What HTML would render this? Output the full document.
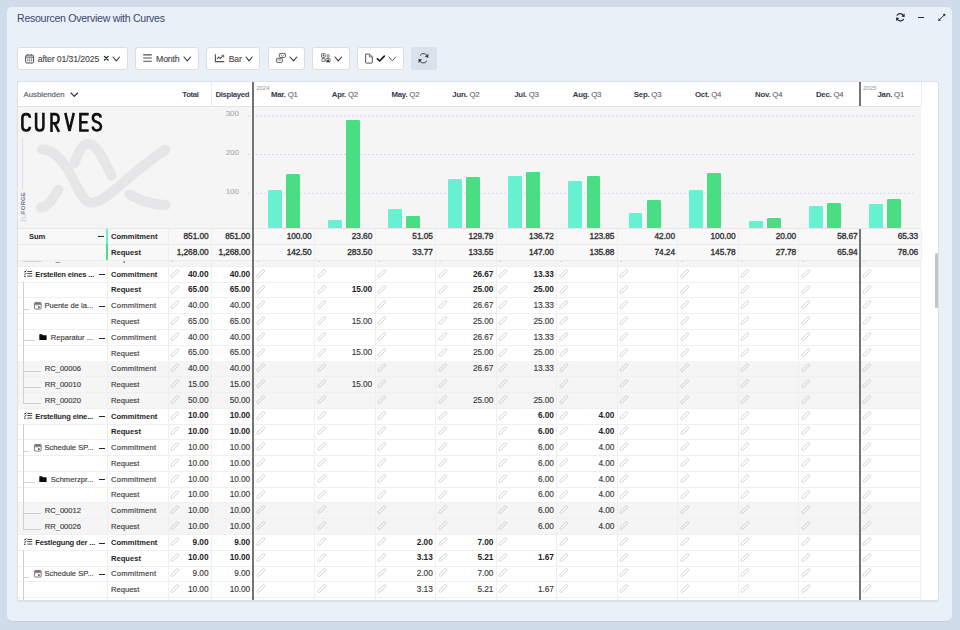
<!DOCTYPE html><html><head><meta charset="utf-8"><title>Resourcen Overview with Curves</title><style>
html,body{margin:0;padding:0;}
body{width:960px;height:630px;position:relative;overflow:hidden;background:#d0dcea;font-family:"Liberation Sans", sans-serif;}
body div, body svg{position:absolute;box-sizing:border-box;}
svg{overflow:visible;}
</style></head><body>
<div style="left:7px;top:7.3px;width:945px;height:613.7px;background:#e9f0f8;border-radius:5px;box-shadow:0 0.8px 0.6px rgba(0,0,0,0.08);"></div>
<div style="left:17.1px;top:10.61px;font-size:10.6px;line-height:14.84px;color:#3b4870;font-weight:normal;white-space:nowrap;letter-spacing:-0.3px;">Resourcen Overview with Curves</div>
<svg style="left:894px;top:12px;" width="12" height="11" viewBox="894 12 12 11"><g fill="none" stroke="#1d2846" stroke-width="1.25" stroke-linecap="round"><path d="M903.6,16.2 A3.6,3.6 0 0 0 897.2,15.2"/><path d="M897.0,18.4 A3.6,3.6 0 0 0 903.4,19.4"/></g><path d="M904.6,13.6 L904.6,17.0 L901.4,16.6 Z" fill="#1d2846"/><path d="M896.1,21.0 L896.1,17.6 L899.3,18.0 Z" fill="#1d2846"/></svg>
<div style="left:918.3px;top:16.9px;width:5.8px;height:1.2px;background:#1d2846;"></div>
<svg style="left:937px;top:13px;" width="10" height="9" viewBox="937 13 10 9"><path d="M939.4,19.8 L944.4,14.9" stroke="#1d2846" stroke-width="1.0"/><path d="M938.3,20.9 L938.6,18.3 L941,20.6 Z M945.4,13.8 L945.1,16.4 L942.7,14.1 Z" fill="#1d2846"/></svg>
<div style="left:16.75px;top:47px;width:111.25px;height:22.6px;background:#fff;border-radius:3px;border:1px solid #dadde2;"></div>
<svg style="left:24px;top:52.5px;" width="12" height="12" viewBox="24 52.5 12 12"><rect x="25.6" y="54.6" width="8" height="7.9" rx="1.2" fill="none" stroke="#4f4f55" stroke-width="1"/><path d="M25.6,56.6 H33.6" stroke="#4f4f55" stroke-width="1"/><path d="M27.7,53.7 V55 M31.5,53.7 V55" stroke="#4f4f55" stroke-width="0.9"/><g fill="#4f4f55"><rect x="27.2" y="58" width="1.2" height="1"/><rect x="29.1" y="58" width="1.2" height="1"/><rect x="31" y="58" width="1.2" height="1"/><rect x="27.2" y="59.8" width="1.2" height="1"/><rect x="29.1" y="59.8" width="1.2" height="1"/><rect x="31" y="59.8" width="1.2" height="1"/></g></svg>
<div style="left:37.75px;top:52.59px;font-size:8.8px;line-height:12.32px;color:#47474c;font-weight:normal;white-space:nowrap;letter-spacing:-0.17px;-webkit-text-stroke:0.12px #47474c;">after 01/31/2025</div>
<svg style="left:102.5px;top:55px;" width="7" height="6" viewBox="102.5 55 7 6"><path d="M103.9,56.3 L107.6,60.0 M107.6,56.3 L103.9,60.0" stroke="#1e1e1e" stroke-width="1.2" stroke-linecap="round"/></svg>
<svg style="left:111.9px;top:56.1px;" width="8.6" height="5.9" viewBox="111.9 56.1 8.6 5.9"><path d="M112.9,57.1 L116.2,61 L119.5,57.1" fill="none" stroke="#383838" stroke-width="1.1" stroke-linecap="round" stroke-linejoin="round"/></svg>
<div style="left:134.7px;top:47px;width:64.7px;height:22.6px;background:#fff;border-radius:3px;border:1px solid #dadde2;"></div>
<svg style="left:142px;top:53px;" width="11" height="10" viewBox="142 53 11 10"><path d="M143.2,54.8 H151.8 M143.2,58 H151.8 M143.2,61.2 H151.8" stroke="#4f4f55" stroke-width="1.15"/></svg>
<div style="left:156px;top:52.59px;font-size:8.8px;line-height:12.32px;color:#47474c;font-weight:normal;white-space:nowrap;letter-spacing:-0.2px;-webkit-text-stroke:0.12px #47474c;">Month</div>
<svg style="left:183.4px;top:56.1px;" width="8.6" height="5.9" viewBox="183.4 56.1 8.6 5.9"><path d="M184.4,57.1 L187.7,61 L191,57.1" fill="none" stroke="#383838" stroke-width="1.1" stroke-linecap="round" stroke-linejoin="round"/></svg>
<div style="left:206.3px;top:47px;width:54.2px;height:22.6px;background:#fff;border-radius:3px;border:1px solid #dadde2;"></div>
<svg style="left:214px;top:53px;" width="12" height="11" viewBox="214 53 12 11"><path d="M215.4,54.3 V61.6 H224.3" fill="none" stroke="#4f4f55" stroke-width="1.1"/><path d="M216.9,59.2 L218.7,57 L220.3,58.7 L222.6,56" fill="none" stroke="#4f4f55" stroke-width="1.05"/><path d="M221.6,55.2 H223.7 V57.3" fill="none" stroke="#4f4f55" stroke-width="1"/></svg>
<div style="left:228.7px;top:52.8px;font-size:8.6px;line-height:12.04px;color:#47474c;font-weight:normal;white-space:nowrap;letter-spacing:-0.1px;-webkit-text-stroke:0.12px #47474c;">Bar</div>
<svg style="left:245.1px;top:56.1px;" width="8.1" height="5.9" viewBox="245.1 56.1 8.1 5.9"><path d="M246.1,57.1 L249.15,61 L252.2,57.1" fill="none" stroke="#383838" stroke-width="1.1" stroke-linecap="round" stroke-linejoin="round"/></svg>
<div style="left:267.6px;top:47px;width:37.5px;height:22.6px;background:#fff;border-radius:3px;border:1px solid #dadde2;"></div>
<svg style="left:275px;top:52px;" width="12" height="12" viewBox="275 52 12 12"><rect x="279.4" y="53.4" width="6.1" height="4.0" rx="0.9" fill="none" stroke="#4f4f55" stroke-width="0.9"/><rect x="276.4" y="58.3" width="6.0" height="4.1" rx="0.9" fill="none" stroke="#4f4f55" stroke-width="0.9"/><path d="M280.4,54.4 L282.4,56.2 L284.6,54.5 M279.8,58 L281.2,57" fill="none" stroke="#4f4f55" stroke-width="0.65"/><path d="M277.4,60 H281.4" stroke="#4f4f55" stroke-width="0.6"/></svg>
<svg style="left:288.8px;top:56.1px;" width="8.9" height="5.9" viewBox="288.8 56.1 8.9 5.9"><path d="M289.8,57.1 L293.25,61 L296.7,57.1" fill="none" stroke="#383838" stroke-width="1.1" stroke-linecap="round" stroke-linejoin="round"/></svg>
<div style="left:311.7px;top:47px;width:38.05px;height:22.6px;background:#fff;border-radius:3px;border:1px solid #dadde2;"></div>
<svg style="left:320px;top:52px;" width="12" height="12" viewBox="320 52 12 12"><rect x="321.5" y="53.6" width="3.7" height="3.8" rx="0.6" fill="none" stroke="#4f4f55" stroke-width="0.8"/><ellipse cx="323.35" cy="55.5" rx="0.6" ry="1.0" fill="#333"/><rect x="327.1" y="54.7" width="2.0" height="2.5" rx="0.5" fill="none" stroke="#4f4f55" stroke-width="0.8"/><rect x="321.9" y="58.6" width="3.2" height="2.8" rx="0.5" fill="none" stroke="#4f4f55" stroke-width="0.8"/><rect x="326.1" y="58.4" width="4.0" height="3.6" rx="0.5" fill="none" stroke="#4f4f55" stroke-width="0.8"/><path d="M326.6,61.8 L328.1,58.9 L329.6,61.8 Z" fill="#111"/></svg>
<svg style="left:334.1px;top:56.1px;" width="8.6" height="5.9" viewBox="334.1 56.1 8.6 5.9"><path d="M335.1,57.1 L338.4,61 L341.7,57.1" fill="none" stroke="#383838" stroke-width="1.1" stroke-linecap="round" stroke-linejoin="round"/></svg>
<div style="left:356.7px;top:47px;width:47.3px;height:22.6px;background:#fff;border-radius:3px;border:1px solid #dadde2;"></div>
<svg style="left:364px;top:52.5px;" width="22" height="11" viewBox="364 52.5 22 11"><path d="M365.6,53.6 H369.6 L372.3,56.3 V62.1 Q372.3,62.6 371.8,62.6 H366.1 Q365.6,62.6 365.6,62.1 Z" fill="none" stroke="#4f4f55" stroke-width="0.95" stroke-linejoin="round"/><path d="M369.4,53.8 V56.5 H372.1" fill="none" stroke="#4f4f55" stroke-width="0.8"/><path d="M377.3,58.2 L379.6,60.5 L384.3,55.6" fill="none" stroke="#151515" stroke-width="1.6" stroke-linecap="round" stroke-linejoin="round"/></svg>
<svg style="left:387.8px;top:56.1px;" width="8.6" height="5.9" viewBox="387.8 56.1 8.6 5.9"><path d="M388.8,57.1 L392.1,61 L395.4,57.1" fill="none" stroke="#5a5a5a" stroke-width="1.0" stroke-linecap="round" stroke-linejoin="round"/></svg>
<div style="left:410.5px;top:47px;width:26.5px;height:22.6px;background:#d9e1ea;border-radius:3px;"></div>
<svg style="left:417px;top:51.5px;" width="13" height="13" viewBox="417 51.5 13 13"><g fill="none" stroke="#3c3c44" stroke-width="0.95" stroke-linecap="round"><path d="M427.5,56.6 A4.0,4.0 0 0 0 420.1,54.9"/><path d="M419.4,58.8 A4.0,4.0 0 0 0 426.8,60.6"/></g><path d="M428.4,53.2 L428.4,57.1 L424.8,56.5 Z" fill="#3c3c44"/><path d="M418.5,62.4 L418.5,58.4 L422.1,59.0 Z" fill="#3c3c44"/></svg>
<div style="left:16.7px;top:81px;width:922.3px;height:520.2px;background:#fff;border:1px solid #dde1e6;border-radius:3px;box-shadow:0 0.8px 0.8px rgba(0,0,0,0.07);"></div>
<div style="left:17.7px;top:105.5px;width:903.5px;height:1px;background:#e3e3e3;"></div>
<div style="left:23.6px;top:89.69px;font-size:7.75px;line-height:10.85px;color:#555c6c;font-weight:normal;white-space:nowrap;-webkit-text-stroke:0.15px #555c6c;">Ausblenden</div>
<svg style="left:70.2px;top:91.8px;" width="8.6" height="5.4" viewBox="70.2 91.8 8.6 5.4"><path d="M71.2,92.8 L74.5,96.2 L77.8,92.8" fill="none" stroke="#2e2e2e" stroke-width="1.1" stroke-linecap="round" stroke-linejoin="round"/></svg>
<div style="right:761.4px;top:89.54px;font-size:7.8px;line-height:10.92px;color:#384052;font-weight:bold;white-space:nowrap;text-align:right;letter-spacing:-0.35px;">Total</div>
<div style="right:710.8px;top:89.54px;font-size:7.8px;line-height:10.92px;color:#384052;font-weight:bold;white-space:nowrap;text-align:right;letter-spacing:-0.35px;">Displayed</div>
<div style="left:210.8px;top:82px;width:1px;height:23.5px;background:#ececec;"></div>
<div style="left:920.7px;top:82px;width:1px;height:23.5px;background:#ececec;"></div>
<div style="left:184.27px;top:89.54px;width:200px;font-size:7.8px;line-height:10.92px;color:#333;font-weight:normal;white-space:nowrap;text-align:center;letter-spacing:-0.22px;"><b style="color:#333a4a">Mar.</b> <span style="color:#5f6570;-webkit-text-stroke:0.12px #5f6570">Q1</span></div>
<div style="left:244.83px;top:89.54px;width:200px;font-size:7.8px;line-height:10.92px;color:#333;font-weight:normal;white-space:nowrap;text-align:center;letter-spacing:-0.22px;"><b style="color:#333a4a">Apr.</b> <span style="color:#5f6570;-webkit-text-stroke:0.12px #5f6570">Q2</span></div>
<div style="left:305.38px;top:89.54px;width:200px;font-size:7.8px;line-height:10.92px;color:#333;font-weight:normal;white-space:nowrap;text-align:center;letter-spacing:-0.22px;"><b style="color:#333a4a">May.</b> <span style="color:#5f6570;-webkit-text-stroke:0.12px #5f6570">Q2</span></div>
<div style="left:365.92px;top:89.54px;width:200px;font-size:7.8px;line-height:10.92px;color:#333;font-weight:normal;white-space:nowrap;text-align:center;letter-spacing:-0.22px;"><b style="color:#333a4a">Jun.</b> <span style="color:#5f6570;-webkit-text-stroke:0.12px #5f6570">Q2</span></div>
<div style="left:426.48px;top:89.54px;width:200px;font-size:7.8px;line-height:10.92px;color:#333;font-weight:normal;white-space:nowrap;text-align:center;letter-spacing:-0.22px;"><b style="color:#333a4a">Jul.</b> <span style="color:#5f6570;-webkit-text-stroke:0.12px #5f6570">Q3</span></div>
<div style="left:487.02px;top:89.54px;width:200px;font-size:7.8px;line-height:10.92px;color:#333;font-weight:normal;white-space:nowrap;text-align:center;letter-spacing:-0.22px;"><b style="color:#333a4a">Aug.</b> <span style="color:#5f6570;-webkit-text-stroke:0.12px #5f6570">Q3</span></div>
<div style="left:547.57px;top:89.54px;width:200px;font-size:7.8px;line-height:10.92px;color:#333;font-weight:normal;white-space:nowrap;text-align:center;letter-spacing:-0.22px;"><b style="color:#333a4a">Sep.</b> <span style="color:#5f6570;-webkit-text-stroke:0.12px #5f6570">Q3</span></div>
<div style="left:608.12px;top:89.54px;width:200px;font-size:7.8px;line-height:10.92px;color:#333;font-weight:normal;white-space:nowrap;text-align:center;letter-spacing:-0.22px;"><b style="color:#333a4a">Oct.</b> <span style="color:#5f6570;-webkit-text-stroke:0.12px #5f6570">Q4</span></div>
<div style="left:668.67px;top:89.54px;width:200px;font-size:7.8px;line-height:10.92px;color:#333;font-weight:normal;white-space:nowrap;text-align:center;letter-spacing:-0.22px;"><b style="color:#333a4a">Nov.</b> <span style="color:#5f6570;-webkit-text-stroke:0.12px #5f6570">Q4</span></div>
<div style="left:729.72px;top:89.54px;width:200px;font-size:7.8px;line-height:10.92px;color:#333;font-weight:normal;white-space:nowrap;text-align:center;letter-spacing:-0.22px;"><b style="color:#333a4a">Dec.</b> <span style="color:#5f6570;-webkit-text-stroke:0.12px #5f6570">Q4</span></div>
<div style="left:790.75px;top:89.54px;width:200px;font-size:7.8px;line-height:10.92px;color:#333;font-weight:normal;white-space:nowrap;text-align:center;letter-spacing:-0.22px;"><b style="color:#333a4a">Jan.</b> <span style="color:#5f6570;-webkit-text-stroke:0.12px #5f6570">Q1</span></div>
<div style="left:256.2px;top:83.91px;font-size:6.2px;line-height:8.68px;color:#999;font-weight:normal;white-space:nowrap;letter-spacing:-0.1px;">2024</div>
<div style="left:862.9px;top:83.91px;font-size:6.2px;line-height:8.68px;color:#999;font-weight:normal;white-space:nowrap;letter-spacing:-0.1px;">2025</div>
<div style="left:17.7px;top:106.5px;width:903.5px;height:122px;background:#f5f5f5;"></div>
<svg style="left:248px;top:110px;" width="673" height="90" viewBox="248 110 673 90"><path d="M248,115.8 H914.5" stroke="#c6cff0" stroke-width="0.9" stroke-dasharray="1.6,2.4"/><path d="M248,154.5 H914.5" stroke="#c6cff0" stroke-width="0.9" stroke-dasharray="1.6,2.4"/><path d="M248,193.3 H914.5" stroke="#c6cff0" stroke-width="0.9" stroke-dasharray="1.6,2.4"/></svg>
<div style="right:721px;top:108.13px;font-size:8px;line-height:11.2px;color:#ababab;font-weight:normal;white-space:nowrap;text-align:right;-webkit-text-stroke:0.1px #ababab;">300</div>
<div style="right:721px;top:146.83px;font-size:8px;line-height:11.2px;color:#ababab;font-weight:normal;white-space:nowrap;text-align:right;-webkit-text-stroke:0.1px #ababab;">200</div>
<div style="right:721px;top:185.63px;font-size:8px;line-height:11.2px;color:#ababab;font-weight:normal;white-space:nowrap;text-align:right;-webkit-text-stroke:0.1px #ababab;">100</div>
<div style="left:17.7px;top:228px;width:903.5px;height:1px;background:#e6e6e6;"></div>
<div style="left:267.9px;top:190.25px;width:13.9px;height:37.75px;background:#66f2d1;border-radius:1.3px 1.3px 0 0;"></div>
<div style="left:286px;top:173.87px;width:13.9px;height:54.13px;background:#4ade84;border-radius:1.3px 1.3px 0 0;"></div>
<div style="left:328.01px;top:219.7px;width:13.9px;height:8.3px;background:#66f2d1;border-radius:1.3px 1.3px 0 0;"></div>
<div style="left:346.11px;top:119.51px;width:13.9px;height:108.49px;background:#4ade84;border-radius:1.3px 1.3px 0 0;"></div>
<div style="left:388.12px;top:209.12px;width:13.9px;height:18.88px;background:#66f2d1;border-radius:1.3px 1.3px 0 0;"></div>
<div style="left:406.22px;top:215.78px;width:13.9px;height:12.22px;background:#4ade84;border-radius:1.3px 1.3px 0 0;"></div>
<div style="left:448.23px;top:178.77px;width:13.9px;height:49.23px;background:#66f2d1;border-radius:1.3px 1.3px 0 0;"></div>
<div style="left:466.33px;top:177.32px;width:13.9px;height:50.68px;background:#4ade84;border-radius:1.3px 1.3px 0 0;"></div>
<div style="left:508.34px;top:176.09px;width:13.9px;height:51.91px;background:#66f2d1;border-radius:1.3px 1.3px 0 0;"></div>
<div style="left:526.44px;top:172.13px;width:13.9px;height:55.87px;background:#4ade84;border-radius:1.3px 1.3px 0 0;"></div>
<div style="left:568.45px;top:181.06px;width:13.9px;height:46.94px;background:#66f2d1;border-radius:1.3px 1.3px 0 0;"></div>
<div style="left:586.55px;top:176.42px;width:13.9px;height:51.58px;background:#4ade84;border-radius:1.3px 1.3px 0 0;"></div>
<div style="left:628.56px;top:212.61px;width:13.9px;height:15.39px;background:#66f2d1;border-radius:1.3px 1.3px 0 0;"></div>
<div style="left:646.66px;top:200.18px;width:13.9px;height:27.82px;background:#4ade84;border-radius:1.3px 1.3px 0 0;"></div>
<div style="left:688.67px;top:190.25px;width:13.9px;height:37.75px;background:#66f2d1;border-radius:1.3px 1.3px 0 0;"></div>
<div style="left:706.77px;top:172.6px;width:13.9px;height:55.4px;background:#4ade84;border-radius:1.3px 1.3px 0 0;"></div>
<div style="left:748.78px;top:221.09px;width:13.9px;height:6.91px;background:#66f2d1;border-radius:1.3px 1.3px 0 0;"></div>
<div style="left:766.88px;top:218.09px;width:13.9px;height:9.91px;background:#4ade84;border-radius:1.3px 1.3px 0 0;"></div>
<div style="left:808.89px;top:206.18px;width:13.9px;height:21.82px;background:#66f2d1;border-radius:1.3px 1.3px 0 0;"></div>
<div style="left:826.99px;top:203.38px;width:13.9px;height:24.62px;background:#4ade84;border-radius:1.3px 1.3px 0 0;"></div>
<div style="left:869px;top:203.62px;width:13.9px;height:24.38px;background:#66f2d1;border-radius:1.3px 1.3px 0 0;"></div>
<div style="left:887.1px;top:198.71px;width:13.9px;height:29.29px;background:#4ade84;border-radius:1.3px 1.3px 0 0;"></div>
<svg style="left:18px;top:110px;" width="88" height="25" viewBox="18 110 88 25"><g fill="none" stroke="#111" stroke-width="2.55" stroke-linecap="butt" stroke-linejoin="miter"><path d="M29.9,117.6 V117.8 C29.9,115.6 28.5,114.1 26.15,114.1 C23.8,114.1 22.4,115.6 22.4,117.8 V126.7 C22.4,128.9 23.8,130.4 26.15,130.4 C28.5,130.4 29.9,128.9 29.9,126.7 V127.2"/><path d="M36.1,112.8 V126.7 C36.1,128.9 37.5,130.4 39.75,130.4 C42,130.4 43.4,128.9 43.4,126.7 V112.8"/><path d="M51.5,132 V114.1 H54.7 C57.2,114.1 58.6,115.6 58.6,118.7 C58.6,121.8 57.2,123.3 54.7,123.3 H51.5"/><path d="M54.6,123.4 L59,131.8"/><path d="M65.3,112.9 L69.5,131 L73.8,112.9"/><path d="M88.7,114.1 H80.4 V130.4 H88.7 M80.4,122.3 H87.6"/><path d="M100.7,117.6 C100.6,115.3 99.2,114.1 96.8,114.1 C94.3,114.1 92.9,115.6 92.9,117.9 C92.9,120.2 94.3,121.2 96.8,122 C99.5,122.9 100.9,124 100.9,126.6 C100.9,129 99.3,130.4 96.8,130.4 C94.2,130.4 92.8,129 92.8,126.6"/></g></svg>
<svg style="left:30px;top:135px;" width="145" height="80" viewBox="30 135 145 80"><g fill="none" stroke="#e5e6e8" stroke-width="10" stroke-linecap="round" stroke-linejoin="round"><path d="M42,149.5 C52,149.5 60,157 68,170 C77,185 82,201 90,202.5 C100,204 112,192 125,181 C140,168 153,158 165.5,149.5"/><path d="M74.5,163.5 C78,153 82,144 88.5,143.5 C96,143 104,160 111.5,175.5"/><path d="M58.5,189.5 C53,199 48,207 41,207.5"/><path d="M129.5,194.5 C140,200 150,204.5 165.5,205"/></g></svg>
<div style="left:22.3px;top:138px;width:0.9px;height:50.5px;background:#dadde3;"></div>
<div style="left:23.4px;top:203px;width:40px;height:10px;transform:translate(-50%,-50%) rotate(-90deg);font-size:5.9px;line-height:10px;font-weight:bold;color:#6a7694;text-align:center;letter-spacing:0.2px;white-space:nowrap">FORGE</div>
<div style="left:23.5px;top:218.3px;width:20px;height:10px;transform:translate(-50%,-50%) rotate(-90deg);font-size:6.8px;line-height:10px;font-weight:bold;color:#d6d8dd;text-align:center;white-space:nowrap">2U</div>
<div style="left:17.7px;top:260.3px;width:903.5px;height:339.9px;overflow:hidden;">
<div style="left:0px;top:-9.67px;width:903.5px;height:15.77px;background:#f5f5f5;"></div>
<div style="left:0px;top:5.6px;width:903.5px;height:1px;background:#f0f0f0;"></div>
<div style="left:27px;top:-6.41px;font-size:7.6px;line-height:10.64px;color:#383838;font-weight:normal;white-space:nowrap;-webkit-text-stroke:0.15px #444;">RR_00021</div>
<div style="left:5.7px;top:0.63px;width:18px;height:0.8px;background:#d0d0d0;"></div>
<div style="left:93.3px;top:-6.41px;font-size:7.6px;line-height:10.64px;color:#383838;font-weight:normal;white-space:nowrap;-webkit-text-stroke:0.15px #444;">Request</div>
<svg style="left:152.7px;top:-7.27px" width="10" height="10" viewBox="0 0 10 10"><path d="M1.0,6.5 L6.9,0.9 Q7.5,0.4 8.1,0.9 L8.6,1.4 Q9.1,2.0 8.6,2.6 L2.7,8.3 Q2.1,8.8 1.5,8.3 L1.0,7.8 Q0.5,7.1 1.0,6.5 Z" fill="none" stroke="#c6c6c6" stroke-width="0.8"/></svg>
<div style="left:70.78px;width:120px;top:-7.55px;font-size:8.3px;line-height:11.62px;color:#383838;font-weight:normal;white-space:nowrap;text-align:right;letter-spacing:-0.08px;-webkit-text-stroke:0.15px #444;">20.00</div>
<div style="left:112.38px;width:120px;top:-7.55px;font-size:8.3px;line-height:11.62px;color:#383838;font-weight:normal;white-space:nowrap;text-align:right;letter-spacing:-0.08px;-webkit-text-stroke:0.15px #444;">20.00</div>
<svg style="left:238.3px;top:-7.27px" width="10" height="10" viewBox="0 0 10 10"><path d="M1.0,6.5 L6.9,0.9 Q7.5,0.4 8.1,0.9 L8.6,1.4 Q9.1,2.0 8.6,2.6 L2.7,8.3 Q2.1,8.8 1.5,8.3 L1.0,7.8 Q0.5,7.1 1.0,6.5 Z" fill="none" stroke="#c6c6c6" stroke-width="0.8"/></svg>
<svg style="left:298.85px;top:-7.27px" width="10" height="10" viewBox="0 0 10 10"><path d="M1.0,6.5 L6.9,0.9 Q7.5,0.4 8.1,0.9 L8.6,1.4 Q9.1,2.0 8.6,2.6 L2.7,8.3 Q2.1,8.8 1.5,8.3 L1.0,7.8 Q0.5,7.1 1.0,6.5 Z" fill="none" stroke="#c6c6c6" stroke-width="0.8"/></svg>
<svg style="left:359.4px;top:-7.27px" width="10" height="10" viewBox="0 0 10 10"><path d="M1.0,6.5 L6.9,0.9 Q7.5,0.4 8.1,0.9 L8.6,1.4 Q9.1,2.0 8.6,2.6 L2.7,8.3 Q2.1,8.8 1.5,8.3 L1.0,7.8 Q0.5,7.1 1.0,6.5 Z" fill="none" stroke="#c6c6c6" stroke-width="0.8"/></svg>
<svg style="left:419.95px;top:-7.27px" width="10" height="10" viewBox="0 0 10 10"><path d="M1.0,6.5 L6.9,0.9 Q7.5,0.4 8.1,0.9 L8.6,1.4 Q9.1,2.0 8.6,2.6 L2.7,8.3 Q2.1,8.8 1.5,8.3 L1.0,7.8 Q0.5,7.1 1.0,6.5 Z" fill="none" stroke="#c6c6c6" stroke-width="0.8"/></svg>
<svg style="left:480.5px;top:-7.27px" width="10" height="10" viewBox="0 0 10 10"><path d="M1.0,6.5 L6.9,0.9 Q7.5,0.4 8.1,0.9 L8.6,1.4 Q9.1,2.0 8.6,2.6 L2.7,8.3 Q2.1,8.8 1.5,8.3 L1.0,7.8 Q0.5,7.1 1.0,6.5 Z" fill="none" stroke="#c6c6c6" stroke-width="0.8"/></svg>
<svg style="left:541.05px;top:-7.27px" width="10" height="10" viewBox="0 0 10 10"><path d="M1.0,6.5 L6.9,0.9 Q7.5,0.4 8.1,0.9 L8.6,1.4 Q9.1,2.0 8.6,2.6 L2.7,8.3 Q2.1,8.8 1.5,8.3 L1.0,7.8 Q0.5,7.1 1.0,6.5 Z" fill="none" stroke="#c6c6c6" stroke-width="0.8"/></svg>
<svg style="left:601.6px;top:-7.27px" width="10" height="10" viewBox="0 0 10 10"><path d="M1.0,6.5 L6.9,0.9 Q7.5,0.4 8.1,0.9 L8.6,1.4 Q9.1,2.0 8.6,2.6 L2.7,8.3 Q2.1,8.8 1.5,8.3 L1.0,7.8 Q0.5,7.1 1.0,6.5 Z" fill="none" stroke="#c6c6c6" stroke-width="0.8"/></svg>
<svg style="left:662.15px;top:-7.27px" width="10" height="10" viewBox="0 0 10 10"><path d="M1.0,6.5 L6.9,0.9 Q7.5,0.4 8.1,0.9 L8.6,1.4 Q9.1,2.0 8.6,2.6 L2.7,8.3 Q2.1,8.8 1.5,8.3 L1.0,7.8 Q0.5,7.1 1.0,6.5 Z" fill="none" stroke="#c6c6c6" stroke-width="0.8"/></svg>
<svg style="left:722.7px;top:-7.27px" width="10" height="10" viewBox="0 0 10 10"><path d="M1.0,6.5 L6.9,0.9 Q7.5,0.4 8.1,0.9 L8.6,1.4 Q9.1,2.0 8.6,2.6 L2.7,8.3 Q2.1,8.8 1.5,8.3 L1.0,7.8 Q0.5,7.1 1.0,6.5 Z" fill="none" stroke="#c6c6c6" stroke-width="0.8"/></svg>
<svg style="left:783.25px;top:-7.27px" width="10" height="10" viewBox="0 0 10 10"><path d="M1.0,6.5 L6.9,0.9 Q7.5,0.4 8.1,0.9 L8.6,1.4 Q9.1,2.0 8.6,2.6 L2.7,8.3 Q2.1,8.8 1.5,8.3 L1.0,7.8 Q0.5,7.1 1.0,6.5 Z" fill="none" stroke="#c6c6c6" stroke-width="0.8"/></svg>
<svg style="left:844.8px;top:-7.27px" width="10" height="10" viewBox="0 0 10 10"><path d="M1.0,6.5 L6.9,0.9 Q7.5,0.4 8.1,0.9 L8.6,1.4 Q9.1,2.0 8.6,2.6 L2.7,8.3 Q2.1,8.8 1.5,8.3 L1.0,7.8 Q0.5,7.1 1.0,6.5 Z" fill="none" stroke="#c6c6c6" stroke-width="0.8"/></svg>
<div style="left:0px;top:21.37px;width:903.5px;height:1px;background:#f0f0f0;"></div>
<svg style="left:6.3px;top:9.9px" width="10" height="9" viewBox="0 0 10 9"><g stroke="#222" fill="none"><path d="M3.3,1.4 H8.2 M3.3,3.6 H8.2 M3.3,6.1 H8.2" stroke-width="0.85"/><path d="M0.2,1.5 L0.9,2.2 L2.4,0.5 M0.2,3.8 L0.9,4.5 L2.4,2.8" stroke-width="0.95"/></g><circle cx="0.9" cy="6.2" r="0.75" fill="#222"/></svg>
<div style="left:17.6px;top:9.36px;font-size:7.6px;line-height:10.64px;color:#1f1f1f;font-weight:bold;white-space:nowrap;letter-spacing:-0.17px;">Erstellen eines ...</div>
<div style="left:81.3px;top:13.7px;width:6.3px;height:1.1px;background:#262626;"></div>
<div style="left:93.3px;top:9.36px;font-size:7.6px;line-height:10.64px;color:#1f1f1f;font-weight:bold;white-space:nowrap;">Commitment</div>
<svg style="left:152.7px;top:8.5px" width="10" height="10" viewBox="0 0 10 10"><path d="M1.0,6.5 L6.9,0.9 Q7.5,0.4 8.1,0.9 L8.6,1.4 Q9.1,2.0 8.6,2.6 L2.7,8.3 Q2.1,8.8 1.5,8.3 L1.0,7.8 Q0.5,7.1 1.0,6.5 Z" fill="none" stroke="#c6c6c6" stroke-width="0.8"/></svg>
<div style="left:70.78px;width:120px;top:8.22px;font-size:8.3px;line-height:11.62px;color:#1f1f1f;font-weight:bold;white-space:nowrap;text-align:right;letter-spacing:-0.08px;">40.00</div>
<div style="left:112.38px;width:120px;top:8.22px;font-size:8.3px;line-height:11.62px;color:#1f1f1f;font-weight:bold;white-space:nowrap;text-align:right;letter-spacing:-0.08px;">40.00</div>
<svg style="left:238.3px;top:8.5px" width="10" height="10" viewBox="0 0 10 10"><path d="M1.0,6.5 L6.9,0.9 Q7.5,0.4 8.1,0.9 L8.6,1.4 Q9.1,2.0 8.6,2.6 L2.7,8.3 Q2.1,8.8 1.5,8.3 L1.0,7.8 Q0.5,7.1 1.0,6.5 Z" fill="none" stroke="#c6c6c6" stroke-width="0.8"/></svg>
<svg style="left:298.85px;top:8.5px" width="10" height="10" viewBox="0 0 10 10"><path d="M1.0,6.5 L6.9,0.9 Q7.5,0.4 8.1,0.9 L8.6,1.4 Q9.1,2.0 8.6,2.6 L2.7,8.3 Q2.1,8.8 1.5,8.3 L1.0,7.8 Q0.5,7.1 1.0,6.5 Z" fill="none" stroke="#c6c6c6" stroke-width="0.8"/></svg>
<svg style="left:359.4px;top:8.5px" width="10" height="10" viewBox="0 0 10 10"><path d="M1.0,6.5 L6.9,0.9 Q7.5,0.4 8.1,0.9 L8.6,1.4 Q9.1,2.0 8.6,2.6 L2.7,8.3 Q2.1,8.8 1.5,8.3 L1.0,7.8 Q0.5,7.1 1.0,6.5 Z" fill="none" stroke="#c6c6c6" stroke-width="0.8"/></svg>
<svg style="left:419.95px;top:8.5px" width="10" height="10" viewBox="0 0 10 10"><path d="M1.0,6.5 L6.9,0.9 Q7.5,0.4 8.1,0.9 L8.6,1.4 Q9.1,2.0 8.6,2.6 L2.7,8.3 Q2.1,8.8 1.5,8.3 L1.0,7.8 Q0.5,7.1 1.0,6.5 Z" fill="none" stroke="#c6c6c6" stroke-width="0.8"/></svg>
<div style="left:355.58px;width:120px;top:8.22px;font-size:8.3px;line-height:11.62px;color:#1f1f1f;font-weight:bold;white-space:nowrap;text-align:right;letter-spacing:-0.08px;">26.67</div>
<svg style="left:480.5px;top:8.5px" width="10" height="10" viewBox="0 0 10 10"><path d="M1.0,6.5 L6.9,0.9 Q7.5,0.4 8.1,0.9 L8.6,1.4 Q9.1,2.0 8.6,2.6 L2.7,8.3 Q2.1,8.8 1.5,8.3 L1.0,7.8 Q0.5,7.1 1.0,6.5 Z" fill="none" stroke="#c6c6c6" stroke-width="0.8"/></svg>
<div style="left:416.13px;width:120px;top:8.22px;font-size:8.3px;line-height:11.62px;color:#1f1f1f;font-weight:bold;white-space:nowrap;text-align:right;letter-spacing:-0.08px;">13.33</div>
<svg style="left:541.05px;top:8.5px" width="10" height="10" viewBox="0 0 10 10"><path d="M1.0,6.5 L6.9,0.9 Q7.5,0.4 8.1,0.9 L8.6,1.4 Q9.1,2.0 8.6,2.6 L2.7,8.3 Q2.1,8.8 1.5,8.3 L1.0,7.8 Q0.5,7.1 1.0,6.5 Z" fill="none" stroke="#c6c6c6" stroke-width="0.8"/></svg>
<svg style="left:601.6px;top:8.5px" width="10" height="10" viewBox="0 0 10 10"><path d="M1.0,6.5 L6.9,0.9 Q7.5,0.4 8.1,0.9 L8.6,1.4 Q9.1,2.0 8.6,2.6 L2.7,8.3 Q2.1,8.8 1.5,8.3 L1.0,7.8 Q0.5,7.1 1.0,6.5 Z" fill="none" stroke="#c6c6c6" stroke-width="0.8"/></svg>
<svg style="left:662.15px;top:8.5px" width="10" height="10" viewBox="0 0 10 10"><path d="M1.0,6.5 L6.9,0.9 Q7.5,0.4 8.1,0.9 L8.6,1.4 Q9.1,2.0 8.6,2.6 L2.7,8.3 Q2.1,8.8 1.5,8.3 L1.0,7.8 Q0.5,7.1 1.0,6.5 Z" fill="none" stroke="#c6c6c6" stroke-width="0.8"/></svg>
<svg style="left:722.7px;top:8.5px" width="10" height="10" viewBox="0 0 10 10"><path d="M1.0,6.5 L6.9,0.9 Q7.5,0.4 8.1,0.9 L8.6,1.4 Q9.1,2.0 8.6,2.6 L2.7,8.3 Q2.1,8.8 1.5,8.3 L1.0,7.8 Q0.5,7.1 1.0,6.5 Z" fill="none" stroke="#c6c6c6" stroke-width="0.8"/></svg>
<svg style="left:783.25px;top:8.5px" width="10" height="10" viewBox="0 0 10 10"><path d="M1.0,6.5 L6.9,0.9 Q7.5,0.4 8.1,0.9 L8.6,1.4 Q9.1,2.0 8.6,2.6 L2.7,8.3 Q2.1,8.8 1.5,8.3 L1.0,7.8 Q0.5,7.1 1.0,6.5 Z" fill="none" stroke="#c6c6c6" stroke-width="0.8"/></svg>
<svg style="left:844.8px;top:8.5px" width="10" height="10" viewBox="0 0 10 10"><path d="M1.0,6.5 L6.9,0.9 Q7.5,0.4 8.1,0.9 L8.6,1.4 Q9.1,2.0 8.6,2.6 L2.7,8.3 Q2.1,8.8 1.5,8.3 L1.0,7.8 Q0.5,7.1 1.0,6.5 Z" fill="none" stroke="#c6c6c6" stroke-width="0.8"/></svg>
<div style="left:0px;top:37.14px;width:903.5px;height:1px;background:#f0f0f0;"></div>
<div style="left:93.3px;top:25.13px;font-size:7.6px;line-height:10.64px;color:#1f1f1f;font-weight:bold;white-space:nowrap;">Request</div>
<svg style="left:152.7px;top:24.27px" width="10" height="10" viewBox="0 0 10 10"><path d="M1.0,6.5 L6.9,0.9 Q7.5,0.4 8.1,0.9 L8.6,1.4 Q9.1,2.0 8.6,2.6 L2.7,8.3 Q2.1,8.8 1.5,8.3 L1.0,7.8 Q0.5,7.1 1.0,6.5 Z" fill="none" stroke="#c6c6c6" stroke-width="0.8"/></svg>
<div style="left:70.78px;width:120px;top:23.99px;font-size:8.3px;line-height:11.62px;color:#1f1f1f;font-weight:bold;white-space:nowrap;text-align:right;letter-spacing:-0.08px;">65.00</div>
<div style="left:112.38px;width:120px;top:23.99px;font-size:8.3px;line-height:11.62px;color:#1f1f1f;font-weight:bold;white-space:nowrap;text-align:right;letter-spacing:-0.08px;">65.00</div>
<svg style="left:238.3px;top:24.27px" width="10" height="10" viewBox="0 0 10 10"><path d="M1.0,6.5 L6.9,0.9 Q7.5,0.4 8.1,0.9 L8.6,1.4 Q9.1,2.0 8.6,2.6 L2.7,8.3 Q2.1,8.8 1.5,8.3 L1.0,7.8 Q0.5,7.1 1.0,6.5 Z" fill="none" stroke="#c6c6c6" stroke-width="0.8"/></svg>
<svg style="left:298.85px;top:24.27px" width="10" height="10" viewBox="0 0 10 10"><path d="M1.0,6.5 L6.9,0.9 Q7.5,0.4 8.1,0.9 L8.6,1.4 Q9.1,2.0 8.6,2.6 L2.7,8.3 Q2.1,8.8 1.5,8.3 L1.0,7.8 Q0.5,7.1 1.0,6.5 Z" fill="none" stroke="#c6c6c6" stroke-width="0.8"/></svg>
<div style="left:234.48px;width:120px;top:23.99px;font-size:8.3px;line-height:11.62px;color:#1f1f1f;font-weight:bold;white-space:nowrap;text-align:right;letter-spacing:-0.08px;">15.00</div>
<svg style="left:359.4px;top:24.27px" width="10" height="10" viewBox="0 0 10 10"><path d="M1.0,6.5 L6.9,0.9 Q7.5,0.4 8.1,0.9 L8.6,1.4 Q9.1,2.0 8.6,2.6 L2.7,8.3 Q2.1,8.8 1.5,8.3 L1.0,7.8 Q0.5,7.1 1.0,6.5 Z" fill="none" stroke="#c6c6c6" stroke-width="0.8"/></svg>
<svg style="left:419.95px;top:24.27px" width="10" height="10" viewBox="0 0 10 10"><path d="M1.0,6.5 L6.9,0.9 Q7.5,0.4 8.1,0.9 L8.6,1.4 Q9.1,2.0 8.6,2.6 L2.7,8.3 Q2.1,8.8 1.5,8.3 L1.0,7.8 Q0.5,7.1 1.0,6.5 Z" fill="none" stroke="#c6c6c6" stroke-width="0.8"/></svg>
<div style="left:355.58px;width:120px;top:23.99px;font-size:8.3px;line-height:11.62px;color:#1f1f1f;font-weight:bold;white-space:nowrap;text-align:right;letter-spacing:-0.08px;">25.00</div>
<svg style="left:480.5px;top:24.27px" width="10" height="10" viewBox="0 0 10 10"><path d="M1.0,6.5 L6.9,0.9 Q7.5,0.4 8.1,0.9 L8.6,1.4 Q9.1,2.0 8.6,2.6 L2.7,8.3 Q2.1,8.8 1.5,8.3 L1.0,7.8 Q0.5,7.1 1.0,6.5 Z" fill="none" stroke="#c6c6c6" stroke-width="0.8"/></svg>
<div style="left:416.13px;width:120px;top:23.99px;font-size:8.3px;line-height:11.62px;color:#1f1f1f;font-weight:bold;white-space:nowrap;text-align:right;letter-spacing:-0.08px;">25.00</div>
<svg style="left:541.05px;top:24.27px" width="10" height="10" viewBox="0 0 10 10"><path d="M1.0,6.5 L6.9,0.9 Q7.5,0.4 8.1,0.9 L8.6,1.4 Q9.1,2.0 8.6,2.6 L2.7,8.3 Q2.1,8.8 1.5,8.3 L1.0,7.8 Q0.5,7.1 1.0,6.5 Z" fill="none" stroke="#c6c6c6" stroke-width="0.8"/></svg>
<svg style="left:601.6px;top:24.27px" width="10" height="10" viewBox="0 0 10 10"><path d="M1.0,6.5 L6.9,0.9 Q7.5,0.4 8.1,0.9 L8.6,1.4 Q9.1,2.0 8.6,2.6 L2.7,8.3 Q2.1,8.8 1.5,8.3 L1.0,7.8 Q0.5,7.1 1.0,6.5 Z" fill="none" stroke="#c6c6c6" stroke-width="0.8"/></svg>
<svg style="left:662.15px;top:24.27px" width="10" height="10" viewBox="0 0 10 10"><path d="M1.0,6.5 L6.9,0.9 Q7.5,0.4 8.1,0.9 L8.6,1.4 Q9.1,2.0 8.6,2.6 L2.7,8.3 Q2.1,8.8 1.5,8.3 L1.0,7.8 Q0.5,7.1 1.0,6.5 Z" fill="none" stroke="#c6c6c6" stroke-width="0.8"/></svg>
<svg style="left:722.7px;top:24.27px" width="10" height="10" viewBox="0 0 10 10"><path d="M1.0,6.5 L6.9,0.9 Q7.5,0.4 8.1,0.9 L8.6,1.4 Q9.1,2.0 8.6,2.6 L2.7,8.3 Q2.1,8.8 1.5,8.3 L1.0,7.8 Q0.5,7.1 1.0,6.5 Z" fill="none" stroke="#c6c6c6" stroke-width="0.8"/></svg>
<svg style="left:783.25px;top:24.27px" width="10" height="10" viewBox="0 0 10 10"><path d="M1.0,6.5 L6.9,0.9 Q7.5,0.4 8.1,0.9 L8.6,1.4 Q9.1,2.0 8.6,2.6 L2.7,8.3 Q2.1,8.8 1.5,8.3 L1.0,7.8 Q0.5,7.1 1.0,6.5 Z" fill="none" stroke="#c6c6c6" stroke-width="0.8"/></svg>
<svg style="left:844.8px;top:24.27px" width="10" height="10" viewBox="0 0 10 10"><path d="M1.0,6.5 L6.9,0.9 Q7.5,0.4 8.1,0.9 L8.6,1.4 Q9.1,2.0 8.6,2.6 L2.7,8.3 Q2.1,8.8 1.5,8.3 L1.0,7.8 Q0.5,7.1 1.0,6.5 Z" fill="none" stroke="#c6c6c6" stroke-width="0.8"/></svg>
<div style="left:0px;top:52.91px;width:903.5px;height:1px;background:#f0f0f0;"></div>
<svg style="left:15.9px;top:41.34px" width="9" height="9" viewBox="0 0 9 9"><rect x="0.45" y="0.45" width="6.7" height="6.6" rx="1" fill="none" stroke="#5a5560" stroke-width="0.8"/><rect x="0.8" y="0.8" width="6.0" height="2.0" fill="#77737c"/><path d="M1.5,3.2 L4.2,3.2" stroke="#999" stroke-width="0.6"/><circle cx="4.9" cy="5.0" r="0.85" fill="#111"/></svg>
<div style="left:26.7px;top:40.9px;font-size:7.6px;line-height:10.64px;color:#383838;font-weight:normal;white-space:nowrap;-webkit-text-stroke:0.15px #444;">Puente de la...</div>
<div style="left:5.7px;top:48.54px;width:6.1px;height:0.8px;background:#d4d4d4;"></div>
<div style="left:81.3px;top:45.7px;width:6.3px;height:1.1px;background:#262626;"></div>
<div style="left:93.3px;top:40.9px;font-size:7.6px;line-height:10.64px;color:#383838;font-weight:normal;white-space:nowrap;-webkit-text-stroke:0.15px #444;letter-spacing:0.22px;">Commitment</div>
<svg style="left:152.7px;top:40.04px" width="10" height="10" viewBox="0 0 10 10"><path d="M1.0,6.5 L6.9,0.9 Q7.5,0.4 8.1,0.9 L8.6,1.4 Q9.1,2.0 8.6,2.6 L2.7,8.3 Q2.1,8.8 1.5,8.3 L1.0,7.8 Q0.5,7.1 1.0,6.5 Z" fill="none" stroke="#c6c6c6" stroke-width="0.8"/></svg>
<div style="left:70.78px;width:120px;top:39.76px;font-size:8.3px;line-height:11.62px;color:#383838;font-weight:normal;white-space:nowrap;text-align:right;letter-spacing:-0.08px;-webkit-text-stroke:0.15px #444;">40.00</div>
<div style="left:112.38px;width:120px;top:39.76px;font-size:8.3px;line-height:11.62px;color:#383838;font-weight:normal;white-space:nowrap;text-align:right;letter-spacing:-0.08px;-webkit-text-stroke:0.15px #444;">40.00</div>
<svg style="left:238.3px;top:40.04px" width="10" height="10" viewBox="0 0 10 10"><path d="M1.0,6.5 L6.9,0.9 Q7.5,0.4 8.1,0.9 L8.6,1.4 Q9.1,2.0 8.6,2.6 L2.7,8.3 Q2.1,8.8 1.5,8.3 L1.0,7.8 Q0.5,7.1 1.0,6.5 Z" fill="none" stroke="#c6c6c6" stroke-width="0.8"/></svg>
<svg style="left:298.85px;top:40.04px" width="10" height="10" viewBox="0 0 10 10"><path d="M1.0,6.5 L6.9,0.9 Q7.5,0.4 8.1,0.9 L8.6,1.4 Q9.1,2.0 8.6,2.6 L2.7,8.3 Q2.1,8.8 1.5,8.3 L1.0,7.8 Q0.5,7.1 1.0,6.5 Z" fill="none" stroke="#c6c6c6" stroke-width="0.8"/></svg>
<svg style="left:359.4px;top:40.04px" width="10" height="10" viewBox="0 0 10 10"><path d="M1.0,6.5 L6.9,0.9 Q7.5,0.4 8.1,0.9 L8.6,1.4 Q9.1,2.0 8.6,2.6 L2.7,8.3 Q2.1,8.8 1.5,8.3 L1.0,7.8 Q0.5,7.1 1.0,6.5 Z" fill="none" stroke="#c6c6c6" stroke-width="0.8"/></svg>
<svg style="left:419.95px;top:40.04px" width="10" height="10" viewBox="0 0 10 10"><path d="M1.0,6.5 L6.9,0.9 Q7.5,0.4 8.1,0.9 L8.6,1.4 Q9.1,2.0 8.6,2.6 L2.7,8.3 Q2.1,8.8 1.5,8.3 L1.0,7.8 Q0.5,7.1 1.0,6.5 Z" fill="none" stroke="#c6c6c6" stroke-width="0.8"/></svg>
<div style="left:355.58px;width:120px;top:39.76px;font-size:8.3px;line-height:11.62px;color:#383838;font-weight:normal;white-space:nowrap;text-align:right;letter-spacing:-0.08px;-webkit-text-stroke:0.15px #444;">26.67</div>
<svg style="left:480.5px;top:40.04px" width="10" height="10" viewBox="0 0 10 10"><path d="M1.0,6.5 L6.9,0.9 Q7.5,0.4 8.1,0.9 L8.6,1.4 Q9.1,2.0 8.6,2.6 L2.7,8.3 Q2.1,8.8 1.5,8.3 L1.0,7.8 Q0.5,7.1 1.0,6.5 Z" fill="none" stroke="#c6c6c6" stroke-width="0.8"/></svg>
<div style="left:416.13px;width:120px;top:39.76px;font-size:8.3px;line-height:11.62px;color:#383838;font-weight:normal;white-space:nowrap;text-align:right;letter-spacing:-0.08px;-webkit-text-stroke:0.15px #444;">13.33</div>
<svg style="left:541.05px;top:40.04px" width="10" height="10" viewBox="0 0 10 10"><path d="M1.0,6.5 L6.9,0.9 Q7.5,0.4 8.1,0.9 L8.6,1.4 Q9.1,2.0 8.6,2.6 L2.7,8.3 Q2.1,8.8 1.5,8.3 L1.0,7.8 Q0.5,7.1 1.0,6.5 Z" fill="none" stroke="#c6c6c6" stroke-width="0.8"/></svg>
<svg style="left:601.6px;top:40.04px" width="10" height="10" viewBox="0 0 10 10"><path d="M1.0,6.5 L6.9,0.9 Q7.5,0.4 8.1,0.9 L8.6,1.4 Q9.1,2.0 8.6,2.6 L2.7,8.3 Q2.1,8.8 1.5,8.3 L1.0,7.8 Q0.5,7.1 1.0,6.5 Z" fill="none" stroke="#c6c6c6" stroke-width="0.8"/></svg>
<svg style="left:662.15px;top:40.04px" width="10" height="10" viewBox="0 0 10 10"><path d="M1.0,6.5 L6.9,0.9 Q7.5,0.4 8.1,0.9 L8.6,1.4 Q9.1,2.0 8.6,2.6 L2.7,8.3 Q2.1,8.8 1.5,8.3 L1.0,7.8 Q0.5,7.1 1.0,6.5 Z" fill="none" stroke="#c6c6c6" stroke-width="0.8"/></svg>
<svg style="left:722.7px;top:40.04px" width="10" height="10" viewBox="0 0 10 10"><path d="M1.0,6.5 L6.9,0.9 Q7.5,0.4 8.1,0.9 L8.6,1.4 Q9.1,2.0 8.6,2.6 L2.7,8.3 Q2.1,8.8 1.5,8.3 L1.0,7.8 Q0.5,7.1 1.0,6.5 Z" fill="none" stroke="#c6c6c6" stroke-width="0.8"/></svg>
<svg style="left:783.25px;top:40.04px" width="10" height="10" viewBox="0 0 10 10"><path d="M1.0,6.5 L6.9,0.9 Q7.5,0.4 8.1,0.9 L8.6,1.4 Q9.1,2.0 8.6,2.6 L2.7,8.3 Q2.1,8.8 1.5,8.3 L1.0,7.8 Q0.5,7.1 1.0,6.5 Z" fill="none" stroke="#c6c6c6" stroke-width="0.8"/></svg>
<svg style="left:844.8px;top:40.04px" width="10" height="10" viewBox="0 0 10 10"><path d="M1.0,6.5 L6.9,0.9 Q7.5,0.4 8.1,0.9 L8.6,1.4 Q9.1,2.0 8.6,2.6 L2.7,8.3 Q2.1,8.8 1.5,8.3 L1.0,7.8 Q0.5,7.1 1.0,6.5 Z" fill="none" stroke="#c6c6c6" stroke-width="0.8"/></svg>
<div style="left:0px;top:68.68px;width:903.5px;height:1px;background:#f0f0f0;"></div>
<div style="left:93.3px;top:56.67px;font-size:7.6px;line-height:10.64px;color:#383838;font-weight:normal;white-space:nowrap;-webkit-text-stroke:0.15px #444;">Request</div>
<svg style="left:152.7px;top:55.81px" width="10" height="10" viewBox="0 0 10 10"><path d="M1.0,6.5 L6.9,0.9 Q7.5,0.4 8.1,0.9 L8.6,1.4 Q9.1,2.0 8.6,2.6 L2.7,8.3 Q2.1,8.8 1.5,8.3 L1.0,7.8 Q0.5,7.1 1.0,6.5 Z" fill="none" stroke="#c6c6c6" stroke-width="0.8"/></svg>
<div style="left:70.78px;width:120px;top:55.53px;font-size:8.3px;line-height:11.62px;color:#383838;font-weight:normal;white-space:nowrap;text-align:right;letter-spacing:-0.08px;-webkit-text-stroke:0.15px #444;">65.00</div>
<div style="left:112.38px;width:120px;top:55.53px;font-size:8.3px;line-height:11.62px;color:#383838;font-weight:normal;white-space:nowrap;text-align:right;letter-spacing:-0.08px;-webkit-text-stroke:0.15px #444;">65.00</div>
<svg style="left:238.3px;top:55.81px" width="10" height="10" viewBox="0 0 10 10"><path d="M1.0,6.5 L6.9,0.9 Q7.5,0.4 8.1,0.9 L8.6,1.4 Q9.1,2.0 8.6,2.6 L2.7,8.3 Q2.1,8.8 1.5,8.3 L1.0,7.8 Q0.5,7.1 1.0,6.5 Z" fill="none" stroke="#c6c6c6" stroke-width="0.8"/></svg>
<svg style="left:298.85px;top:55.81px" width="10" height="10" viewBox="0 0 10 10"><path d="M1.0,6.5 L6.9,0.9 Q7.5,0.4 8.1,0.9 L8.6,1.4 Q9.1,2.0 8.6,2.6 L2.7,8.3 Q2.1,8.8 1.5,8.3 L1.0,7.8 Q0.5,7.1 1.0,6.5 Z" fill="none" stroke="#c6c6c6" stroke-width="0.8"/></svg>
<div style="left:234.48px;width:120px;top:55.53px;font-size:8.3px;line-height:11.62px;color:#383838;font-weight:normal;white-space:nowrap;text-align:right;letter-spacing:-0.08px;-webkit-text-stroke:0.15px #444;">15.00</div>
<svg style="left:359.4px;top:55.81px" width="10" height="10" viewBox="0 0 10 10"><path d="M1.0,6.5 L6.9,0.9 Q7.5,0.4 8.1,0.9 L8.6,1.4 Q9.1,2.0 8.6,2.6 L2.7,8.3 Q2.1,8.8 1.5,8.3 L1.0,7.8 Q0.5,7.1 1.0,6.5 Z" fill="none" stroke="#c6c6c6" stroke-width="0.8"/></svg>
<svg style="left:419.95px;top:55.81px" width="10" height="10" viewBox="0 0 10 10"><path d="M1.0,6.5 L6.9,0.9 Q7.5,0.4 8.1,0.9 L8.6,1.4 Q9.1,2.0 8.6,2.6 L2.7,8.3 Q2.1,8.8 1.5,8.3 L1.0,7.8 Q0.5,7.1 1.0,6.5 Z" fill="none" stroke="#c6c6c6" stroke-width="0.8"/></svg>
<div style="left:355.58px;width:120px;top:55.53px;font-size:8.3px;line-height:11.62px;color:#383838;font-weight:normal;white-space:nowrap;text-align:right;letter-spacing:-0.08px;-webkit-text-stroke:0.15px #444;">25.00</div>
<svg style="left:480.5px;top:55.81px" width="10" height="10" viewBox="0 0 10 10"><path d="M1.0,6.5 L6.9,0.9 Q7.5,0.4 8.1,0.9 L8.6,1.4 Q9.1,2.0 8.6,2.6 L2.7,8.3 Q2.1,8.8 1.5,8.3 L1.0,7.8 Q0.5,7.1 1.0,6.5 Z" fill="none" stroke="#c6c6c6" stroke-width="0.8"/></svg>
<div style="left:416.13px;width:120px;top:55.53px;font-size:8.3px;line-height:11.62px;color:#383838;font-weight:normal;white-space:nowrap;text-align:right;letter-spacing:-0.08px;-webkit-text-stroke:0.15px #444;">25.00</div>
<svg style="left:541.05px;top:55.81px" width="10" height="10" viewBox="0 0 10 10"><path d="M1.0,6.5 L6.9,0.9 Q7.5,0.4 8.1,0.9 L8.6,1.4 Q9.1,2.0 8.6,2.6 L2.7,8.3 Q2.1,8.8 1.5,8.3 L1.0,7.8 Q0.5,7.1 1.0,6.5 Z" fill="none" stroke="#c6c6c6" stroke-width="0.8"/></svg>
<svg style="left:601.6px;top:55.81px" width="10" height="10" viewBox="0 0 10 10"><path d="M1.0,6.5 L6.9,0.9 Q7.5,0.4 8.1,0.9 L8.6,1.4 Q9.1,2.0 8.6,2.6 L2.7,8.3 Q2.1,8.8 1.5,8.3 L1.0,7.8 Q0.5,7.1 1.0,6.5 Z" fill="none" stroke="#c6c6c6" stroke-width="0.8"/></svg>
<svg style="left:662.15px;top:55.81px" width="10" height="10" viewBox="0 0 10 10"><path d="M1.0,6.5 L6.9,0.9 Q7.5,0.4 8.1,0.9 L8.6,1.4 Q9.1,2.0 8.6,2.6 L2.7,8.3 Q2.1,8.8 1.5,8.3 L1.0,7.8 Q0.5,7.1 1.0,6.5 Z" fill="none" stroke="#c6c6c6" stroke-width="0.8"/></svg>
<svg style="left:722.7px;top:55.81px" width="10" height="10" viewBox="0 0 10 10"><path d="M1.0,6.5 L6.9,0.9 Q7.5,0.4 8.1,0.9 L8.6,1.4 Q9.1,2.0 8.6,2.6 L2.7,8.3 Q2.1,8.8 1.5,8.3 L1.0,7.8 Q0.5,7.1 1.0,6.5 Z" fill="none" stroke="#c6c6c6" stroke-width="0.8"/></svg>
<svg style="left:783.25px;top:55.81px" width="10" height="10" viewBox="0 0 10 10"><path d="M1.0,6.5 L6.9,0.9 Q7.5,0.4 8.1,0.9 L8.6,1.4 Q9.1,2.0 8.6,2.6 L2.7,8.3 Q2.1,8.8 1.5,8.3 L1.0,7.8 Q0.5,7.1 1.0,6.5 Z" fill="none" stroke="#c6c6c6" stroke-width="0.8"/></svg>
<svg style="left:844.8px;top:55.81px" width="10" height="10" viewBox="0 0 10 10"><path d="M1.0,6.5 L6.9,0.9 Q7.5,0.4 8.1,0.9 L8.6,1.4 Q9.1,2.0 8.6,2.6 L2.7,8.3 Q2.1,8.8 1.5,8.3 L1.0,7.8 Q0.5,7.1 1.0,6.5 Z" fill="none" stroke="#c6c6c6" stroke-width="0.8"/></svg>
<div style="left:0px;top:84.45px;width:903.5px;height:1px;background:#f0f0f0;"></div>
<svg style="left:21.7px;top:74.18px" width="9" height="8" viewBox="0 0 9 8"><path d="M0.3,0.8 Q0.3,0.3 0.8,0.3 H3.1 L4,1.3 H7.1 Q7.6,1.3 7.6,1.8 V5.6 Q7.6,6.1 7.1,6.1 H0.8 Q0.3,6.1 0.3,5.6 Z" fill="#0a0a0a"/></svg>
<div style="left:33.1px;top:72.44px;font-size:7.6px;line-height:10.64px;color:#383838;font-weight:normal;white-space:nowrap;-webkit-text-stroke:0.15px #444;">Reparatur ...</div>
<div style="left:5.7px;top:80.08px;width:11.9px;height:0.8px;background:#d4d4d4;"></div>
<div style="left:81.3px;top:77.7px;width:6.3px;height:1.1px;background:#262626;"></div>
<div style="left:93.3px;top:72.44px;font-size:7.6px;line-height:10.64px;color:#383838;font-weight:normal;white-space:nowrap;-webkit-text-stroke:0.15px #444;letter-spacing:0.22px;">Commitment</div>
<svg style="left:152.7px;top:71.58px" width="10" height="10" viewBox="0 0 10 10"><path d="M1.0,6.5 L6.9,0.9 Q7.5,0.4 8.1,0.9 L8.6,1.4 Q9.1,2.0 8.6,2.6 L2.7,8.3 Q2.1,8.8 1.5,8.3 L1.0,7.8 Q0.5,7.1 1.0,6.5 Z" fill="none" stroke="#c6c6c6" stroke-width="0.8"/></svg>
<div style="left:70.78px;width:120px;top:71.3px;font-size:8.3px;line-height:11.62px;color:#383838;font-weight:normal;white-space:nowrap;text-align:right;letter-spacing:-0.08px;-webkit-text-stroke:0.15px #444;">40.00</div>
<div style="left:112.38px;width:120px;top:71.3px;font-size:8.3px;line-height:11.62px;color:#383838;font-weight:normal;white-space:nowrap;text-align:right;letter-spacing:-0.08px;-webkit-text-stroke:0.15px #444;">40.00</div>
<svg style="left:238.3px;top:71.58px" width="10" height="10" viewBox="0 0 10 10"><path d="M1.0,6.5 L6.9,0.9 Q7.5,0.4 8.1,0.9 L8.6,1.4 Q9.1,2.0 8.6,2.6 L2.7,8.3 Q2.1,8.8 1.5,8.3 L1.0,7.8 Q0.5,7.1 1.0,6.5 Z" fill="none" stroke="#c6c6c6" stroke-width="0.8"/></svg>
<svg style="left:298.85px;top:71.58px" width="10" height="10" viewBox="0 0 10 10"><path d="M1.0,6.5 L6.9,0.9 Q7.5,0.4 8.1,0.9 L8.6,1.4 Q9.1,2.0 8.6,2.6 L2.7,8.3 Q2.1,8.8 1.5,8.3 L1.0,7.8 Q0.5,7.1 1.0,6.5 Z" fill="none" stroke="#c6c6c6" stroke-width="0.8"/></svg>
<svg style="left:359.4px;top:71.58px" width="10" height="10" viewBox="0 0 10 10"><path d="M1.0,6.5 L6.9,0.9 Q7.5,0.4 8.1,0.9 L8.6,1.4 Q9.1,2.0 8.6,2.6 L2.7,8.3 Q2.1,8.8 1.5,8.3 L1.0,7.8 Q0.5,7.1 1.0,6.5 Z" fill="none" stroke="#c6c6c6" stroke-width="0.8"/></svg>
<svg style="left:419.95px;top:71.58px" width="10" height="10" viewBox="0 0 10 10"><path d="M1.0,6.5 L6.9,0.9 Q7.5,0.4 8.1,0.9 L8.6,1.4 Q9.1,2.0 8.6,2.6 L2.7,8.3 Q2.1,8.8 1.5,8.3 L1.0,7.8 Q0.5,7.1 1.0,6.5 Z" fill="none" stroke="#c6c6c6" stroke-width="0.8"/></svg>
<div style="left:355.58px;width:120px;top:71.3px;font-size:8.3px;line-height:11.62px;color:#383838;font-weight:normal;white-space:nowrap;text-align:right;letter-spacing:-0.08px;-webkit-text-stroke:0.15px #444;">26.67</div>
<svg style="left:480.5px;top:71.58px" width="10" height="10" viewBox="0 0 10 10"><path d="M1.0,6.5 L6.9,0.9 Q7.5,0.4 8.1,0.9 L8.6,1.4 Q9.1,2.0 8.6,2.6 L2.7,8.3 Q2.1,8.8 1.5,8.3 L1.0,7.8 Q0.5,7.1 1.0,6.5 Z" fill="none" stroke="#c6c6c6" stroke-width="0.8"/></svg>
<div style="left:416.13px;width:120px;top:71.3px;font-size:8.3px;line-height:11.62px;color:#383838;font-weight:normal;white-space:nowrap;text-align:right;letter-spacing:-0.08px;-webkit-text-stroke:0.15px #444;">13.33</div>
<svg style="left:541.05px;top:71.58px" width="10" height="10" viewBox="0 0 10 10"><path d="M1.0,6.5 L6.9,0.9 Q7.5,0.4 8.1,0.9 L8.6,1.4 Q9.1,2.0 8.6,2.6 L2.7,8.3 Q2.1,8.8 1.5,8.3 L1.0,7.8 Q0.5,7.1 1.0,6.5 Z" fill="none" stroke="#c6c6c6" stroke-width="0.8"/></svg>
<svg style="left:601.6px;top:71.58px" width="10" height="10" viewBox="0 0 10 10"><path d="M1.0,6.5 L6.9,0.9 Q7.5,0.4 8.1,0.9 L8.6,1.4 Q9.1,2.0 8.6,2.6 L2.7,8.3 Q2.1,8.8 1.5,8.3 L1.0,7.8 Q0.5,7.1 1.0,6.5 Z" fill="none" stroke="#c6c6c6" stroke-width="0.8"/></svg>
<svg style="left:662.15px;top:71.58px" width="10" height="10" viewBox="0 0 10 10"><path d="M1.0,6.5 L6.9,0.9 Q7.5,0.4 8.1,0.9 L8.6,1.4 Q9.1,2.0 8.6,2.6 L2.7,8.3 Q2.1,8.8 1.5,8.3 L1.0,7.8 Q0.5,7.1 1.0,6.5 Z" fill="none" stroke="#c6c6c6" stroke-width="0.8"/></svg>
<svg style="left:722.7px;top:71.58px" width="10" height="10" viewBox="0 0 10 10"><path d="M1.0,6.5 L6.9,0.9 Q7.5,0.4 8.1,0.9 L8.6,1.4 Q9.1,2.0 8.6,2.6 L2.7,8.3 Q2.1,8.8 1.5,8.3 L1.0,7.8 Q0.5,7.1 1.0,6.5 Z" fill="none" stroke="#c6c6c6" stroke-width="0.8"/></svg>
<svg style="left:783.25px;top:71.58px" width="10" height="10" viewBox="0 0 10 10"><path d="M1.0,6.5 L6.9,0.9 Q7.5,0.4 8.1,0.9 L8.6,1.4 Q9.1,2.0 8.6,2.6 L2.7,8.3 Q2.1,8.8 1.5,8.3 L1.0,7.8 Q0.5,7.1 1.0,6.5 Z" fill="none" stroke="#c6c6c6" stroke-width="0.8"/></svg>
<svg style="left:844.8px;top:71.58px" width="10" height="10" viewBox="0 0 10 10"><path d="M1.0,6.5 L6.9,0.9 Q7.5,0.4 8.1,0.9 L8.6,1.4 Q9.1,2.0 8.6,2.6 L2.7,8.3 Q2.1,8.8 1.5,8.3 L1.0,7.8 Q0.5,7.1 1.0,6.5 Z" fill="none" stroke="#c6c6c6" stroke-width="0.8"/></svg>
<div style="left:0px;top:100.22px;width:903.5px;height:1px;background:#f0f0f0;"></div>
<div style="left:93.3px;top:88.21px;font-size:7.6px;line-height:10.64px;color:#383838;font-weight:normal;white-space:nowrap;-webkit-text-stroke:0.15px #444;">Request</div>
<svg style="left:152.7px;top:87.35px" width="10" height="10" viewBox="0 0 10 10"><path d="M1.0,6.5 L6.9,0.9 Q7.5,0.4 8.1,0.9 L8.6,1.4 Q9.1,2.0 8.6,2.6 L2.7,8.3 Q2.1,8.8 1.5,8.3 L1.0,7.8 Q0.5,7.1 1.0,6.5 Z" fill="none" stroke="#c6c6c6" stroke-width="0.8"/></svg>
<div style="left:70.78px;width:120px;top:87.07px;font-size:8.3px;line-height:11.62px;color:#383838;font-weight:normal;white-space:nowrap;text-align:right;letter-spacing:-0.08px;-webkit-text-stroke:0.15px #444;">65.00</div>
<div style="left:112.38px;width:120px;top:87.07px;font-size:8.3px;line-height:11.62px;color:#383838;font-weight:normal;white-space:nowrap;text-align:right;letter-spacing:-0.08px;-webkit-text-stroke:0.15px #444;">65.00</div>
<svg style="left:238.3px;top:87.35px" width="10" height="10" viewBox="0 0 10 10"><path d="M1.0,6.5 L6.9,0.9 Q7.5,0.4 8.1,0.9 L8.6,1.4 Q9.1,2.0 8.6,2.6 L2.7,8.3 Q2.1,8.8 1.5,8.3 L1.0,7.8 Q0.5,7.1 1.0,6.5 Z" fill="none" stroke="#c6c6c6" stroke-width="0.8"/></svg>
<svg style="left:298.85px;top:87.35px" width="10" height="10" viewBox="0 0 10 10"><path d="M1.0,6.5 L6.9,0.9 Q7.5,0.4 8.1,0.9 L8.6,1.4 Q9.1,2.0 8.6,2.6 L2.7,8.3 Q2.1,8.8 1.5,8.3 L1.0,7.8 Q0.5,7.1 1.0,6.5 Z" fill="none" stroke="#c6c6c6" stroke-width="0.8"/></svg>
<div style="left:234.48px;width:120px;top:87.07px;font-size:8.3px;line-height:11.62px;color:#383838;font-weight:normal;white-space:nowrap;text-align:right;letter-spacing:-0.08px;-webkit-text-stroke:0.15px #444;">15.00</div>
<svg style="left:359.4px;top:87.35px" width="10" height="10" viewBox="0 0 10 10"><path d="M1.0,6.5 L6.9,0.9 Q7.5,0.4 8.1,0.9 L8.6,1.4 Q9.1,2.0 8.6,2.6 L2.7,8.3 Q2.1,8.8 1.5,8.3 L1.0,7.8 Q0.5,7.1 1.0,6.5 Z" fill="none" stroke="#c6c6c6" stroke-width="0.8"/></svg>
<svg style="left:419.95px;top:87.35px" width="10" height="10" viewBox="0 0 10 10"><path d="M1.0,6.5 L6.9,0.9 Q7.5,0.4 8.1,0.9 L8.6,1.4 Q9.1,2.0 8.6,2.6 L2.7,8.3 Q2.1,8.8 1.5,8.3 L1.0,7.8 Q0.5,7.1 1.0,6.5 Z" fill="none" stroke="#c6c6c6" stroke-width="0.8"/></svg>
<div style="left:355.58px;width:120px;top:87.07px;font-size:8.3px;line-height:11.62px;color:#383838;font-weight:normal;white-space:nowrap;text-align:right;letter-spacing:-0.08px;-webkit-text-stroke:0.15px #444;">25.00</div>
<svg style="left:480.5px;top:87.35px" width="10" height="10" viewBox="0 0 10 10"><path d="M1.0,6.5 L6.9,0.9 Q7.5,0.4 8.1,0.9 L8.6,1.4 Q9.1,2.0 8.6,2.6 L2.7,8.3 Q2.1,8.8 1.5,8.3 L1.0,7.8 Q0.5,7.1 1.0,6.5 Z" fill="none" stroke="#c6c6c6" stroke-width="0.8"/></svg>
<div style="left:416.13px;width:120px;top:87.07px;font-size:8.3px;line-height:11.62px;color:#383838;font-weight:normal;white-space:nowrap;text-align:right;letter-spacing:-0.08px;-webkit-text-stroke:0.15px #444;">25.00</div>
<svg style="left:541.05px;top:87.35px" width="10" height="10" viewBox="0 0 10 10"><path d="M1.0,6.5 L6.9,0.9 Q7.5,0.4 8.1,0.9 L8.6,1.4 Q9.1,2.0 8.6,2.6 L2.7,8.3 Q2.1,8.8 1.5,8.3 L1.0,7.8 Q0.5,7.1 1.0,6.5 Z" fill="none" stroke="#c6c6c6" stroke-width="0.8"/></svg>
<svg style="left:601.6px;top:87.35px" width="10" height="10" viewBox="0 0 10 10"><path d="M1.0,6.5 L6.9,0.9 Q7.5,0.4 8.1,0.9 L8.6,1.4 Q9.1,2.0 8.6,2.6 L2.7,8.3 Q2.1,8.8 1.5,8.3 L1.0,7.8 Q0.5,7.1 1.0,6.5 Z" fill="none" stroke="#c6c6c6" stroke-width="0.8"/></svg>
<svg style="left:662.15px;top:87.35px" width="10" height="10" viewBox="0 0 10 10"><path d="M1.0,6.5 L6.9,0.9 Q7.5,0.4 8.1,0.9 L8.6,1.4 Q9.1,2.0 8.6,2.6 L2.7,8.3 Q2.1,8.8 1.5,8.3 L1.0,7.8 Q0.5,7.1 1.0,6.5 Z" fill="none" stroke="#c6c6c6" stroke-width="0.8"/></svg>
<svg style="left:722.7px;top:87.35px" width="10" height="10" viewBox="0 0 10 10"><path d="M1.0,6.5 L6.9,0.9 Q7.5,0.4 8.1,0.9 L8.6,1.4 Q9.1,2.0 8.6,2.6 L2.7,8.3 Q2.1,8.8 1.5,8.3 L1.0,7.8 Q0.5,7.1 1.0,6.5 Z" fill="none" stroke="#c6c6c6" stroke-width="0.8"/></svg>
<svg style="left:783.25px;top:87.35px" width="10" height="10" viewBox="0 0 10 10"><path d="M1.0,6.5 L6.9,0.9 Q7.5,0.4 8.1,0.9 L8.6,1.4 Q9.1,2.0 8.6,2.6 L2.7,8.3 Q2.1,8.8 1.5,8.3 L1.0,7.8 Q0.5,7.1 1.0,6.5 Z" fill="none" stroke="#c6c6c6" stroke-width="0.8"/></svg>
<svg style="left:844.8px;top:87.35px" width="10" height="10" viewBox="0 0 10 10"><path d="M1.0,6.5 L6.9,0.9 Q7.5,0.4 8.1,0.9 L8.6,1.4 Q9.1,2.0 8.6,2.6 L2.7,8.3 Q2.1,8.8 1.5,8.3 L1.0,7.8 Q0.5,7.1 1.0,6.5 Z" fill="none" stroke="#c6c6c6" stroke-width="0.8"/></svg>
<div style="left:0px;top:100.72px;width:903.5px;height:15.77px;background:#f5f5f5;"></div>
<div style="left:0px;top:115.99px;width:903.5px;height:1px;background:#f0f0f0;"></div>
<div style="left:27px;top:103.98px;font-size:7.6px;line-height:10.64px;color:#383838;font-weight:normal;white-space:nowrap;-webkit-text-stroke:0.15px #444;">RC_00006</div>
<div style="left:5.7px;top:111.02px;width:18px;height:0.8px;background:#d0d0d0;"></div>
<div style="left:93.3px;top:103.98px;font-size:7.6px;line-height:10.64px;color:#383838;font-weight:normal;white-space:nowrap;-webkit-text-stroke:0.15px #444;letter-spacing:0.22px;">Commitment</div>
<svg style="left:152.7px;top:103.12px" width="10" height="10" viewBox="0 0 10 10"><path d="M1.0,6.5 L6.9,0.9 Q7.5,0.4 8.1,0.9 L8.6,1.4 Q9.1,2.0 8.6,2.6 L2.7,8.3 Q2.1,8.8 1.5,8.3 L1.0,7.8 Q0.5,7.1 1.0,6.5 Z" fill="none" stroke="#c6c6c6" stroke-width="0.8"/></svg>
<div style="left:70.78px;width:120px;top:102.84px;font-size:8.3px;line-height:11.62px;color:#383838;font-weight:normal;white-space:nowrap;text-align:right;letter-spacing:-0.08px;-webkit-text-stroke:0.15px #444;">40.00</div>
<div style="left:112.38px;width:120px;top:102.84px;font-size:8.3px;line-height:11.62px;color:#383838;font-weight:normal;white-space:nowrap;text-align:right;letter-spacing:-0.08px;-webkit-text-stroke:0.15px #444;">40.00</div>
<svg style="left:238.3px;top:103.12px" width="10" height="10" viewBox="0 0 10 10"><path d="M1.0,6.5 L6.9,0.9 Q7.5,0.4 8.1,0.9 L8.6,1.4 Q9.1,2.0 8.6,2.6 L2.7,8.3 Q2.1,8.8 1.5,8.3 L1.0,7.8 Q0.5,7.1 1.0,6.5 Z" fill="none" stroke="#c6c6c6" stroke-width="0.8"/></svg>
<svg style="left:298.85px;top:103.12px" width="10" height="10" viewBox="0 0 10 10"><path d="M1.0,6.5 L6.9,0.9 Q7.5,0.4 8.1,0.9 L8.6,1.4 Q9.1,2.0 8.6,2.6 L2.7,8.3 Q2.1,8.8 1.5,8.3 L1.0,7.8 Q0.5,7.1 1.0,6.5 Z" fill="none" stroke="#c6c6c6" stroke-width="0.8"/></svg>
<svg style="left:359.4px;top:103.12px" width="10" height="10" viewBox="0 0 10 10"><path d="M1.0,6.5 L6.9,0.9 Q7.5,0.4 8.1,0.9 L8.6,1.4 Q9.1,2.0 8.6,2.6 L2.7,8.3 Q2.1,8.8 1.5,8.3 L1.0,7.8 Q0.5,7.1 1.0,6.5 Z" fill="none" stroke="#c6c6c6" stroke-width="0.8"/></svg>
<svg style="left:419.95px;top:103.12px" width="10" height="10" viewBox="0 0 10 10"><path d="M1.0,6.5 L6.9,0.9 Q7.5,0.4 8.1,0.9 L8.6,1.4 Q9.1,2.0 8.6,2.6 L2.7,8.3 Q2.1,8.8 1.5,8.3 L1.0,7.8 Q0.5,7.1 1.0,6.5 Z" fill="none" stroke="#c6c6c6" stroke-width="0.8"/></svg>
<div style="left:355.58px;width:120px;top:102.84px;font-size:8.3px;line-height:11.62px;color:#383838;font-weight:normal;white-space:nowrap;text-align:right;letter-spacing:-0.08px;-webkit-text-stroke:0.15px #444;">26.67</div>
<svg style="left:480.5px;top:103.12px" width="10" height="10" viewBox="0 0 10 10"><path d="M1.0,6.5 L6.9,0.9 Q7.5,0.4 8.1,0.9 L8.6,1.4 Q9.1,2.0 8.6,2.6 L2.7,8.3 Q2.1,8.8 1.5,8.3 L1.0,7.8 Q0.5,7.1 1.0,6.5 Z" fill="none" stroke="#c6c6c6" stroke-width="0.8"/></svg>
<div style="left:416.13px;width:120px;top:102.84px;font-size:8.3px;line-height:11.62px;color:#383838;font-weight:normal;white-space:nowrap;text-align:right;letter-spacing:-0.08px;-webkit-text-stroke:0.15px #444;">13.33</div>
<svg style="left:541.05px;top:103.12px" width="10" height="10" viewBox="0 0 10 10"><path d="M1.0,6.5 L6.9,0.9 Q7.5,0.4 8.1,0.9 L8.6,1.4 Q9.1,2.0 8.6,2.6 L2.7,8.3 Q2.1,8.8 1.5,8.3 L1.0,7.8 Q0.5,7.1 1.0,6.5 Z" fill="none" stroke="#c6c6c6" stroke-width="0.8"/></svg>
<svg style="left:601.6px;top:103.12px" width="10" height="10" viewBox="0 0 10 10"><path d="M1.0,6.5 L6.9,0.9 Q7.5,0.4 8.1,0.9 L8.6,1.4 Q9.1,2.0 8.6,2.6 L2.7,8.3 Q2.1,8.8 1.5,8.3 L1.0,7.8 Q0.5,7.1 1.0,6.5 Z" fill="none" stroke="#c6c6c6" stroke-width="0.8"/></svg>
<svg style="left:662.15px;top:103.12px" width="10" height="10" viewBox="0 0 10 10"><path d="M1.0,6.5 L6.9,0.9 Q7.5,0.4 8.1,0.9 L8.6,1.4 Q9.1,2.0 8.6,2.6 L2.7,8.3 Q2.1,8.8 1.5,8.3 L1.0,7.8 Q0.5,7.1 1.0,6.5 Z" fill="none" stroke="#c6c6c6" stroke-width="0.8"/></svg>
<svg style="left:722.7px;top:103.12px" width="10" height="10" viewBox="0 0 10 10"><path d="M1.0,6.5 L6.9,0.9 Q7.5,0.4 8.1,0.9 L8.6,1.4 Q9.1,2.0 8.6,2.6 L2.7,8.3 Q2.1,8.8 1.5,8.3 L1.0,7.8 Q0.5,7.1 1.0,6.5 Z" fill="none" stroke="#c6c6c6" stroke-width="0.8"/></svg>
<svg style="left:783.25px;top:103.12px" width="10" height="10" viewBox="0 0 10 10"><path d="M1.0,6.5 L6.9,0.9 Q7.5,0.4 8.1,0.9 L8.6,1.4 Q9.1,2.0 8.6,2.6 L2.7,8.3 Q2.1,8.8 1.5,8.3 L1.0,7.8 Q0.5,7.1 1.0,6.5 Z" fill="none" stroke="#c6c6c6" stroke-width="0.8"/></svg>
<svg style="left:844.8px;top:103.12px" width="10" height="10" viewBox="0 0 10 10"><path d="M1.0,6.5 L6.9,0.9 Q7.5,0.4 8.1,0.9 L8.6,1.4 Q9.1,2.0 8.6,2.6 L2.7,8.3 Q2.1,8.8 1.5,8.3 L1.0,7.8 Q0.5,7.1 1.0,6.5 Z" fill="none" stroke="#c6c6c6" stroke-width="0.8"/></svg>
<div style="left:0px;top:116.49px;width:903.5px;height:15.77px;background:#f5f5f5;"></div>
<div style="left:0px;top:131.76px;width:903.5px;height:1px;background:#f0f0f0;"></div>
<div style="left:27px;top:119.75px;font-size:7.6px;line-height:10.64px;color:#383838;font-weight:normal;white-space:nowrap;-webkit-text-stroke:0.15px #444;">RR_00010</div>
<div style="left:5.7px;top:126.79px;width:18px;height:0.8px;background:#d0d0d0;"></div>
<div style="left:93.3px;top:119.75px;font-size:7.6px;line-height:10.64px;color:#383838;font-weight:normal;white-space:nowrap;-webkit-text-stroke:0.15px #444;">Request</div>
<svg style="left:152.7px;top:118.89px" width="10" height="10" viewBox="0 0 10 10"><path d="M1.0,6.5 L6.9,0.9 Q7.5,0.4 8.1,0.9 L8.6,1.4 Q9.1,2.0 8.6,2.6 L2.7,8.3 Q2.1,8.8 1.5,8.3 L1.0,7.8 Q0.5,7.1 1.0,6.5 Z" fill="none" stroke="#c6c6c6" stroke-width="0.8"/></svg>
<div style="left:70.78px;width:120px;top:118.61px;font-size:8.3px;line-height:11.62px;color:#383838;font-weight:normal;white-space:nowrap;text-align:right;letter-spacing:-0.08px;-webkit-text-stroke:0.15px #444;">15.00</div>
<div style="left:112.38px;width:120px;top:118.61px;font-size:8.3px;line-height:11.62px;color:#383838;font-weight:normal;white-space:nowrap;text-align:right;letter-spacing:-0.08px;-webkit-text-stroke:0.15px #444;">15.00</div>
<svg style="left:238.3px;top:118.89px" width="10" height="10" viewBox="0 0 10 10"><path d="M1.0,6.5 L6.9,0.9 Q7.5,0.4 8.1,0.9 L8.6,1.4 Q9.1,2.0 8.6,2.6 L2.7,8.3 Q2.1,8.8 1.5,8.3 L1.0,7.8 Q0.5,7.1 1.0,6.5 Z" fill="none" stroke="#c6c6c6" stroke-width="0.8"/></svg>
<svg style="left:298.85px;top:118.89px" width="10" height="10" viewBox="0 0 10 10"><path d="M1.0,6.5 L6.9,0.9 Q7.5,0.4 8.1,0.9 L8.6,1.4 Q9.1,2.0 8.6,2.6 L2.7,8.3 Q2.1,8.8 1.5,8.3 L1.0,7.8 Q0.5,7.1 1.0,6.5 Z" fill="none" stroke="#c6c6c6" stroke-width="0.8"/></svg>
<div style="left:234.48px;width:120px;top:118.61px;font-size:8.3px;line-height:11.62px;color:#383838;font-weight:normal;white-space:nowrap;text-align:right;letter-spacing:-0.08px;-webkit-text-stroke:0.15px #444;">15.00</div>
<svg style="left:359.4px;top:118.89px" width="10" height="10" viewBox="0 0 10 10"><path d="M1.0,6.5 L6.9,0.9 Q7.5,0.4 8.1,0.9 L8.6,1.4 Q9.1,2.0 8.6,2.6 L2.7,8.3 Q2.1,8.8 1.5,8.3 L1.0,7.8 Q0.5,7.1 1.0,6.5 Z" fill="none" stroke="#c6c6c6" stroke-width="0.8"/></svg>
<svg style="left:419.95px;top:118.89px" width="10" height="10" viewBox="0 0 10 10"><path d="M1.0,6.5 L6.9,0.9 Q7.5,0.4 8.1,0.9 L8.6,1.4 Q9.1,2.0 8.6,2.6 L2.7,8.3 Q2.1,8.8 1.5,8.3 L1.0,7.8 Q0.5,7.1 1.0,6.5 Z" fill="none" stroke="#c6c6c6" stroke-width="0.8"/></svg>
<svg style="left:480.5px;top:118.89px" width="10" height="10" viewBox="0 0 10 10"><path d="M1.0,6.5 L6.9,0.9 Q7.5,0.4 8.1,0.9 L8.6,1.4 Q9.1,2.0 8.6,2.6 L2.7,8.3 Q2.1,8.8 1.5,8.3 L1.0,7.8 Q0.5,7.1 1.0,6.5 Z" fill="none" stroke="#c6c6c6" stroke-width="0.8"/></svg>
<svg style="left:541.05px;top:118.89px" width="10" height="10" viewBox="0 0 10 10"><path d="M1.0,6.5 L6.9,0.9 Q7.5,0.4 8.1,0.9 L8.6,1.4 Q9.1,2.0 8.6,2.6 L2.7,8.3 Q2.1,8.8 1.5,8.3 L1.0,7.8 Q0.5,7.1 1.0,6.5 Z" fill="none" stroke="#c6c6c6" stroke-width="0.8"/></svg>
<svg style="left:601.6px;top:118.89px" width="10" height="10" viewBox="0 0 10 10"><path d="M1.0,6.5 L6.9,0.9 Q7.5,0.4 8.1,0.9 L8.6,1.4 Q9.1,2.0 8.6,2.6 L2.7,8.3 Q2.1,8.8 1.5,8.3 L1.0,7.8 Q0.5,7.1 1.0,6.5 Z" fill="none" stroke="#c6c6c6" stroke-width="0.8"/></svg>
<svg style="left:662.15px;top:118.89px" width="10" height="10" viewBox="0 0 10 10"><path d="M1.0,6.5 L6.9,0.9 Q7.5,0.4 8.1,0.9 L8.6,1.4 Q9.1,2.0 8.6,2.6 L2.7,8.3 Q2.1,8.8 1.5,8.3 L1.0,7.8 Q0.5,7.1 1.0,6.5 Z" fill="none" stroke="#c6c6c6" stroke-width="0.8"/></svg>
<svg style="left:722.7px;top:118.89px" width="10" height="10" viewBox="0 0 10 10"><path d="M1.0,6.5 L6.9,0.9 Q7.5,0.4 8.1,0.9 L8.6,1.4 Q9.1,2.0 8.6,2.6 L2.7,8.3 Q2.1,8.8 1.5,8.3 L1.0,7.8 Q0.5,7.1 1.0,6.5 Z" fill="none" stroke="#c6c6c6" stroke-width="0.8"/></svg>
<svg style="left:783.25px;top:118.89px" width="10" height="10" viewBox="0 0 10 10"><path d="M1.0,6.5 L6.9,0.9 Q7.5,0.4 8.1,0.9 L8.6,1.4 Q9.1,2.0 8.6,2.6 L2.7,8.3 Q2.1,8.8 1.5,8.3 L1.0,7.8 Q0.5,7.1 1.0,6.5 Z" fill="none" stroke="#c6c6c6" stroke-width="0.8"/></svg>
<svg style="left:844.8px;top:118.89px" width="10" height="10" viewBox="0 0 10 10"><path d="M1.0,6.5 L6.9,0.9 Q7.5,0.4 8.1,0.9 L8.6,1.4 Q9.1,2.0 8.6,2.6 L2.7,8.3 Q2.1,8.8 1.5,8.3 L1.0,7.8 Q0.5,7.1 1.0,6.5 Z" fill="none" stroke="#c6c6c6" stroke-width="0.8"/></svg>
<div style="left:0px;top:132.26px;width:903.5px;height:15.77px;background:#f5f5f5;"></div>
<div style="left:0px;top:147.53px;width:903.5px;height:1px;background:#f0f0f0;"></div>
<div style="left:27px;top:135.52px;font-size:7.6px;line-height:10.64px;color:#383838;font-weight:normal;white-space:nowrap;-webkit-text-stroke:0.15px #444;">RR_00020</div>
<div style="left:5.7px;top:142.56px;width:18px;height:0.8px;background:#d0d0d0;"></div>
<div style="left:93.3px;top:135.52px;font-size:7.6px;line-height:10.64px;color:#383838;font-weight:normal;white-space:nowrap;-webkit-text-stroke:0.15px #444;">Request</div>
<svg style="left:152.7px;top:134.66px" width="10" height="10" viewBox="0 0 10 10"><path d="M1.0,6.5 L6.9,0.9 Q7.5,0.4 8.1,0.9 L8.6,1.4 Q9.1,2.0 8.6,2.6 L2.7,8.3 Q2.1,8.8 1.5,8.3 L1.0,7.8 Q0.5,7.1 1.0,6.5 Z" fill="none" stroke="#c6c6c6" stroke-width="0.8"/></svg>
<div style="left:70.78px;width:120px;top:134.38px;font-size:8.3px;line-height:11.62px;color:#383838;font-weight:normal;white-space:nowrap;text-align:right;letter-spacing:-0.08px;-webkit-text-stroke:0.15px #444;">50.00</div>
<div style="left:112.38px;width:120px;top:134.38px;font-size:8.3px;line-height:11.62px;color:#383838;font-weight:normal;white-space:nowrap;text-align:right;letter-spacing:-0.08px;-webkit-text-stroke:0.15px #444;">50.00</div>
<svg style="left:238.3px;top:134.66px" width="10" height="10" viewBox="0 0 10 10"><path d="M1.0,6.5 L6.9,0.9 Q7.5,0.4 8.1,0.9 L8.6,1.4 Q9.1,2.0 8.6,2.6 L2.7,8.3 Q2.1,8.8 1.5,8.3 L1.0,7.8 Q0.5,7.1 1.0,6.5 Z" fill="none" stroke="#c6c6c6" stroke-width="0.8"/></svg>
<svg style="left:298.85px;top:134.66px" width="10" height="10" viewBox="0 0 10 10"><path d="M1.0,6.5 L6.9,0.9 Q7.5,0.4 8.1,0.9 L8.6,1.4 Q9.1,2.0 8.6,2.6 L2.7,8.3 Q2.1,8.8 1.5,8.3 L1.0,7.8 Q0.5,7.1 1.0,6.5 Z" fill="none" stroke="#c6c6c6" stroke-width="0.8"/></svg>
<svg style="left:359.4px;top:134.66px" width="10" height="10" viewBox="0 0 10 10"><path d="M1.0,6.5 L6.9,0.9 Q7.5,0.4 8.1,0.9 L8.6,1.4 Q9.1,2.0 8.6,2.6 L2.7,8.3 Q2.1,8.8 1.5,8.3 L1.0,7.8 Q0.5,7.1 1.0,6.5 Z" fill="none" stroke="#c6c6c6" stroke-width="0.8"/></svg>
<svg style="left:419.95px;top:134.66px" width="10" height="10" viewBox="0 0 10 10"><path d="M1.0,6.5 L6.9,0.9 Q7.5,0.4 8.1,0.9 L8.6,1.4 Q9.1,2.0 8.6,2.6 L2.7,8.3 Q2.1,8.8 1.5,8.3 L1.0,7.8 Q0.5,7.1 1.0,6.5 Z" fill="none" stroke="#c6c6c6" stroke-width="0.8"/></svg>
<div style="left:355.58px;width:120px;top:134.38px;font-size:8.3px;line-height:11.62px;color:#383838;font-weight:normal;white-space:nowrap;text-align:right;letter-spacing:-0.08px;-webkit-text-stroke:0.15px #444;">25.00</div>
<svg style="left:480.5px;top:134.66px" width="10" height="10" viewBox="0 0 10 10"><path d="M1.0,6.5 L6.9,0.9 Q7.5,0.4 8.1,0.9 L8.6,1.4 Q9.1,2.0 8.6,2.6 L2.7,8.3 Q2.1,8.8 1.5,8.3 L1.0,7.8 Q0.5,7.1 1.0,6.5 Z" fill="none" stroke="#c6c6c6" stroke-width="0.8"/></svg>
<div style="left:416.13px;width:120px;top:134.38px;font-size:8.3px;line-height:11.62px;color:#383838;font-weight:normal;white-space:nowrap;text-align:right;letter-spacing:-0.08px;-webkit-text-stroke:0.15px #444;">25.00</div>
<svg style="left:541.05px;top:134.66px" width="10" height="10" viewBox="0 0 10 10"><path d="M1.0,6.5 L6.9,0.9 Q7.5,0.4 8.1,0.9 L8.6,1.4 Q9.1,2.0 8.6,2.6 L2.7,8.3 Q2.1,8.8 1.5,8.3 L1.0,7.8 Q0.5,7.1 1.0,6.5 Z" fill="none" stroke="#c6c6c6" stroke-width="0.8"/></svg>
<svg style="left:601.6px;top:134.66px" width="10" height="10" viewBox="0 0 10 10"><path d="M1.0,6.5 L6.9,0.9 Q7.5,0.4 8.1,0.9 L8.6,1.4 Q9.1,2.0 8.6,2.6 L2.7,8.3 Q2.1,8.8 1.5,8.3 L1.0,7.8 Q0.5,7.1 1.0,6.5 Z" fill="none" stroke="#c6c6c6" stroke-width="0.8"/></svg>
<svg style="left:662.15px;top:134.66px" width="10" height="10" viewBox="0 0 10 10"><path d="M1.0,6.5 L6.9,0.9 Q7.5,0.4 8.1,0.9 L8.6,1.4 Q9.1,2.0 8.6,2.6 L2.7,8.3 Q2.1,8.8 1.5,8.3 L1.0,7.8 Q0.5,7.1 1.0,6.5 Z" fill="none" stroke="#c6c6c6" stroke-width="0.8"/></svg>
<svg style="left:722.7px;top:134.66px" width="10" height="10" viewBox="0 0 10 10"><path d="M1.0,6.5 L6.9,0.9 Q7.5,0.4 8.1,0.9 L8.6,1.4 Q9.1,2.0 8.6,2.6 L2.7,8.3 Q2.1,8.8 1.5,8.3 L1.0,7.8 Q0.5,7.1 1.0,6.5 Z" fill="none" stroke="#c6c6c6" stroke-width="0.8"/></svg>
<svg style="left:783.25px;top:134.66px" width="10" height="10" viewBox="0 0 10 10"><path d="M1.0,6.5 L6.9,0.9 Q7.5,0.4 8.1,0.9 L8.6,1.4 Q9.1,2.0 8.6,2.6 L2.7,8.3 Q2.1,8.8 1.5,8.3 L1.0,7.8 Q0.5,7.1 1.0,6.5 Z" fill="none" stroke="#c6c6c6" stroke-width="0.8"/></svg>
<svg style="left:844.8px;top:134.66px" width="10" height="10" viewBox="0 0 10 10"><path d="M1.0,6.5 L6.9,0.9 Q7.5,0.4 8.1,0.9 L8.6,1.4 Q9.1,2.0 8.6,2.6 L2.7,8.3 Q2.1,8.8 1.5,8.3 L1.0,7.8 Q0.5,7.1 1.0,6.5 Z" fill="none" stroke="#c6c6c6" stroke-width="0.8"/></svg>
<div style="left:0px;top:163.3px;width:903.5px;height:1px;background:#f0f0f0;"></div>
<svg style="left:6.3px;top:151.83px" width="10" height="9" viewBox="0 0 10 9"><g stroke="#222" fill="none"><path d="M3.3,1.4 H8.2 M3.3,3.6 H8.2 M3.3,6.1 H8.2" stroke-width="0.85"/><path d="M0.2,1.5 L0.9,2.2 L2.4,0.5 M0.2,3.8 L0.9,4.5 L2.4,2.8" stroke-width="0.95"/></g><circle cx="0.9" cy="6.2" r="0.75" fill="#222"/></svg>
<div style="left:17.6px;top:151.29px;font-size:7.6px;line-height:10.64px;color:#1f1f1f;font-weight:bold;white-space:nowrap;letter-spacing:-0.17px;">Erstellung eine...</div>
<div style="left:81.3px;top:155.7px;width:6.3px;height:1.1px;background:#262626;"></div>
<div style="left:93.3px;top:151.29px;font-size:7.6px;line-height:10.64px;color:#1f1f1f;font-weight:bold;white-space:nowrap;">Commitment</div>
<svg style="left:152.7px;top:150.43px" width="10" height="10" viewBox="0 0 10 10"><path d="M1.0,6.5 L6.9,0.9 Q7.5,0.4 8.1,0.9 L8.6,1.4 Q9.1,2.0 8.6,2.6 L2.7,8.3 Q2.1,8.8 1.5,8.3 L1.0,7.8 Q0.5,7.1 1.0,6.5 Z" fill="none" stroke="#c6c6c6" stroke-width="0.8"/></svg>
<div style="left:70.78px;width:120px;top:150.15px;font-size:8.3px;line-height:11.62px;color:#1f1f1f;font-weight:bold;white-space:nowrap;text-align:right;letter-spacing:-0.08px;">10.00</div>
<div style="left:112.38px;width:120px;top:150.15px;font-size:8.3px;line-height:11.62px;color:#1f1f1f;font-weight:bold;white-space:nowrap;text-align:right;letter-spacing:-0.08px;">10.00</div>
<svg style="left:238.3px;top:150.43px" width="10" height="10" viewBox="0 0 10 10"><path d="M1.0,6.5 L6.9,0.9 Q7.5,0.4 8.1,0.9 L8.6,1.4 Q9.1,2.0 8.6,2.6 L2.7,8.3 Q2.1,8.8 1.5,8.3 L1.0,7.8 Q0.5,7.1 1.0,6.5 Z" fill="none" stroke="#c6c6c6" stroke-width="0.8"/></svg>
<svg style="left:298.85px;top:150.43px" width="10" height="10" viewBox="0 0 10 10"><path d="M1.0,6.5 L6.9,0.9 Q7.5,0.4 8.1,0.9 L8.6,1.4 Q9.1,2.0 8.6,2.6 L2.7,8.3 Q2.1,8.8 1.5,8.3 L1.0,7.8 Q0.5,7.1 1.0,6.5 Z" fill="none" stroke="#c6c6c6" stroke-width="0.8"/></svg>
<svg style="left:359.4px;top:150.43px" width="10" height="10" viewBox="0 0 10 10"><path d="M1.0,6.5 L6.9,0.9 Q7.5,0.4 8.1,0.9 L8.6,1.4 Q9.1,2.0 8.6,2.6 L2.7,8.3 Q2.1,8.8 1.5,8.3 L1.0,7.8 Q0.5,7.1 1.0,6.5 Z" fill="none" stroke="#c6c6c6" stroke-width="0.8"/></svg>
<svg style="left:419.95px;top:150.43px" width="10" height="10" viewBox="0 0 10 10"><path d="M1.0,6.5 L6.9,0.9 Q7.5,0.4 8.1,0.9 L8.6,1.4 Q9.1,2.0 8.6,2.6 L2.7,8.3 Q2.1,8.8 1.5,8.3 L1.0,7.8 Q0.5,7.1 1.0,6.5 Z" fill="none" stroke="#c6c6c6" stroke-width="0.8"/></svg>
<svg style="left:480.5px;top:150.43px" width="10" height="10" viewBox="0 0 10 10"><path d="M1.0,6.5 L6.9,0.9 Q7.5,0.4 8.1,0.9 L8.6,1.4 Q9.1,2.0 8.6,2.6 L2.7,8.3 Q2.1,8.8 1.5,8.3 L1.0,7.8 Q0.5,7.1 1.0,6.5 Z" fill="none" stroke="#c6c6c6" stroke-width="0.8"/></svg>
<div style="left:416.13px;width:120px;top:150.15px;font-size:8.3px;line-height:11.62px;color:#1f1f1f;font-weight:bold;white-space:nowrap;text-align:right;letter-spacing:-0.08px;">6.00</div>
<svg style="left:541.05px;top:150.43px" width="10" height="10" viewBox="0 0 10 10"><path d="M1.0,6.5 L6.9,0.9 Q7.5,0.4 8.1,0.9 L8.6,1.4 Q9.1,2.0 8.6,2.6 L2.7,8.3 Q2.1,8.8 1.5,8.3 L1.0,7.8 Q0.5,7.1 1.0,6.5 Z" fill="none" stroke="#c6c6c6" stroke-width="0.8"/></svg>
<div style="left:476.68px;width:120px;top:150.15px;font-size:8.3px;line-height:11.62px;color:#1f1f1f;font-weight:bold;white-space:nowrap;text-align:right;letter-spacing:-0.08px;">4.00</div>
<svg style="left:601.6px;top:150.43px" width="10" height="10" viewBox="0 0 10 10"><path d="M1.0,6.5 L6.9,0.9 Q7.5,0.4 8.1,0.9 L8.6,1.4 Q9.1,2.0 8.6,2.6 L2.7,8.3 Q2.1,8.8 1.5,8.3 L1.0,7.8 Q0.5,7.1 1.0,6.5 Z" fill="none" stroke="#c6c6c6" stroke-width="0.8"/></svg>
<svg style="left:662.15px;top:150.43px" width="10" height="10" viewBox="0 0 10 10"><path d="M1.0,6.5 L6.9,0.9 Q7.5,0.4 8.1,0.9 L8.6,1.4 Q9.1,2.0 8.6,2.6 L2.7,8.3 Q2.1,8.8 1.5,8.3 L1.0,7.8 Q0.5,7.1 1.0,6.5 Z" fill="none" stroke="#c6c6c6" stroke-width="0.8"/></svg>
<svg style="left:722.7px;top:150.43px" width="10" height="10" viewBox="0 0 10 10"><path d="M1.0,6.5 L6.9,0.9 Q7.5,0.4 8.1,0.9 L8.6,1.4 Q9.1,2.0 8.6,2.6 L2.7,8.3 Q2.1,8.8 1.5,8.3 L1.0,7.8 Q0.5,7.1 1.0,6.5 Z" fill="none" stroke="#c6c6c6" stroke-width="0.8"/></svg>
<svg style="left:783.25px;top:150.43px" width="10" height="10" viewBox="0 0 10 10"><path d="M1.0,6.5 L6.9,0.9 Q7.5,0.4 8.1,0.9 L8.6,1.4 Q9.1,2.0 8.6,2.6 L2.7,8.3 Q2.1,8.8 1.5,8.3 L1.0,7.8 Q0.5,7.1 1.0,6.5 Z" fill="none" stroke="#c6c6c6" stroke-width="0.8"/></svg>
<svg style="left:844.8px;top:150.43px" width="10" height="10" viewBox="0 0 10 10"><path d="M1.0,6.5 L6.9,0.9 Q7.5,0.4 8.1,0.9 L8.6,1.4 Q9.1,2.0 8.6,2.6 L2.7,8.3 Q2.1,8.8 1.5,8.3 L1.0,7.8 Q0.5,7.1 1.0,6.5 Z" fill="none" stroke="#c6c6c6" stroke-width="0.8"/></svg>
<div style="left:0px;top:179.07px;width:903.5px;height:1px;background:#f0f0f0;"></div>
<div style="left:93.3px;top:167.06px;font-size:7.6px;line-height:10.64px;color:#1f1f1f;font-weight:bold;white-space:nowrap;">Request</div>
<svg style="left:152.7px;top:166.2px" width="10" height="10" viewBox="0 0 10 10"><path d="M1.0,6.5 L6.9,0.9 Q7.5,0.4 8.1,0.9 L8.6,1.4 Q9.1,2.0 8.6,2.6 L2.7,8.3 Q2.1,8.8 1.5,8.3 L1.0,7.8 Q0.5,7.1 1.0,6.5 Z" fill="none" stroke="#c6c6c6" stroke-width="0.8"/></svg>
<div style="left:70.78px;width:120px;top:165.92px;font-size:8.3px;line-height:11.62px;color:#1f1f1f;font-weight:bold;white-space:nowrap;text-align:right;letter-spacing:-0.08px;">10.00</div>
<div style="left:112.38px;width:120px;top:165.92px;font-size:8.3px;line-height:11.62px;color:#1f1f1f;font-weight:bold;white-space:nowrap;text-align:right;letter-spacing:-0.08px;">10.00</div>
<svg style="left:238.3px;top:166.2px" width="10" height="10" viewBox="0 0 10 10"><path d="M1.0,6.5 L6.9,0.9 Q7.5,0.4 8.1,0.9 L8.6,1.4 Q9.1,2.0 8.6,2.6 L2.7,8.3 Q2.1,8.8 1.5,8.3 L1.0,7.8 Q0.5,7.1 1.0,6.5 Z" fill="none" stroke="#c6c6c6" stroke-width="0.8"/></svg>
<svg style="left:298.85px;top:166.2px" width="10" height="10" viewBox="0 0 10 10"><path d="M1.0,6.5 L6.9,0.9 Q7.5,0.4 8.1,0.9 L8.6,1.4 Q9.1,2.0 8.6,2.6 L2.7,8.3 Q2.1,8.8 1.5,8.3 L1.0,7.8 Q0.5,7.1 1.0,6.5 Z" fill="none" stroke="#c6c6c6" stroke-width="0.8"/></svg>
<svg style="left:359.4px;top:166.2px" width="10" height="10" viewBox="0 0 10 10"><path d="M1.0,6.5 L6.9,0.9 Q7.5,0.4 8.1,0.9 L8.6,1.4 Q9.1,2.0 8.6,2.6 L2.7,8.3 Q2.1,8.8 1.5,8.3 L1.0,7.8 Q0.5,7.1 1.0,6.5 Z" fill="none" stroke="#c6c6c6" stroke-width="0.8"/></svg>
<svg style="left:419.95px;top:166.2px" width="10" height="10" viewBox="0 0 10 10"><path d="M1.0,6.5 L6.9,0.9 Q7.5,0.4 8.1,0.9 L8.6,1.4 Q9.1,2.0 8.6,2.6 L2.7,8.3 Q2.1,8.8 1.5,8.3 L1.0,7.8 Q0.5,7.1 1.0,6.5 Z" fill="none" stroke="#c6c6c6" stroke-width="0.8"/></svg>
<svg style="left:480.5px;top:166.2px" width="10" height="10" viewBox="0 0 10 10"><path d="M1.0,6.5 L6.9,0.9 Q7.5,0.4 8.1,0.9 L8.6,1.4 Q9.1,2.0 8.6,2.6 L2.7,8.3 Q2.1,8.8 1.5,8.3 L1.0,7.8 Q0.5,7.1 1.0,6.5 Z" fill="none" stroke="#c6c6c6" stroke-width="0.8"/></svg>
<div style="left:416.13px;width:120px;top:165.92px;font-size:8.3px;line-height:11.62px;color:#1f1f1f;font-weight:bold;white-space:nowrap;text-align:right;letter-spacing:-0.08px;">6.00</div>
<svg style="left:541.05px;top:166.2px" width="10" height="10" viewBox="0 0 10 10"><path d="M1.0,6.5 L6.9,0.9 Q7.5,0.4 8.1,0.9 L8.6,1.4 Q9.1,2.0 8.6,2.6 L2.7,8.3 Q2.1,8.8 1.5,8.3 L1.0,7.8 Q0.5,7.1 1.0,6.5 Z" fill="none" stroke="#c6c6c6" stroke-width="0.8"/></svg>
<div style="left:476.68px;width:120px;top:165.92px;font-size:8.3px;line-height:11.62px;color:#1f1f1f;font-weight:bold;white-space:nowrap;text-align:right;letter-spacing:-0.08px;">4.00</div>
<svg style="left:601.6px;top:166.2px" width="10" height="10" viewBox="0 0 10 10"><path d="M1.0,6.5 L6.9,0.9 Q7.5,0.4 8.1,0.9 L8.6,1.4 Q9.1,2.0 8.6,2.6 L2.7,8.3 Q2.1,8.8 1.5,8.3 L1.0,7.8 Q0.5,7.1 1.0,6.5 Z" fill="none" stroke="#c6c6c6" stroke-width="0.8"/></svg>
<svg style="left:662.15px;top:166.2px" width="10" height="10" viewBox="0 0 10 10"><path d="M1.0,6.5 L6.9,0.9 Q7.5,0.4 8.1,0.9 L8.6,1.4 Q9.1,2.0 8.6,2.6 L2.7,8.3 Q2.1,8.8 1.5,8.3 L1.0,7.8 Q0.5,7.1 1.0,6.5 Z" fill="none" stroke="#c6c6c6" stroke-width="0.8"/></svg>
<svg style="left:722.7px;top:166.2px" width="10" height="10" viewBox="0 0 10 10"><path d="M1.0,6.5 L6.9,0.9 Q7.5,0.4 8.1,0.9 L8.6,1.4 Q9.1,2.0 8.6,2.6 L2.7,8.3 Q2.1,8.8 1.5,8.3 L1.0,7.8 Q0.5,7.1 1.0,6.5 Z" fill="none" stroke="#c6c6c6" stroke-width="0.8"/></svg>
<svg style="left:783.25px;top:166.2px" width="10" height="10" viewBox="0 0 10 10"><path d="M1.0,6.5 L6.9,0.9 Q7.5,0.4 8.1,0.9 L8.6,1.4 Q9.1,2.0 8.6,2.6 L2.7,8.3 Q2.1,8.8 1.5,8.3 L1.0,7.8 Q0.5,7.1 1.0,6.5 Z" fill="none" stroke="#c6c6c6" stroke-width="0.8"/></svg>
<svg style="left:844.8px;top:166.2px" width="10" height="10" viewBox="0 0 10 10"><path d="M1.0,6.5 L6.9,0.9 Q7.5,0.4 8.1,0.9 L8.6,1.4 Q9.1,2.0 8.6,2.6 L2.7,8.3 Q2.1,8.8 1.5,8.3 L1.0,7.8 Q0.5,7.1 1.0,6.5 Z" fill="none" stroke="#c6c6c6" stroke-width="0.8"/></svg>
<div style="left:0px;top:194.84px;width:903.5px;height:1px;background:#f0f0f0;"></div>
<svg style="left:15.9px;top:183.27px" width="9" height="9" viewBox="0 0 9 9"><rect x="0.45" y="0.45" width="6.7" height="6.6" rx="1" fill="none" stroke="#5a5560" stroke-width="0.8"/><rect x="0.8" y="0.8" width="6.0" height="2.0" fill="#77737c"/><path d="M1.5,3.2 L4.2,3.2" stroke="#999" stroke-width="0.6"/><circle cx="4.9" cy="5.0" r="0.85" fill="#111"/></svg>
<div style="left:26.7px;top:182.83px;font-size:7.6px;line-height:10.64px;color:#383838;font-weight:normal;white-space:nowrap;-webkit-text-stroke:0.15px #444;">Schedule SP...</div>
<div style="left:5.7px;top:190.47px;width:6.1px;height:0.8px;background:#d4d4d4;"></div>
<div style="left:81.3px;top:187.7px;width:6.3px;height:1.1px;background:#262626;"></div>
<div style="left:93.3px;top:182.83px;font-size:7.6px;line-height:10.64px;color:#383838;font-weight:normal;white-space:nowrap;-webkit-text-stroke:0.15px #444;letter-spacing:0.22px;">Commitment</div>
<svg style="left:152.7px;top:181.97px" width="10" height="10" viewBox="0 0 10 10"><path d="M1.0,6.5 L6.9,0.9 Q7.5,0.4 8.1,0.9 L8.6,1.4 Q9.1,2.0 8.6,2.6 L2.7,8.3 Q2.1,8.8 1.5,8.3 L1.0,7.8 Q0.5,7.1 1.0,6.5 Z" fill="none" stroke="#c6c6c6" stroke-width="0.8"/></svg>
<div style="left:70.78px;width:120px;top:181.69px;font-size:8.3px;line-height:11.62px;color:#383838;font-weight:normal;white-space:nowrap;text-align:right;letter-spacing:-0.08px;-webkit-text-stroke:0.15px #444;">10.00</div>
<div style="left:112.38px;width:120px;top:181.69px;font-size:8.3px;line-height:11.62px;color:#383838;font-weight:normal;white-space:nowrap;text-align:right;letter-spacing:-0.08px;-webkit-text-stroke:0.15px #444;">10.00</div>
<svg style="left:238.3px;top:181.97px" width="10" height="10" viewBox="0 0 10 10"><path d="M1.0,6.5 L6.9,0.9 Q7.5,0.4 8.1,0.9 L8.6,1.4 Q9.1,2.0 8.6,2.6 L2.7,8.3 Q2.1,8.8 1.5,8.3 L1.0,7.8 Q0.5,7.1 1.0,6.5 Z" fill="none" stroke="#c6c6c6" stroke-width="0.8"/></svg>
<svg style="left:298.85px;top:181.97px" width="10" height="10" viewBox="0 0 10 10"><path d="M1.0,6.5 L6.9,0.9 Q7.5,0.4 8.1,0.9 L8.6,1.4 Q9.1,2.0 8.6,2.6 L2.7,8.3 Q2.1,8.8 1.5,8.3 L1.0,7.8 Q0.5,7.1 1.0,6.5 Z" fill="none" stroke="#c6c6c6" stroke-width="0.8"/></svg>
<svg style="left:359.4px;top:181.97px" width="10" height="10" viewBox="0 0 10 10"><path d="M1.0,6.5 L6.9,0.9 Q7.5,0.4 8.1,0.9 L8.6,1.4 Q9.1,2.0 8.6,2.6 L2.7,8.3 Q2.1,8.8 1.5,8.3 L1.0,7.8 Q0.5,7.1 1.0,6.5 Z" fill="none" stroke="#c6c6c6" stroke-width="0.8"/></svg>
<svg style="left:419.95px;top:181.97px" width="10" height="10" viewBox="0 0 10 10"><path d="M1.0,6.5 L6.9,0.9 Q7.5,0.4 8.1,0.9 L8.6,1.4 Q9.1,2.0 8.6,2.6 L2.7,8.3 Q2.1,8.8 1.5,8.3 L1.0,7.8 Q0.5,7.1 1.0,6.5 Z" fill="none" stroke="#c6c6c6" stroke-width="0.8"/></svg>
<svg style="left:480.5px;top:181.97px" width="10" height="10" viewBox="0 0 10 10"><path d="M1.0,6.5 L6.9,0.9 Q7.5,0.4 8.1,0.9 L8.6,1.4 Q9.1,2.0 8.6,2.6 L2.7,8.3 Q2.1,8.8 1.5,8.3 L1.0,7.8 Q0.5,7.1 1.0,6.5 Z" fill="none" stroke="#c6c6c6" stroke-width="0.8"/></svg>
<div style="left:416.13px;width:120px;top:181.69px;font-size:8.3px;line-height:11.62px;color:#383838;font-weight:normal;white-space:nowrap;text-align:right;letter-spacing:-0.08px;-webkit-text-stroke:0.15px #444;">6.00</div>
<svg style="left:541.05px;top:181.97px" width="10" height="10" viewBox="0 0 10 10"><path d="M1.0,6.5 L6.9,0.9 Q7.5,0.4 8.1,0.9 L8.6,1.4 Q9.1,2.0 8.6,2.6 L2.7,8.3 Q2.1,8.8 1.5,8.3 L1.0,7.8 Q0.5,7.1 1.0,6.5 Z" fill="none" stroke="#c6c6c6" stroke-width="0.8"/></svg>
<div style="left:476.68px;width:120px;top:181.69px;font-size:8.3px;line-height:11.62px;color:#383838;font-weight:normal;white-space:nowrap;text-align:right;letter-spacing:-0.08px;-webkit-text-stroke:0.15px #444;">4.00</div>
<svg style="left:601.6px;top:181.97px" width="10" height="10" viewBox="0 0 10 10"><path d="M1.0,6.5 L6.9,0.9 Q7.5,0.4 8.1,0.9 L8.6,1.4 Q9.1,2.0 8.6,2.6 L2.7,8.3 Q2.1,8.8 1.5,8.3 L1.0,7.8 Q0.5,7.1 1.0,6.5 Z" fill="none" stroke="#c6c6c6" stroke-width="0.8"/></svg>
<svg style="left:662.15px;top:181.97px" width="10" height="10" viewBox="0 0 10 10"><path d="M1.0,6.5 L6.9,0.9 Q7.5,0.4 8.1,0.9 L8.6,1.4 Q9.1,2.0 8.6,2.6 L2.7,8.3 Q2.1,8.8 1.5,8.3 L1.0,7.8 Q0.5,7.1 1.0,6.5 Z" fill="none" stroke="#c6c6c6" stroke-width="0.8"/></svg>
<svg style="left:722.7px;top:181.97px" width="10" height="10" viewBox="0 0 10 10"><path d="M1.0,6.5 L6.9,0.9 Q7.5,0.4 8.1,0.9 L8.6,1.4 Q9.1,2.0 8.6,2.6 L2.7,8.3 Q2.1,8.8 1.5,8.3 L1.0,7.8 Q0.5,7.1 1.0,6.5 Z" fill="none" stroke="#c6c6c6" stroke-width="0.8"/></svg>
<svg style="left:783.25px;top:181.97px" width="10" height="10" viewBox="0 0 10 10"><path d="M1.0,6.5 L6.9,0.9 Q7.5,0.4 8.1,0.9 L8.6,1.4 Q9.1,2.0 8.6,2.6 L2.7,8.3 Q2.1,8.8 1.5,8.3 L1.0,7.8 Q0.5,7.1 1.0,6.5 Z" fill="none" stroke="#c6c6c6" stroke-width="0.8"/></svg>
<svg style="left:844.8px;top:181.97px" width="10" height="10" viewBox="0 0 10 10"><path d="M1.0,6.5 L6.9,0.9 Q7.5,0.4 8.1,0.9 L8.6,1.4 Q9.1,2.0 8.6,2.6 L2.7,8.3 Q2.1,8.8 1.5,8.3 L1.0,7.8 Q0.5,7.1 1.0,6.5 Z" fill="none" stroke="#c6c6c6" stroke-width="0.8"/></svg>
<div style="left:0px;top:210.61px;width:903.5px;height:1px;background:#f0f0f0;"></div>
<div style="left:93.3px;top:198.6px;font-size:7.6px;line-height:10.64px;color:#383838;font-weight:normal;white-space:nowrap;-webkit-text-stroke:0.15px #444;">Request</div>
<svg style="left:152.7px;top:197.74px" width="10" height="10" viewBox="0 0 10 10"><path d="M1.0,6.5 L6.9,0.9 Q7.5,0.4 8.1,0.9 L8.6,1.4 Q9.1,2.0 8.6,2.6 L2.7,8.3 Q2.1,8.8 1.5,8.3 L1.0,7.8 Q0.5,7.1 1.0,6.5 Z" fill="none" stroke="#c6c6c6" stroke-width="0.8"/></svg>
<div style="left:70.78px;width:120px;top:197.46px;font-size:8.3px;line-height:11.62px;color:#383838;font-weight:normal;white-space:nowrap;text-align:right;letter-spacing:-0.08px;-webkit-text-stroke:0.15px #444;">10.00</div>
<div style="left:112.38px;width:120px;top:197.46px;font-size:8.3px;line-height:11.62px;color:#383838;font-weight:normal;white-space:nowrap;text-align:right;letter-spacing:-0.08px;-webkit-text-stroke:0.15px #444;">10.00</div>
<svg style="left:238.3px;top:197.74px" width="10" height="10" viewBox="0 0 10 10"><path d="M1.0,6.5 L6.9,0.9 Q7.5,0.4 8.1,0.9 L8.6,1.4 Q9.1,2.0 8.6,2.6 L2.7,8.3 Q2.1,8.8 1.5,8.3 L1.0,7.8 Q0.5,7.1 1.0,6.5 Z" fill="none" stroke="#c6c6c6" stroke-width="0.8"/></svg>
<svg style="left:298.85px;top:197.74px" width="10" height="10" viewBox="0 0 10 10"><path d="M1.0,6.5 L6.9,0.9 Q7.5,0.4 8.1,0.9 L8.6,1.4 Q9.1,2.0 8.6,2.6 L2.7,8.3 Q2.1,8.8 1.5,8.3 L1.0,7.8 Q0.5,7.1 1.0,6.5 Z" fill="none" stroke="#c6c6c6" stroke-width="0.8"/></svg>
<svg style="left:359.4px;top:197.74px" width="10" height="10" viewBox="0 0 10 10"><path d="M1.0,6.5 L6.9,0.9 Q7.5,0.4 8.1,0.9 L8.6,1.4 Q9.1,2.0 8.6,2.6 L2.7,8.3 Q2.1,8.8 1.5,8.3 L1.0,7.8 Q0.5,7.1 1.0,6.5 Z" fill="none" stroke="#c6c6c6" stroke-width="0.8"/></svg>
<svg style="left:419.95px;top:197.74px" width="10" height="10" viewBox="0 0 10 10"><path d="M1.0,6.5 L6.9,0.9 Q7.5,0.4 8.1,0.9 L8.6,1.4 Q9.1,2.0 8.6,2.6 L2.7,8.3 Q2.1,8.8 1.5,8.3 L1.0,7.8 Q0.5,7.1 1.0,6.5 Z" fill="none" stroke="#c6c6c6" stroke-width="0.8"/></svg>
<svg style="left:480.5px;top:197.74px" width="10" height="10" viewBox="0 0 10 10"><path d="M1.0,6.5 L6.9,0.9 Q7.5,0.4 8.1,0.9 L8.6,1.4 Q9.1,2.0 8.6,2.6 L2.7,8.3 Q2.1,8.8 1.5,8.3 L1.0,7.8 Q0.5,7.1 1.0,6.5 Z" fill="none" stroke="#c6c6c6" stroke-width="0.8"/></svg>
<div style="left:416.13px;width:120px;top:197.46px;font-size:8.3px;line-height:11.62px;color:#383838;font-weight:normal;white-space:nowrap;text-align:right;letter-spacing:-0.08px;-webkit-text-stroke:0.15px #444;">6.00</div>
<svg style="left:541.05px;top:197.74px" width="10" height="10" viewBox="0 0 10 10"><path d="M1.0,6.5 L6.9,0.9 Q7.5,0.4 8.1,0.9 L8.6,1.4 Q9.1,2.0 8.6,2.6 L2.7,8.3 Q2.1,8.8 1.5,8.3 L1.0,7.8 Q0.5,7.1 1.0,6.5 Z" fill="none" stroke="#c6c6c6" stroke-width="0.8"/></svg>
<div style="left:476.68px;width:120px;top:197.46px;font-size:8.3px;line-height:11.62px;color:#383838;font-weight:normal;white-space:nowrap;text-align:right;letter-spacing:-0.08px;-webkit-text-stroke:0.15px #444;">4.00</div>
<svg style="left:601.6px;top:197.74px" width="10" height="10" viewBox="0 0 10 10"><path d="M1.0,6.5 L6.9,0.9 Q7.5,0.4 8.1,0.9 L8.6,1.4 Q9.1,2.0 8.6,2.6 L2.7,8.3 Q2.1,8.8 1.5,8.3 L1.0,7.8 Q0.5,7.1 1.0,6.5 Z" fill="none" stroke="#c6c6c6" stroke-width="0.8"/></svg>
<svg style="left:662.15px;top:197.74px" width="10" height="10" viewBox="0 0 10 10"><path d="M1.0,6.5 L6.9,0.9 Q7.5,0.4 8.1,0.9 L8.6,1.4 Q9.1,2.0 8.6,2.6 L2.7,8.3 Q2.1,8.8 1.5,8.3 L1.0,7.8 Q0.5,7.1 1.0,6.5 Z" fill="none" stroke="#c6c6c6" stroke-width="0.8"/></svg>
<svg style="left:722.7px;top:197.74px" width="10" height="10" viewBox="0 0 10 10"><path d="M1.0,6.5 L6.9,0.9 Q7.5,0.4 8.1,0.9 L8.6,1.4 Q9.1,2.0 8.6,2.6 L2.7,8.3 Q2.1,8.8 1.5,8.3 L1.0,7.8 Q0.5,7.1 1.0,6.5 Z" fill="none" stroke="#c6c6c6" stroke-width="0.8"/></svg>
<svg style="left:783.25px;top:197.74px" width="10" height="10" viewBox="0 0 10 10"><path d="M1.0,6.5 L6.9,0.9 Q7.5,0.4 8.1,0.9 L8.6,1.4 Q9.1,2.0 8.6,2.6 L2.7,8.3 Q2.1,8.8 1.5,8.3 L1.0,7.8 Q0.5,7.1 1.0,6.5 Z" fill="none" stroke="#c6c6c6" stroke-width="0.8"/></svg>
<svg style="left:844.8px;top:197.74px" width="10" height="10" viewBox="0 0 10 10"><path d="M1.0,6.5 L6.9,0.9 Q7.5,0.4 8.1,0.9 L8.6,1.4 Q9.1,2.0 8.6,2.6 L2.7,8.3 Q2.1,8.8 1.5,8.3 L1.0,7.8 Q0.5,7.1 1.0,6.5 Z" fill="none" stroke="#c6c6c6" stroke-width="0.8"/></svg>
<div style="left:0px;top:226.38px;width:903.5px;height:1px;background:#f0f0f0;"></div>
<svg style="left:21.7px;top:216.11px" width="9" height="8" viewBox="0 0 9 8"><path d="M0.3,0.8 Q0.3,0.3 0.8,0.3 H3.1 L4,1.3 H7.1 Q7.6,1.3 7.6,1.8 V5.6 Q7.6,6.1 7.1,6.1 H0.8 Q0.3,6.1 0.3,5.6 Z" fill="#0a0a0a"/></svg>
<div style="left:33.1px;top:214.37px;font-size:7.6px;line-height:10.64px;color:#383838;font-weight:normal;white-space:nowrap;-webkit-text-stroke:0.15px #444;">Schmerzpr...</div>
<div style="left:5.7px;top:222.01px;width:11.9px;height:0.8px;background:#d4d4d4;"></div>
<div style="left:81.3px;top:218.7px;width:6.3px;height:1.1px;background:#262626;"></div>
<div style="left:93.3px;top:214.37px;font-size:7.6px;line-height:10.64px;color:#383838;font-weight:normal;white-space:nowrap;-webkit-text-stroke:0.15px #444;letter-spacing:0.22px;">Commitment</div>
<svg style="left:152.7px;top:213.51px" width="10" height="10" viewBox="0 0 10 10"><path d="M1.0,6.5 L6.9,0.9 Q7.5,0.4 8.1,0.9 L8.6,1.4 Q9.1,2.0 8.6,2.6 L2.7,8.3 Q2.1,8.8 1.5,8.3 L1.0,7.8 Q0.5,7.1 1.0,6.5 Z" fill="none" stroke="#c6c6c6" stroke-width="0.8"/></svg>
<div style="left:70.78px;width:120px;top:213.23px;font-size:8.3px;line-height:11.62px;color:#383838;font-weight:normal;white-space:nowrap;text-align:right;letter-spacing:-0.08px;-webkit-text-stroke:0.15px #444;">10.00</div>
<div style="left:112.38px;width:120px;top:213.23px;font-size:8.3px;line-height:11.62px;color:#383838;font-weight:normal;white-space:nowrap;text-align:right;letter-spacing:-0.08px;-webkit-text-stroke:0.15px #444;">10.00</div>
<svg style="left:238.3px;top:213.51px" width="10" height="10" viewBox="0 0 10 10"><path d="M1.0,6.5 L6.9,0.9 Q7.5,0.4 8.1,0.9 L8.6,1.4 Q9.1,2.0 8.6,2.6 L2.7,8.3 Q2.1,8.8 1.5,8.3 L1.0,7.8 Q0.5,7.1 1.0,6.5 Z" fill="none" stroke="#c6c6c6" stroke-width="0.8"/></svg>
<svg style="left:298.85px;top:213.51px" width="10" height="10" viewBox="0 0 10 10"><path d="M1.0,6.5 L6.9,0.9 Q7.5,0.4 8.1,0.9 L8.6,1.4 Q9.1,2.0 8.6,2.6 L2.7,8.3 Q2.1,8.8 1.5,8.3 L1.0,7.8 Q0.5,7.1 1.0,6.5 Z" fill="none" stroke="#c6c6c6" stroke-width="0.8"/></svg>
<svg style="left:359.4px;top:213.51px" width="10" height="10" viewBox="0 0 10 10"><path d="M1.0,6.5 L6.9,0.9 Q7.5,0.4 8.1,0.9 L8.6,1.4 Q9.1,2.0 8.6,2.6 L2.7,8.3 Q2.1,8.8 1.5,8.3 L1.0,7.8 Q0.5,7.1 1.0,6.5 Z" fill="none" stroke="#c6c6c6" stroke-width="0.8"/></svg>
<svg style="left:419.95px;top:213.51px" width="10" height="10" viewBox="0 0 10 10"><path d="M1.0,6.5 L6.9,0.9 Q7.5,0.4 8.1,0.9 L8.6,1.4 Q9.1,2.0 8.6,2.6 L2.7,8.3 Q2.1,8.8 1.5,8.3 L1.0,7.8 Q0.5,7.1 1.0,6.5 Z" fill="none" stroke="#c6c6c6" stroke-width="0.8"/></svg>
<svg style="left:480.5px;top:213.51px" width="10" height="10" viewBox="0 0 10 10"><path d="M1.0,6.5 L6.9,0.9 Q7.5,0.4 8.1,0.9 L8.6,1.4 Q9.1,2.0 8.6,2.6 L2.7,8.3 Q2.1,8.8 1.5,8.3 L1.0,7.8 Q0.5,7.1 1.0,6.5 Z" fill="none" stroke="#c6c6c6" stroke-width="0.8"/></svg>
<div style="left:416.13px;width:120px;top:213.23px;font-size:8.3px;line-height:11.62px;color:#383838;font-weight:normal;white-space:nowrap;text-align:right;letter-spacing:-0.08px;-webkit-text-stroke:0.15px #444;">6.00</div>
<svg style="left:541.05px;top:213.51px" width="10" height="10" viewBox="0 0 10 10"><path d="M1.0,6.5 L6.9,0.9 Q7.5,0.4 8.1,0.9 L8.6,1.4 Q9.1,2.0 8.6,2.6 L2.7,8.3 Q2.1,8.8 1.5,8.3 L1.0,7.8 Q0.5,7.1 1.0,6.5 Z" fill="none" stroke="#c6c6c6" stroke-width="0.8"/></svg>
<div style="left:476.68px;width:120px;top:213.23px;font-size:8.3px;line-height:11.62px;color:#383838;font-weight:normal;white-space:nowrap;text-align:right;letter-spacing:-0.08px;-webkit-text-stroke:0.15px #444;">4.00</div>
<svg style="left:601.6px;top:213.51px" width="10" height="10" viewBox="0 0 10 10"><path d="M1.0,6.5 L6.9,0.9 Q7.5,0.4 8.1,0.9 L8.6,1.4 Q9.1,2.0 8.6,2.6 L2.7,8.3 Q2.1,8.8 1.5,8.3 L1.0,7.8 Q0.5,7.1 1.0,6.5 Z" fill="none" stroke="#c6c6c6" stroke-width="0.8"/></svg>
<svg style="left:662.15px;top:213.51px" width="10" height="10" viewBox="0 0 10 10"><path d="M1.0,6.5 L6.9,0.9 Q7.5,0.4 8.1,0.9 L8.6,1.4 Q9.1,2.0 8.6,2.6 L2.7,8.3 Q2.1,8.8 1.5,8.3 L1.0,7.8 Q0.5,7.1 1.0,6.5 Z" fill="none" stroke="#c6c6c6" stroke-width="0.8"/></svg>
<svg style="left:722.7px;top:213.51px" width="10" height="10" viewBox="0 0 10 10"><path d="M1.0,6.5 L6.9,0.9 Q7.5,0.4 8.1,0.9 L8.6,1.4 Q9.1,2.0 8.6,2.6 L2.7,8.3 Q2.1,8.8 1.5,8.3 L1.0,7.8 Q0.5,7.1 1.0,6.5 Z" fill="none" stroke="#c6c6c6" stroke-width="0.8"/></svg>
<svg style="left:783.25px;top:213.51px" width="10" height="10" viewBox="0 0 10 10"><path d="M1.0,6.5 L6.9,0.9 Q7.5,0.4 8.1,0.9 L8.6,1.4 Q9.1,2.0 8.6,2.6 L2.7,8.3 Q2.1,8.8 1.5,8.3 L1.0,7.8 Q0.5,7.1 1.0,6.5 Z" fill="none" stroke="#c6c6c6" stroke-width="0.8"/></svg>
<svg style="left:844.8px;top:213.51px" width="10" height="10" viewBox="0 0 10 10"><path d="M1.0,6.5 L6.9,0.9 Q7.5,0.4 8.1,0.9 L8.6,1.4 Q9.1,2.0 8.6,2.6 L2.7,8.3 Q2.1,8.8 1.5,8.3 L1.0,7.8 Q0.5,7.1 1.0,6.5 Z" fill="none" stroke="#c6c6c6" stroke-width="0.8"/></svg>
<div style="left:0px;top:242.15px;width:903.5px;height:1px;background:#f0f0f0;"></div>
<div style="left:93.3px;top:230.14px;font-size:7.6px;line-height:10.64px;color:#383838;font-weight:normal;white-space:nowrap;-webkit-text-stroke:0.15px #444;">Request</div>
<svg style="left:152.7px;top:229.28px" width="10" height="10" viewBox="0 0 10 10"><path d="M1.0,6.5 L6.9,0.9 Q7.5,0.4 8.1,0.9 L8.6,1.4 Q9.1,2.0 8.6,2.6 L2.7,8.3 Q2.1,8.8 1.5,8.3 L1.0,7.8 Q0.5,7.1 1.0,6.5 Z" fill="none" stroke="#c6c6c6" stroke-width="0.8"/></svg>
<div style="left:70.78px;width:120px;top:229px;font-size:8.3px;line-height:11.62px;color:#383838;font-weight:normal;white-space:nowrap;text-align:right;letter-spacing:-0.08px;-webkit-text-stroke:0.15px #444;">10.00</div>
<div style="left:112.38px;width:120px;top:229px;font-size:8.3px;line-height:11.62px;color:#383838;font-weight:normal;white-space:nowrap;text-align:right;letter-spacing:-0.08px;-webkit-text-stroke:0.15px #444;">10.00</div>
<svg style="left:238.3px;top:229.28px" width="10" height="10" viewBox="0 0 10 10"><path d="M1.0,6.5 L6.9,0.9 Q7.5,0.4 8.1,0.9 L8.6,1.4 Q9.1,2.0 8.6,2.6 L2.7,8.3 Q2.1,8.8 1.5,8.3 L1.0,7.8 Q0.5,7.1 1.0,6.5 Z" fill="none" stroke="#c6c6c6" stroke-width="0.8"/></svg>
<svg style="left:298.85px;top:229.28px" width="10" height="10" viewBox="0 0 10 10"><path d="M1.0,6.5 L6.9,0.9 Q7.5,0.4 8.1,0.9 L8.6,1.4 Q9.1,2.0 8.6,2.6 L2.7,8.3 Q2.1,8.8 1.5,8.3 L1.0,7.8 Q0.5,7.1 1.0,6.5 Z" fill="none" stroke="#c6c6c6" stroke-width="0.8"/></svg>
<svg style="left:359.4px;top:229.28px" width="10" height="10" viewBox="0 0 10 10"><path d="M1.0,6.5 L6.9,0.9 Q7.5,0.4 8.1,0.9 L8.6,1.4 Q9.1,2.0 8.6,2.6 L2.7,8.3 Q2.1,8.8 1.5,8.3 L1.0,7.8 Q0.5,7.1 1.0,6.5 Z" fill="none" stroke="#c6c6c6" stroke-width="0.8"/></svg>
<svg style="left:419.95px;top:229.28px" width="10" height="10" viewBox="0 0 10 10"><path d="M1.0,6.5 L6.9,0.9 Q7.5,0.4 8.1,0.9 L8.6,1.4 Q9.1,2.0 8.6,2.6 L2.7,8.3 Q2.1,8.8 1.5,8.3 L1.0,7.8 Q0.5,7.1 1.0,6.5 Z" fill="none" stroke="#c6c6c6" stroke-width="0.8"/></svg>
<svg style="left:480.5px;top:229.28px" width="10" height="10" viewBox="0 0 10 10"><path d="M1.0,6.5 L6.9,0.9 Q7.5,0.4 8.1,0.9 L8.6,1.4 Q9.1,2.0 8.6,2.6 L2.7,8.3 Q2.1,8.8 1.5,8.3 L1.0,7.8 Q0.5,7.1 1.0,6.5 Z" fill="none" stroke="#c6c6c6" stroke-width="0.8"/></svg>
<div style="left:416.13px;width:120px;top:229px;font-size:8.3px;line-height:11.62px;color:#383838;font-weight:normal;white-space:nowrap;text-align:right;letter-spacing:-0.08px;-webkit-text-stroke:0.15px #444;">6.00</div>
<svg style="left:541.05px;top:229.28px" width="10" height="10" viewBox="0 0 10 10"><path d="M1.0,6.5 L6.9,0.9 Q7.5,0.4 8.1,0.9 L8.6,1.4 Q9.1,2.0 8.6,2.6 L2.7,8.3 Q2.1,8.8 1.5,8.3 L1.0,7.8 Q0.5,7.1 1.0,6.5 Z" fill="none" stroke="#c6c6c6" stroke-width="0.8"/></svg>
<div style="left:476.68px;width:120px;top:229px;font-size:8.3px;line-height:11.62px;color:#383838;font-weight:normal;white-space:nowrap;text-align:right;letter-spacing:-0.08px;-webkit-text-stroke:0.15px #444;">4.00</div>
<svg style="left:601.6px;top:229.28px" width="10" height="10" viewBox="0 0 10 10"><path d="M1.0,6.5 L6.9,0.9 Q7.5,0.4 8.1,0.9 L8.6,1.4 Q9.1,2.0 8.6,2.6 L2.7,8.3 Q2.1,8.8 1.5,8.3 L1.0,7.8 Q0.5,7.1 1.0,6.5 Z" fill="none" stroke="#c6c6c6" stroke-width="0.8"/></svg>
<svg style="left:662.15px;top:229.28px" width="10" height="10" viewBox="0 0 10 10"><path d="M1.0,6.5 L6.9,0.9 Q7.5,0.4 8.1,0.9 L8.6,1.4 Q9.1,2.0 8.6,2.6 L2.7,8.3 Q2.1,8.8 1.5,8.3 L1.0,7.8 Q0.5,7.1 1.0,6.5 Z" fill="none" stroke="#c6c6c6" stroke-width="0.8"/></svg>
<svg style="left:722.7px;top:229.28px" width="10" height="10" viewBox="0 0 10 10"><path d="M1.0,6.5 L6.9,0.9 Q7.5,0.4 8.1,0.9 L8.6,1.4 Q9.1,2.0 8.6,2.6 L2.7,8.3 Q2.1,8.8 1.5,8.3 L1.0,7.8 Q0.5,7.1 1.0,6.5 Z" fill="none" stroke="#c6c6c6" stroke-width="0.8"/></svg>
<svg style="left:783.25px;top:229.28px" width="10" height="10" viewBox="0 0 10 10"><path d="M1.0,6.5 L6.9,0.9 Q7.5,0.4 8.1,0.9 L8.6,1.4 Q9.1,2.0 8.6,2.6 L2.7,8.3 Q2.1,8.8 1.5,8.3 L1.0,7.8 Q0.5,7.1 1.0,6.5 Z" fill="none" stroke="#c6c6c6" stroke-width="0.8"/></svg>
<svg style="left:844.8px;top:229.28px" width="10" height="10" viewBox="0 0 10 10"><path d="M1.0,6.5 L6.9,0.9 Q7.5,0.4 8.1,0.9 L8.6,1.4 Q9.1,2.0 8.6,2.6 L2.7,8.3 Q2.1,8.8 1.5,8.3 L1.0,7.8 Q0.5,7.1 1.0,6.5 Z" fill="none" stroke="#c6c6c6" stroke-width="0.8"/></svg>
<div style="left:0px;top:242.65px;width:903.5px;height:15.77px;background:#f5f5f5;"></div>
<div style="left:0px;top:257.92px;width:903.5px;height:1px;background:#f0f0f0;"></div>
<div style="left:27px;top:245.91px;font-size:7.6px;line-height:10.64px;color:#383838;font-weight:normal;white-space:nowrap;-webkit-text-stroke:0.15px #444;">RC_00012</div>
<div style="left:5.7px;top:252.95px;width:18px;height:0.8px;background:#d0d0d0;"></div>
<div style="left:93.3px;top:245.91px;font-size:7.6px;line-height:10.64px;color:#383838;font-weight:normal;white-space:nowrap;-webkit-text-stroke:0.15px #444;letter-spacing:0.22px;">Commitment</div>
<svg style="left:152.7px;top:245.05px" width="10" height="10" viewBox="0 0 10 10"><path d="M1.0,6.5 L6.9,0.9 Q7.5,0.4 8.1,0.9 L8.6,1.4 Q9.1,2.0 8.6,2.6 L2.7,8.3 Q2.1,8.8 1.5,8.3 L1.0,7.8 Q0.5,7.1 1.0,6.5 Z" fill="none" stroke="#c6c6c6" stroke-width="0.8"/></svg>
<div style="left:70.78px;width:120px;top:244.77px;font-size:8.3px;line-height:11.62px;color:#383838;font-weight:normal;white-space:nowrap;text-align:right;letter-spacing:-0.08px;-webkit-text-stroke:0.15px #444;">10.00</div>
<div style="left:112.38px;width:120px;top:244.77px;font-size:8.3px;line-height:11.62px;color:#383838;font-weight:normal;white-space:nowrap;text-align:right;letter-spacing:-0.08px;-webkit-text-stroke:0.15px #444;">10.00</div>
<svg style="left:238.3px;top:245.05px" width="10" height="10" viewBox="0 0 10 10"><path d="M1.0,6.5 L6.9,0.9 Q7.5,0.4 8.1,0.9 L8.6,1.4 Q9.1,2.0 8.6,2.6 L2.7,8.3 Q2.1,8.8 1.5,8.3 L1.0,7.8 Q0.5,7.1 1.0,6.5 Z" fill="none" stroke="#c6c6c6" stroke-width="0.8"/></svg>
<svg style="left:298.85px;top:245.05px" width="10" height="10" viewBox="0 0 10 10"><path d="M1.0,6.5 L6.9,0.9 Q7.5,0.4 8.1,0.9 L8.6,1.4 Q9.1,2.0 8.6,2.6 L2.7,8.3 Q2.1,8.8 1.5,8.3 L1.0,7.8 Q0.5,7.1 1.0,6.5 Z" fill="none" stroke="#c6c6c6" stroke-width="0.8"/></svg>
<svg style="left:359.4px;top:245.05px" width="10" height="10" viewBox="0 0 10 10"><path d="M1.0,6.5 L6.9,0.9 Q7.5,0.4 8.1,0.9 L8.6,1.4 Q9.1,2.0 8.6,2.6 L2.7,8.3 Q2.1,8.8 1.5,8.3 L1.0,7.8 Q0.5,7.1 1.0,6.5 Z" fill="none" stroke="#c6c6c6" stroke-width="0.8"/></svg>
<svg style="left:419.95px;top:245.05px" width="10" height="10" viewBox="0 0 10 10"><path d="M1.0,6.5 L6.9,0.9 Q7.5,0.4 8.1,0.9 L8.6,1.4 Q9.1,2.0 8.6,2.6 L2.7,8.3 Q2.1,8.8 1.5,8.3 L1.0,7.8 Q0.5,7.1 1.0,6.5 Z" fill="none" stroke="#c6c6c6" stroke-width="0.8"/></svg>
<svg style="left:480.5px;top:245.05px" width="10" height="10" viewBox="0 0 10 10"><path d="M1.0,6.5 L6.9,0.9 Q7.5,0.4 8.1,0.9 L8.6,1.4 Q9.1,2.0 8.6,2.6 L2.7,8.3 Q2.1,8.8 1.5,8.3 L1.0,7.8 Q0.5,7.1 1.0,6.5 Z" fill="none" stroke="#c6c6c6" stroke-width="0.8"/></svg>
<div style="left:416.13px;width:120px;top:244.77px;font-size:8.3px;line-height:11.62px;color:#383838;font-weight:normal;white-space:nowrap;text-align:right;letter-spacing:-0.08px;-webkit-text-stroke:0.15px #444;">6.00</div>
<svg style="left:541.05px;top:245.05px" width="10" height="10" viewBox="0 0 10 10"><path d="M1.0,6.5 L6.9,0.9 Q7.5,0.4 8.1,0.9 L8.6,1.4 Q9.1,2.0 8.6,2.6 L2.7,8.3 Q2.1,8.8 1.5,8.3 L1.0,7.8 Q0.5,7.1 1.0,6.5 Z" fill="none" stroke="#c6c6c6" stroke-width="0.8"/></svg>
<div style="left:476.68px;width:120px;top:244.77px;font-size:8.3px;line-height:11.62px;color:#383838;font-weight:normal;white-space:nowrap;text-align:right;letter-spacing:-0.08px;-webkit-text-stroke:0.15px #444;">4.00</div>
<svg style="left:601.6px;top:245.05px" width="10" height="10" viewBox="0 0 10 10"><path d="M1.0,6.5 L6.9,0.9 Q7.5,0.4 8.1,0.9 L8.6,1.4 Q9.1,2.0 8.6,2.6 L2.7,8.3 Q2.1,8.8 1.5,8.3 L1.0,7.8 Q0.5,7.1 1.0,6.5 Z" fill="none" stroke="#c6c6c6" stroke-width="0.8"/></svg>
<svg style="left:662.15px;top:245.05px" width="10" height="10" viewBox="0 0 10 10"><path d="M1.0,6.5 L6.9,0.9 Q7.5,0.4 8.1,0.9 L8.6,1.4 Q9.1,2.0 8.6,2.6 L2.7,8.3 Q2.1,8.8 1.5,8.3 L1.0,7.8 Q0.5,7.1 1.0,6.5 Z" fill="none" stroke="#c6c6c6" stroke-width="0.8"/></svg>
<svg style="left:722.7px;top:245.05px" width="10" height="10" viewBox="0 0 10 10"><path d="M1.0,6.5 L6.9,0.9 Q7.5,0.4 8.1,0.9 L8.6,1.4 Q9.1,2.0 8.6,2.6 L2.7,8.3 Q2.1,8.8 1.5,8.3 L1.0,7.8 Q0.5,7.1 1.0,6.5 Z" fill="none" stroke="#c6c6c6" stroke-width="0.8"/></svg>
<svg style="left:783.25px;top:245.05px" width="10" height="10" viewBox="0 0 10 10"><path d="M1.0,6.5 L6.9,0.9 Q7.5,0.4 8.1,0.9 L8.6,1.4 Q9.1,2.0 8.6,2.6 L2.7,8.3 Q2.1,8.8 1.5,8.3 L1.0,7.8 Q0.5,7.1 1.0,6.5 Z" fill="none" stroke="#c6c6c6" stroke-width="0.8"/></svg>
<svg style="left:844.8px;top:245.05px" width="10" height="10" viewBox="0 0 10 10"><path d="M1.0,6.5 L6.9,0.9 Q7.5,0.4 8.1,0.9 L8.6,1.4 Q9.1,2.0 8.6,2.6 L2.7,8.3 Q2.1,8.8 1.5,8.3 L1.0,7.8 Q0.5,7.1 1.0,6.5 Z" fill="none" stroke="#c6c6c6" stroke-width="0.8"/></svg>
<div style="left:0px;top:258.42px;width:903.5px;height:15.77px;background:#f5f5f5;"></div>
<div style="left:0px;top:273.69px;width:903.5px;height:1px;background:#f0f0f0;"></div>
<div style="left:27px;top:261.68px;font-size:7.6px;line-height:10.64px;color:#383838;font-weight:normal;white-space:nowrap;-webkit-text-stroke:0.15px #444;">RR_00026</div>
<div style="left:5.7px;top:268.72px;width:18px;height:0.8px;background:#d0d0d0;"></div>
<div style="left:93.3px;top:261.68px;font-size:7.6px;line-height:10.64px;color:#383838;font-weight:normal;white-space:nowrap;-webkit-text-stroke:0.15px #444;">Request</div>
<svg style="left:152.7px;top:260.82px" width="10" height="10" viewBox="0 0 10 10"><path d="M1.0,6.5 L6.9,0.9 Q7.5,0.4 8.1,0.9 L8.6,1.4 Q9.1,2.0 8.6,2.6 L2.7,8.3 Q2.1,8.8 1.5,8.3 L1.0,7.8 Q0.5,7.1 1.0,6.5 Z" fill="none" stroke="#c6c6c6" stroke-width="0.8"/></svg>
<div style="left:70.78px;width:120px;top:260.54px;font-size:8.3px;line-height:11.62px;color:#383838;font-weight:normal;white-space:nowrap;text-align:right;letter-spacing:-0.08px;-webkit-text-stroke:0.15px #444;">10.00</div>
<div style="left:112.38px;width:120px;top:260.54px;font-size:8.3px;line-height:11.62px;color:#383838;font-weight:normal;white-space:nowrap;text-align:right;letter-spacing:-0.08px;-webkit-text-stroke:0.15px #444;">10.00</div>
<svg style="left:238.3px;top:260.82px" width="10" height="10" viewBox="0 0 10 10"><path d="M1.0,6.5 L6.9,0.9 Q7.5,0.4 8.1,0.9 L8.6,1.4 Q9.1,2.0 8.6,2.6 L2.7,8.3 Q2.1,8.8 1.5,8.3 L1.0,7.8 Q0.5,7.1 1.0,6.5 Z" fill="none" stroke="#c6c6c6" stroke-width="0.8"/></svg>
<svg style="left:298.85px;top:260.82px" width="10" height="10" viewBox="0 0 10 10"><path d="M1.0,6.5 L6.9,0.9 Q7.5,0.4 8.1,0.9 L8.6,1.4 Q9.1,2.0 8.6,2.6 L2.7,8.3 Q2.1,8.8 1.5,8.3 L1.0,7.8 Q0.5,7.1 1.0,6.5 Z" fill="none" stroke="#c6c6c6" stroke-width="0.8"/></svg>
<svg style="left:359.4px;top:260.82px" width="10" height="10" viewBox="0 0 10 10"><path d="M1.0,6.5 L6.9,0.9 Q7.5,0.4 8.1,0.9 L8.6,1.4 Q9.1,2.0 8.6,2.6 L2.7,8.3 Q2.1,8.8 1.5,8.3 L1.0,7.8 Q0.5,7.1 1.0,6.5 Z" fill="none" stroke="#c6c6c6" stroke-width="0.8"/></svg>
<svg style="left:419.95px;top:260.82px" width="10" height="10" viewBox="0 0 10 10"><path d="M1.0,6.5 L6.9,0.9 Q7.5,0.4 8.1,0.9 L8.6,1.4 Q9.1,2.0 8.6,2.6 L2.7,8.3 Q2.1,8.8 1.5,8.3 L1.0,7.8 Q0.5,7.1 1.0,6.5 Z" fill="none" stroke="#c6c6c6" stroke-width="0.8"/></svg>
<svg style="left:480.5px;top:260.82px" width="10" height="10" viewBox="0 0 10 10"><path d="M1.0,6.5 L6.9,0.9 Q7.5,0.4 8.1,0.9 L8.6,1.4 Q9.1,2.0 8.6,2.6 L2.7,8.3 Q2.1,8.8 1.5,8.3 L1.0,7.8 Q0.5,7.1 1.0,6.5 Z" fill="none" stroke="#c6c6c6" stroke-width="0.8"/></svg>
<div style="left:416.13px;width:120px;top:260.54px;font-size:8.3px;line-height:11.62px;color:#383838;font-weight:normal;white-space:nowrap;text-align:right;letter-spacing:-0.08px;-webkit-text-stroke:0.15px #444;">6.00</div>
<svg style="left:541.05px;top:260.82px" width="10" height="10" viewBox="0 0 10 10"><path d="M1.0,6.5 L6.9,0.9 Q7.5,0.4 8.1,0.9 L8.6,1.4 Q9.1,2.0 8.6,2.6 L2.7,8.3 Q2.1,8.8 1.5,8.3 L1.0,7.8 Q0.5,7.1 1.0,6.5 Z" fill="none" stroke="#c6c6c6" stroke-width="0.8"/></svg>
<div style="left:476.68px;width:120px;top:260.54px;font-size:8.3px;line-height:11.62px;color:#383838;font-weight:normal;white-space:nowrap;text-align:right;letter-spacing:-0.08px;-webkit-text-stroke:0.15px #444;">4.00</div>
<svg style="left:601.6px;top:260.82px" width="10" height="10" viewBox="0 0 10 10"><path d="M1.0,6.5 L6.9,0.9 Q7.5,0.4 8.1,0.9 L8.6,1.4 Q9.1,2.0 8.6,2.6 L2.7,8.3 Q2.1,8.8 1.5,8.3 L1.0,7.8 Q0.5,7.1 1.0,6.5 Z" fill="none" stroke="#c6c6c6" stroke-width="0.8"/></svg>
<svg style="left:662.15px;top:260.82px" width="10" height="10" viewBox="0 0 10 10"><path d="M1.0,6.5 L6.9,0.9 Q7.5,0.4 8.1,0.9 L8.6,1.4 Q9.1,2.0 8.6,2.6 L2.7,8.3 Q2.1,8.8 1.5,8.3 L1.0,7.8 Q0.5,7.1 1.0,6.5 Z" fill="none" stroke="#c6c6c6" stroke-width="0.8"/></svg>
<svg style="left:722.7px;top:260.82px" width="10" height="10" viewBox="0 0 10 10"><path d="M1.0,6.5 L6.9,0.9 Q7.5,0.4 8.1,0.9 L8.6,1.4 Q9.1,2.0 8.6,2.6 L2.7,8.3 Q2.1,8.8 1.5,8.3 L1.0,7.8 Q0.5,7.1 1.0,6.5 Z" fill="none" stroke="#c6c6c6" stroke-width="0.8"/></svg>
<svg style="left:783.25px;top:260.82px" width="10" height="10" viewBox="0 0 10 10"><path d="M1.0,6.5 L6.9,0.9 Q7.5,0.4 8.1,0.9 L8.6,1.4 Q9.1,2.0 8.6,2.6 L2.7,8.3 Q2.1,8.8 1.5,8.3 L1.0,7.8 Q0.5,7.1 1.0,6.5 Z" fill="none" stroke="#c6c6c6" stroke-width="0.8"/></svg>
<svg style="left:844.8px;top:260.82px" width="10" height="10" viewBox="0 0 10 10"><path d="M1.0,6.5 L6.9,0.9 Q7.5,0.4 8.1,0.9 L8.6,1.4 Q9.1,2.0 8.6,2.6 L2.7,8.3 Q2.1,8.8 1.5,8.3 L1.0,7.8 Q0.5,7.1 1.0,6.5 Z" fill="none" stroke="#c6c6c6" stroke-width="0.8"/></svg>
<div style="left:0px;top:289.46px;width:903.5px;height:1px;background:#f0f0f0;"></div>
<svg style="left:6.3px;top:277.99px" width="10" height="9" viewBox="0 0 10 9"><g stroke="#222" fill="none"><path d="M3.3,1.4 H8.2 M3.3,3.6 H8.2 M3.3,6.1 H8.2" stroke-width="0.85"/><path d="M0.2,1.5 L0.9,2.2 L2.4,0.5 M0.2,3.8 L0.9,4.5 L2.4,2.8" stroke-width="0.95"/></g><circle cx="0.9" cy="6.2" r="0.75" fill="#222"/></svg>
<div style="left:17.6px;top:277.45px;font-size:7.6px;line-height:10.64px;color:#1f1f1f;font-weight:bold;white-space:nowrap;letter-spacing:-0.17px;">Festlegung der ...</div>
<div style="left:81.3px;top:282.7px;width:6.3px;height:1.1px;background:#262626;"></div>
<div style="left:93.3px;top:277.45px;font-size:7.6px;line-height:10.64px;color:#1f1f1f;font-weight:bold;white-space:nowrap;">Commitment</div>
<svg style="left:152.7px;top:276.59px" width="10" height="10" viewBox="0 0 10 10"><path d="M1.0,6.5 L6.9,0.9 Q7.5,0.4 8.1,0.9 L8.6,1.4 Q9.1,2.0 8.6,2.6 L2.7,8.3 Q2.1,8.8 1.5,8.3 L1.0,7.8 Q0.5,7.1 1.0,6.5 Z" fill="none" stroke="#c6c6c6" stroke-width="0.8"/></svg>
<div style="left:70.78px;width:120px;top:276.31px;font-size:8.3px;line-height:11.62px;color:#1f1f1f;font-weight:bold;white-space:nowrap;text-align:right;letter-spacing:-0.08px;">9.00</div>
<div style="left:112.38px;width:120px;top:276.31px;font-size:8.3px;line-height:11.62px;color:#1f1f1f;font-weight:bold;white-space:nowrap;text-align:right;letter-spacing:-0.08px;">9.00</div>
<svg style="left:238.3px;top:276.59px" width="10" height="10" viewBox="0 0 10 10"><path d="M1.0,6.5 L6.9,0.9 Q7.5,0.4 8.1,0.9 L8.6,1.4 Q9.1,2.0 8.6,2.6 L2.7,8.3 Q2.1,8.8 1.5,8.3 L1.0,7.8 Q0.5,7.1 1.0,6.5 Z" fill="none" stroke="#c6c6c6" stroke-width="0.8"/></svg>
<svg style="left:298.85px;top:276.59px" width="10" height="10" viewBox="0 0 10 10"><path d="M1.0,6.5 L6.9,0.9 Q7.5,0.4 8.1,0.9 L8.6,1.4 Q9.1,2.0 8.6,2.6 L2.7,8.3 Q2.1,8.8 1.5,8.3 L1.0,7.8 Q0.5,7.1 1.0,6.5 Z" fill="none" stroke="#c6c6c6" stroke-width="0.8"/></svg>
<svg style="left:359.4px;top:276.59px" width="10" height="10" viewBox="0 0 10 10"><path d="M1.0,6.5 L6.9,0.9 Q7.5,0.4 8.1,0.9 L8.6,1.4 Q9.1,2.0 8.6,2.6 L2.7,8.3 Q2.1,8.8 1.5,8.3 L1.0,7.8 Q0.5,7.1 1.0,6.5 Z" fill="none" stroke="#c6c6c6" stroke-width="0.8"/></svg>
<div style="left:295.03px;width:120px;top:276.31px;font-size:8.3px;line-height:11.62px;color:#1f1f1f;font-weight:bold;white-space:nowrap;text-align:right;letter-spacing:-0.08px;">2.00</div>
<svg style="left:419.95px;top:276.59px" width="10" height="10" viewBox="0 0 10 10"><path d="M1.0,6.5 L6.9,0.9 Q7.5,0.4 8.1,0.9 L8.6,1.4 Q9.1,2.0 8.6,2.6 L2.7,8.3 Q2.1,8.8 1.5,8.3 L1.0,7.8 Q0.5,7.1 1.0,6.5 Z" fill="none" stroke="#c6c6c6" stroke-width="0.8"/></svg>
<div style="left:355.58px;width:120px;top:276.31px;font-size:8.3px;line-height:11.62px;color:#1f1f1f;font-weight:bold;white-space:nowrap;text-align:right;letter-spacing:-0.08px;">7.00</div>
<svg style="left:480.5px;top:276.59px" width="10" height="10" viewBox="0 0 10 10"><path d="M1.0,6.5 L6.9,0.9 Q7.5,0.4 8.1,0.9 L8.6,1.4 Q9.1,2.0 8.6,2.6 L2.7,8.3 Q2.1,8.8 1.5,8.3 L1.0,7.8 Q0.5,7.1 1.0,6.5 Z" fill="none" stroke="#c6c6c6" stroke-width="0.8"/></svg>
<svg style="left:541.05px;top:276.59px" width="10" height="10" viewBox="0 0 10 10"><path d="M1.0,6.5 L6.9,0.9 Q7.5,0.4 8.1,0.9 L8.6,1.4 Q9.1,2.0 8.6,2.6 L2.7,8.3 Q2.1,8.8 1.5,8.3 L1.0,7.8 Q0.5,7.1 1.0,6.5 Z" fill="none" stroke="#c6c6c6" stroke-width="0.8"/></svg>
<svg style="left:601.6px;top:276.59px" width="10" height="10" viewBox="0 0 10 10"><path d="M1.0,6.5 L6.9,0.9 Q7.5,0.4 8.1,0.9 L8.6,1.4 Q9.1,2.0 8.6,2.6 L2.7,8.3 Q2.1,8.8 1.5,8.3 L1.0,7.8 Q0.5,7.1 1.0,6.5 Z" fill="none" stroke="#c6c6c6" stroke-width="0.8"/></svg>
<svg style="left:662.15px;top:276.59px" width="10" height="10" viewBox="0 0 10 10"><path d="M1.0,6.5 L6.9,0.9 Q7.5,0.4 8.1,0.9 L8.6,1.4 Q9.1,2.0 8.6,2.6 L2.7,8.3 Q2.1,8.8 1.5,8.3 L1.0,7.8 Q0.5,7.1 1.0,6.5 Z" fill="none" stroke="#c6c6c6" stroke-width="0.8"/></svg>
<svg style="left:722.7px;top:276.59px" width="10" height="10" viewBox="0 0 10 10"><path d="M1.0,6.5 L6.9,0.9 Q7.5,0.4 8.1,0.9 L8.6,1.4 Q9.1,2.0 8.6,2.6 L2.7,8.3 Q2.1,8.8 1.5,8.3 L1.0,7.8 Q0.5,7.1 1.0,6.5 Z" fill="none" stroke="#c6c6c6" stroke-width="0.8"/></svg>
<svg style="left:783.25px;top:276.59px" width="10" height="10" viewBox="0 0 10 10"><path d="M1.0,6.5 L6.9,0.9 Q7.5,0.4 8.1,0.9 L8.6,1.4 Q9.1,2.0 8.6,2.6 L2.7,8.3 Q2.1,8.8 1.5,8.3 L1.0,7.8 Q0.5,7.1 1.0,6.5 Z" fill="none" stroke="#c6c6c6" stroke-width="0.8"/></svg>
<svg style="left:844.8px;top:276.59px" width="10" height="10" viewBox="0 0 10 10"><path d="M1.0,6.5 L6.9,0.9 Q7.5,0.4 8.1,0.9 L8.6,1.4 Q9.1,2.0 8.6,2.6 L2.7,8.3 Q2.1,8.8 1.5,8.3 L1.0,7.8 Q0.5,7.1 1.0,6.5 Z" fill="none" stroke="#c6c6c6" stroke-width="0.8"/></svg>
<div style="left:0px;top:305.23px;width:903.5px;height:1px;background:#f0f0f0;"></div>
<div style="left:93.3px;top:293.22px;font-size:7.6px;line-height:10.64px;color:#1f1f1f;font-weight:bold;white-space:nowrap;">Request</div>
<svg style="left:152.7px;top:292.36px" width="10" height="10" viewBox="0 0 10 10"><path d="M1.0,6.5 L6.9,0.9 Q7.5,0.4 8.1,0.9 L8.6,1.4 Q9.1,2.0 8.6,2.6 L2.7,8.3 Q2.1,8.8 1.5,8.3 L1.0,7.8 Q0.5,7.1 1.0,6.5 Z" fill="none" stroke="#c6c6c6" stroke-width="0.8"/></svg>
<div style="left:70.78px;width:120px;top:292.08px;font-size:8.3px;line-height:11.62px;color:#1f1f1f;font-weight:bold;white-space:nowrap;text-align:right;letter-spacing:-0.08px;">10.00</div>
<div style="left:112.38px;width:120px;top:292.08px;font-size:8.3px;line-height:11.62px;color:#1f1f1f;font-weight:bold;white-space:nowrap;text-align:right;letter-spacing:-0.08px;">10.00</div>
<svg style="left:238.3px;top:292.36px" width="10" height="10" viewBox="0 0 10 10"><path d="M1.0,6.5 L6.9,0.9 Q7.5,0.4 8.1,0.9 L8.6,1.4 Q9.1,2.0 8.6,2.6 L2.7,8.3 Q2.1,8.8 1.5,8.3 L1.0,7.8 Q0.5,7.1 1.0,6.5 Z" fill="none" stroke="#c6c6c6" stroke-width="0.8"/></svg>
<svg style="left:298.85px;top:292.36px" width="10" height="10" viewBox="0 0 10 10"><path d="M1.0,6.5 L6.9,0.9 Q7.5,0.4 8.1,0.9 L8.6,1.4 Q9.1,2.0 8.6,2.6 L2.7,8.3 Q2.1,8.8 1.5,8.3 L1.0,7.8 Q0.5,7.1 1.0,6.5 Z" fill="none" stroke="#c6c6c6" stroke-width="0.8"/></svg>
<svg style="left:359.4px;top:292.36px" width="10" height="10" viewBox="0 0 10 10"><path d="M1.0,6.5 L6.9,0.9 Q7.5,0.4 8.1,0.9 L8.6,1.4 Q9.1,2.0 8.6,2.6 L2.7,8.3 Q2.1,8.8 1.5,8.3 L1.0,7.8 Q0.5,7.1 1.0,6.5 Z" fill="none" stroke="#c6c6c6" stroke-width="0.8"/></svg>
<div style="left:295.03px;width:120px;top:292.08px;font-size:8.3px;line-height:11.62px;color:#1f1f1f;font-weight:bold;white-space:nowrap;text-align:right;letter-spacing:-0.08px;">3.13</div>
<svg style="left:419.95px;top:292.36px" width="10" height="10" viewBox="0 0 10 10"><path d="M1.0,6.5 L6.9,0.9 Q7.5,0.4 8.1,0.9 L8.6,1.4 Q9.1,2.0 8.6,2.6 L2.7,8.3 Q2.1,8.8 1.5,8.3 L1.0,7.8 Q0.5,7.1 1.0,6.5 Z" fill="none" stroke="#c6c6c6" stroke-width="0.8"/></svg>
<div style="left:355.58px;width:120px;top:292.08px;font-size:8.3px;line-height:11.62px;color:#1f1f1f;font-weight:bold;white-space:nowrap;text-align:right;letter-spacing:-0.08px;">5.21</div>
<svg style="left:480.5px;top:292.36px" width="10" height="10" viewBox="0 0 10 10"><path d="M1.0,6.5 L6.9,0.9 Q7.5,0.4 8.1,0.9 L8.6,1.4 Q9.1,2.0 8.6,2.6 L2.7,8.3 Q2.1,8.8 1.5,8.3 L1.0,7.8 Q0.5,7.1 1.0,6.5 Z" fill="none" stroke="#c6c6c6" stroke-width="0.8"/></svg>
<div style="left:416.13px;width:120px;top:292.08px;font-size:8.3px;line-height:11.62px;color:#1f1f1f;font-weight:bold;white-space:nowrap;text-align:right;letter-spacing:-0.08px;">1.67</div>
<svg style="left:541.05px;top:292.36px" width="10" height="10" viewBox="0 0 10 10"><path d="M1.0,6.5 L6.9,0.9 Q7.5,0.4 8.1,0.9 L8.6,1.4 Q9.1,2.0 8.6,2.6 L2.7,8.3 Q2.1,8.8 1.5,8.3 L1.0,7.8 Q0.5,7.1 1.0,6.5 Z" fill="none" stroke="#c6c6c6" stroke-width="0.8"/></svg>
<svg style="left:601.6px;top:292.36px" width="10" height="10" viewBox="0 0 10 10"><path d="M1.0,6.5 L6.9,0.9 Q7.5,0.4 8.1,0.9 L8.6,1.4 Q9.1,2.0 8.6,2.6 L2.7,8.3 Q2.1,8.8 1.5,8.3 L1.0,7.8 Q0.5,7.1 1.0,6.5 Z" fill="none" stroke="#c6c6c6" stroke-width="0.8"/></svg>
<svg style="left:662.15px;top:292.36px" width="10" height="10" viewBox="0 0 10 10"><path d="M1.0,6.5 L6.9,0.9 Q7.5,0.4 8.1,0.9 L8.6,1.4 Q9.1,2.0 8.6,2.6 L2.7,8.3 Q2.1,8.8 1.5,8.3 L1.0,7.8 Q0.5,7.1 1.0,6.5 Z" fill="none" stroke="#c6c6c6" stroke-width="0.8"/></svg>
<svg style="left:722.7px;top:292.36px" width="10" height="10" viewBox="0 0 10 10"><path d="M1.0,6.5 L6.9,0.9 Q7.5,0.4 8.1,0.9 L8.6,1.4 Q9.1,2.0 8.6,2.6 L2.7,8.3 Q2.1,8.8 1.5,8.3 L1.0,7.8 Q0.5,7.1 1.0,6.5 Z" fill="none" stroke="#c6c6c6" stroke-width="0.8"/></svg>
<svg style="left:783.25px;top:292.36px" width="10" height="10" viewBox="0 0 10 10"><path d="M1.0,6.5 L6.9,0.9 Q7.5,0.4 8.1,0.9 L8.6,1.4 Q9.1,2.0 8.6,2.6 L2.7,8.3 Q2.1,8.8 1.5,8.3 L1.0,7.8 Q0.5,7.1 1.0,6.5 Z" fill="none" stroke="#c6c6c6" stroke-width="0.8"/></svg>
<svg style="left:844.8px;top:292.36px" width="10" height="10" viewBox="0 0 10 10"><path d="M1.0,6.5 L6.9,0.9 Q7.5,0.4 8.1,0.9 L8.6,1.4 Q9.1,2.0 8.6,2.6 L2.7,8.3 Q2.1,8.8 1.5,8.3 L1.0,7.8 Q0.5,7.1 1.0,6.5 Z" fill="none" stroke="#c6c6c6" stroke-width="0.8"/></svg>
<div style="left:0px;top:321px;width:903.5px;height:1px;background:#f0f0f0;"></div>
<svg style="left:15.9px;top:309.43px" width="9" height="9" viewBox="0 0 9 9"><rect x="0.45" y="0.45" width="6.7" height="6.6" rx="1" fill="none" stroke="#5a5560" stroke-width="0.8"/><rect x="0.8" y="0.8" width="6.0" height="2.0" fill="#77737c"/><path d="M1.5,3.2 L4.2,3.2" stroke="#999" stroke-width="0.6"/><circle cx="4.9" cy="5.0" r="0.85" fill="#111"/></svg>
<div style="left:26.7px;top:308.99px;font-size:7.6px;line-height:10.64px;color:#383838;font-weight:normal;white-space:nowrap;-webkit-text-stroke:0.15px #444;">Schedule SP...</div>
<div style="left:5.7px;top:316.63px;width:6.1px;height:0.8px;background:#d4d4d4;"></div>
<div style="left:81.3px;top:313.7px;width:6.3px;height:1.1px;background:#262626;"></div>
<div style="left:93.3px;top:308.99px;font-size:7.6px;line-height:10.64px;color:#383838;font-weight:normal;white-space:nowrap;-webkit-text-stroke:0.15px #444;letter-spacing:0.22px;">Commitment</div>
<svg style="left:152.7px;top:308.13px" width="10" height="10" viewBox="0 0 10 10"><path d="M1.0,6.5 L6.9,0.9 Q7.5,0.4 8.1,0.9 L8.6,1.4 Q9.1,2.0 8.6,2.6 L2.7,8.3 Q2.1,8.8 1.5,8.3 L1.0,7.8 Q0.5,7.1 1.0,6.5 Z" fill="none" stroke="#c6c6c6" stroke-width="0.8"/></svg>
<div style="left:70.78px;width:120px;top:307.85px;font-size:8.3px;line-height:11.62px;color:#383838;font-weight:normal;white-space:nowrap;text-align:right;letter-spacing:-0.08px;-webkit-text-stroke:0.15px #444;">9.00</div>
<div style="left:112.38px;width:120px;top:307.85px;font-size:8.3px;line-height:11.62px;color:#383838;font-weight:normal;white-space:nowrap;text-align:right;letter-spacing:-0.08px;-webkit-text-stroke:0.15px #444;">9.00</div>
<svg style="left:238.3px;top:308.13px" width="10" height="10" viewBox="0 0 10 10"><path d="M1.0,6.5 L6.9,0.9 Q7.5,0.4 8.1,0.9 L8.6,1.4 Q9.1,2.0 8.6,2.6 L2.7,8.3 Q2.1,8.8 1.5,8.3 L1.0,7.8 Q0.5,7.1 1.0,6.5 Z" fill="none" stroke="#c6c6c6" stroke-width="0.8"/></svg>
<svg style="left:298.85px;top:308.13px" width="10" height="10" viewBox="0 0 10 10"><path d="M1.0,6.5 L6.9,0.9 Q7.5,0.4 8.1,0.9 L8.6,1.4 Q9.1,2.0 8.6,2.6 L2.7,8.3 Q2.1,8.8 1.5,8.3 L1.0,7.8 Q0.5,7.1 1.0,6.5 Z" fill="none" stroke="#c6c6c6" stroke-width="0.8"/></svg>
<svg style="left:359.4px;top:308.13px" width="10" height="10" viewBox="0 0 10 10"><path d="M1.0,6.5 L6.9,0.9 Q7.5,0.4 8.1,0.9 L8.6,1.4 Q9.1,2.0 8.6,2.6 L2.7,8.3 Q2.1,8.8 1.5,8.3 L1.0,7.8 Q0.5,7.1 1.0,6.5 Z" fill="none" stroke="#c6c6c6" stroke-width="0.8"/></svg>
<div style="left:295.03px;width:120px;top:307.85px;font-size:8.3px;line-height:11.62px;color:#383838;font-weight:normal;white-space:nowrap;text-align:right;letter-spacing:-0.08px;-webkit-text-stroke:0.15px #444;">2.00</div>
<svg style="left:419.95px;top:308.13px" width="10" height="10" viewBox="0 0 10 10"><path d="M1.0,6.5 L6.9,0.9 Q7.5,0.4 8.1,0.9 L8.6,1.4 Q9.1,2.0 8.6,2.6 L2.7,8.3 Q2.1,8.8 1.5,8.3 L1.0,7.8 Q0.5,7.1 1.0,6.5 Z" fill="none" stroke="#c6c6c6" stroke-width="0.8"/></svg>
<div style="left:355.58px;width:120px;top:307.85px;font-size:8.3px;line-height:11.62px;color:#383838;font-weight:normal;white-space:nowrap;text-align:right;letter-spacing:-0.08px;-webkit-text-stroke:0.15px #444;">7.00</div>
<svg style="left:480.5px;top:308.13px" width="10" height="10" viewBox="0 0 10 10"><path d="M1.0,6.5 L6.9,0.9 Q7.5,0.4 8.1,0.9 L8.6,1.4 Q9.1,2.0 8.6,2.6 L2.7,8.3 Q2.1,8.8 1.5,8.3 L1.0,7.8 Q0.5,7.1 1.0,6.5 Z" fill="none" stroke="#c6c6c6" stroke-width="0.8"/></svg>
<svg style="left:541.05px;top:308.13px" width="10" height="10" viewBox="0 0 10 10"><path d="M1.0,6.5 L6.9,0.9 Q7.5,0.4 8.1,0.9 L8.6,1.4 Q9.1,2.0 8.6,2.6 L2.7,8.3 Q2.1,8.8 1.5,8.3 L1.0,7.8 Q0.5,7.1 1.0,6.5 Z" fill="none" stroke="#c6c6c6" stroke-width="0.8"/></svg>
<svg style="left:601.6px;top:308.13px" width="10" height="10" viewBox="0 0 10 10"><path d="M1.0,6.5 L6.9,0.9 Q7.5,0.4 8.1,0.9 L8.6,1.4 Q9.1,2.0 8.6,2.6 L2.7,8.3 Q2.1,8.8 1.5,8.3 L1.0,7.8 Q0.5,7.1 1.0,6.5 Z" fill="none" stroke="#c6c6c6" stroke-width="0.8"/></svg>
<svg style="left:662.15px;top:308.13px" width="10" height="10" viewBox="0 0 10 10"><path d="M1.0,6.5 L6.9,0.9 Q7.5,0.4 8.1,0.9 L8.6,1.4 Q9.1,2.0 8.6,2.6 L2.7,8.3 Q2.1,8.8 1.5,8.3 L1.0,7.8 Q0.5,7.1 1.0,6.5 Z" fill="none" stroke="#c6c6c6" stroke-width="0.8"/></svg>
<svg style="left:722.7px;top:308.13px" width="10" height="10" viewBox="0 0 10 10"><path d="M1.0,6.5 L6.9,0.9 Q7.5,0.4 8.1,0.9 L8.6,1.4 Q9.1,2.0 8.6,2.6 L2.7,8.3 Q2.1,8.8 1.5,8.3 L1.0,7.8 Q0.5,7.1 1.0,6.5 Z" fill="none" stroke="#c6c6c6" stroke-width="0.8"/></svg>
<svg style="left:783.25px;top:308.13px" width="10" height="10" viewBox="0 0 10 10"><path d="M1.0,6.5 L6.9,0.9 Q7.5,0.4 8.1,0.9 L8.6,1.4 Q9.1,2.0 8.6,2.6 L2.7,8.3 Q2.1,8.8 1.5,8.3 L1.0,7.8 Q0.5,7.1 1.0,6.5 Z" fill="none" stroke="#c6c6c6" stroke-width="0.8"/></svg>
<svg style="left:844.8px;top:308.13px" width="10" height="10" viewBox="0 0 10 10"><path d="M1.0,6.5 L6.9,0.9 Q7.5,0.4 8.1,0.9 L8.6,1.4 Q9.1,2.0 8.6,2.6 L2.7,8.3 Q2.1,8.8 1.5,8.3 L1.0,7.8 Q0.5,7.1 1.0,6.5 Z" fill="none" stroke="#c6c6c6" stroke-width="0.8"/></svg>
<div style="left:0px;top:336.77px;width:903.5px;height:1px;background:#f0f0f0;"></div>
<div style="left:93.3px;top:324.76px;font-size:7.6px;line-height:10.64px;color:#383838;font-weight:normal;white-space:nowrap;-webkit-text-stroke:0.15px #444;">Request</div>
<svg style="left:152.7px;top:323.9px" width="10" height="10" viewBox="0 0 10 10"><path d="M1.0,6.5 L6.9,0.9 Q7.5,0.4 8.1,0.9 L8.6,1.4 Q9.1,2.0 8.6,2.6 L2.7,8.3 Q2.1,8.8 1.5,8.3 L1.0,7.8 Q0.5,7.1 1.0,6.5 Z" fill="none" stroke="#c6c6c6" stroke-width="0.8"/></svg>
<div style="left:70.78px;width:120px;top:323.62px;font-size:8.3px;line-height:11.62px;color:#383838;font-weight:normal;white-space:nowrap;text-align:right;letter-spacing:-0.08px;-webkit-text-stroke:0.15px #444;">10.00</div>
<div style="left:112.38px;width:120px;top:323.62px;font-size:8.3px;line-height:11.62px;color:#383838;font-weight:normal;white-space:nowrap;text-align:right;letter-spacing:-0.08px;-webkit-text-stroke:0.15px #444;">10.00</div>
<svg style="left:238.3px;top:323.9px" width="10" height="10" viewBox="0 0 10 10"><path d="M1.0,6.5 L6.9,0.9 Q7.5,0.4 8.1,0.9 L8.6,1.4 Q9.1,2.0 8.6,2.6 L2.7,8.3 Q2.1,8.8 1.5,8.3 L1.0,7.8 Q0.5,7.1 1.0,6.5 Z" fill="none" stroke="#c6c6c6" stroke-width="0.8"/></svg>
<svg style="left:298.85px;top:323.9px" width="10" height="10" viewBox="0 0 10 10"><path d="M1.0,6.5 L6.9,0.9 Q7.5,0.4 8.1,0.9 L8.6,1.4 Q9.1,2.0 8.6,2.6 L2.7,8.3 Q2.1,8.8 1.5,8.3 L1.0,7.8 Q0.5,7.1 1.0,6.5 Z" fill="none" stroke="#c6c6c6" stroke-width="0.8"/></svg>
<svg style="left:359.4px;top:323.9px" width="10" height="10" viewBox="0 0 10 10"><path d="M1.0,6.5 L6.9,0.9 Q7.5,0.4 8.1,0.9 L8.6,1.4 Q9.1,2.0 8.6,2.6 L2.7,8.3 Q2.1,8.8 1.5,8.3 L1.0,7.8 Q0.5,7.1 1.0,6.5 Z" fill="none" stroke="#c6c6c6" stroke-width="0.8"/></svg>
<div style="left:295.03px;width:120px;top:323.62px;font-size:8.3px;line-height:11.62px;color:#383838;font-weight:normal;white-space:nowrap;text-align:right;letter-spacing:-0.08px;-webkit-text-stroke:0.15px #444;">3.13</div>
<svg style="left:419.95px;top:323.9px" width="10" height="10" viewBox="0 0 10 10"><path d="M1.0,6.5 L6.9,0.9 Q7.5,0.4 8.1,0.9 L8.6,1.4 Q9.1,2.0 8.6,2.6 L2.7,8.3 Q2.1,8.8 1.5,8.3 L1.0,7.8 Q0.5,7.1 1.0,6.5 Z" fill="none" stroke="#c6c6c6" stroke-width="0.8"/></svg>
<div style="left:355.58px;width:120px;top:323.62px;font-size:8.3px;line-height:11.62px;color:#383838;font-weight:normal;white-space:nowrap;text-align:right;letter-spacing:-0.08px;-webkit-text-stroke:0.15px #444;">5.21</div>
<svg style="left:480.5px;top:323.9px" width="10" height="10" viewBox="0 0 10 10"><path d="M1.0,6.5 L6.9,0.9 Q7.5,0.4 8.1,0.9 L8.6,1.4 Q9.1,2.0 8.6,2.6 L2.7,8.3 Q2.1,8.8 1.5,8.3 L1.0,7.8 Q0.5,7.1 1.0,6.5 Z" fill="none" stroke="#c6c6c6" stroke-width="0.8"/></svg>
<div style="left:416.13px;width:120px;top:323.62px;font-size:8.3px;line-height:11.62px;color:#383838;font-weight:normal;white-space:nowrap;text-align:right;letter-spacing:-0.08px;-webkit-text-stroke:0.15px #444;">1.67</div>
<svg style="left:541.05px;top:323.9px" width="10" height="10" viewBox="0 0 10 10"><path d="M1.0,6.5 L6.9,0.9 Q7.5,0.4 8.1,0.9 L8.6,1.4 Q9.1,2.0 8.6,2.6 L2.7,8.3 Q2.1,8.8 1.5,8.3 L1.0,7.8 Q0.5,7.1 1.0,6.5 Z" fill="none" stroke="#c6c6c6" stroke-width="0.8"/></svg>
<svg style="left:601.6px;top:323.9px" width="10" height="10" viewBox="0 0 10 10"><path d="M1.0,6.5 L6.9,0.9 Q7.5,0.4 8.1,0.9 L8.6,1.4 Q9.1,2.0 8.6,2.6 L2.7,8.3 Q2.1,8.8 1.5,8.3 L1.0,7.8 Q0.5,7.1 1.0,6.5 Z" fill="none" stroke="#c6c6c6" stroke-width="0.8"/></svg>
<svg style="left:662.15px;top:323.9px" width="10" height="10" viewBox="0 0 10 10"><path d="M1.0,6.5 L6.9,0.9 Q7.5,0.4 8.1,0.9 L8.6,1.4 Q9.1,2.0 8.6,2.6 L2.7,8.3 Q2.1,8.8 1.5,8.3 L1.0,7.8 Q0.5,7.1 1.0,6.5 Z" fill="none" stroke="#c6c6c6" stroke-width="0.8"/></svg>
<svg style="left:722.7px;top:323.9px" width="10" height="10" viewBox="0 0 10 10"><path d="M1.0,6.5 L6.9,0.9 Q7.5,0.4 8.1,0.9 L8.6,1.4 Q9.1,2.0 8.6,2.6 L2.7,8.3 Q2.1,8.8 1.5,8.3 L1.0,7.8 Q0.5,7.1 1.0,6.5 Z" fill="none" stroke="#c6c6c6" stroke-width="0.8"/></svg>
<svg style="left:783.25px;top:323.9px" width="10" height="10" viewBox="0 0 10 10"><path d="M1.0,6.5 L6.9,0.9 Q7.5,0.4 8.1,0.9 L8.6,1.4 Q9.1,2.0 8.6,2.6 L2.7,8.3 Q2.1,8.8 1.5,8.3 L1.0,7.8 Q0.5,7.1 1.0,6.5 Z" fill="none" stroke="#c6c6c6" stroke-width="0.8"/></svg>
<svg style="left:844.8px;top:323.9px" width="10" height="10" viewBox="0 0 10 10"><path d="M1.0,6.5 L6.9,0.9 Q7.5,0.4 8.1,0.9 L8.6,1.4 Q9.1,2.0 8.6,2.6 L2.7,8.3 Q2.1,8.8 1.5,8.3 L1.0,7.8 Q0.5,7.1 1.0,6.5 Z" fill="none" stroke="#c6c6c6" stroke-width="0.8"/></svg>
<div style="left:0px;top:352.54px;width:903.5px;height:1px;background:#f0f0f0;"></div>
<div style="left:93.3px;top:340.53px;font-size:7.6px;line-height:10.64px;color:#383838;font-weight:normal;white-space:nowrap;-webkit-text-stroke:0.15px #444;letter-spacing:0.22px;">Commitment</div>
<svg style="left:152.7px;top:339.67px" width="10" height="10" viewBox="0 0 10 10"><path d="M1.0,6.5 L6.9,0.9 Q7.5,0.4 8.1,0.9 L8.6,1.4 Q9.1,2.0 8.6,2.6 L2.7,8.3 Q2.1,8.8 1.5,8.3 L1.0,7.8 Q0.5,7.1 1.0,6.5 Z" fill="none" stroke="#c6c6c6" stroke-width="0.8"/></svg>
<div style="left:70.78px;width:120px;top:339.39px;font-size:8.3px;line-height:11.62px;color:#383838;font-weight:normal;white-space:nowrap;text-align:right;letter-spacing:-0.08px;-webkit-text-stroke:0.15px #444;">9.00</div>
<div style="left:112.38px;width:120px;top:339.39px;font-size:8.3px;line-height:11.62px;color:#383838;font-weight:normal;white-space:nowrap;text-align:right;letter-spacing:-0.08px;-webkit-text-stroke:0.15px #444;">9.00</div>
<svg style="left:238.3px;top:339.67px" width="10" height="10" viewBox="0 0 10 10"><path d="M1.0,6.5 L6.9,0.9 Q7.5,0.4 8.1,0.9 L8.6,1.4 Q9.1,2.0 8.6,2.6 L2.7,8.3 Q2.1,8.8 1.5,8.3 L1.0,7.8 Q0.5,7.1 1.0,6.5 Z" fill="none" stroke="#c6c6c6" stroke-width="0.8"/></svg>
<svg style="left:298.85px;top:339.67px" width="10" height="10" viewBox="0 0 10 10"><path d="M1.0,6.5 L6.9,0.9 Q7.5,0.4 8.1,0.9 L8.6,1.4 Q9.1,2.0 8.6,2.6 L2.7,8.3 Q2.1,8.8 1.5,8.3 L1.0,7.8 Q0.5,7.1 1.0,6.5 Z" fill="none" stroke="#c6c6c6" stroke-width="0.8"/></svg>
<svg style="left:359.4px;top:339.67px" width="10" height="10" viewBox="0 0 10 10"><path d="M1.0,6.5 L6.9,0.9 Q7.5,0.4 8.1,0.9 L8.6,1.4 Q9.1,2.0 8.6,2.6 L2.7,8.3 Q2.1,8.8 1.5,8.3 L1.0,7.8 Q0.5,7.1 1.0,6.5 Z" fill="none" stroke="#c6c6c6" stroke-width="0.8"/></svg>
<svg style="left:419.95px;top:339.67px" width="10" height="10" viewBox="0 0 10 10"><path d="M1.0,6.5 L6.9,0.9 Q7.5,0.4 8.1,0.9 L8.6,1.4 Q9.1,2.0 8.6,2.6 L2.7,8.3 Q2.1,8.8 1.5,8.3 L1.0,7.8 Q0.5,7.1 1.0,6.5 Z" fill="none" stroke="#c6c6c6" stroke-width="0.8"/></svg>
<svg style="left:480.5px;top:339.67px" width="10" height="10" viewBox="0 0 10 10"><path d="M1.0,6.5 L6.9,0.9 Q7.5,0.4 8.1,0.9 L8.6,1.4 Q9.1,2.0 8.6,2.6 L2.7,8.3 Q2.1,8.8 1.5,8.3 L1.0,7.8 Q0.5,7.1 1.0,6.5 Z" fill="none" stroke="#c6c6c6" stroke-width="0.8"/></svg>
<svg style="left:541.05px;top:339.67px" width="10" height="10" viewBox="0 0 10 10"><path d="M1.0,6.5 L6.9,0.9 Q7.5,0.4 8.1,0.9 L8.6,1.4 Q9.1,2.0 8.6,2.6 L2.7,8.3 Q2.1,8.8 1.5,8.3 L1.0,7.8 Q0.5,7.1 1.0,6.5 Z" fill="none" stroke="#c6c6c6" stroke-width="0.8"/></svg>
<svg style="left:601.6px;top:339.67px" width="10" height="10" viewBox="0 0 10 10"><path d="M1.0,6.5 L6.9,0.9 Q7.5,0.4 8.1,0.9 L8.6,1.4 Q9.1,2.0 8.6,2.6 L2.7,8.3 Q2.1,8.8 1.5,8.3 L1.0,7.8 Q0.5,7.1 1.0,6.5 Z" fill="none" stroke="#c6c6c6" stroke-width="0.8"/></svg>
<svg style="left:662.15px;top:339.67px" width="10" height="10" viewBox="0 0 10 10"><path d="M1.0,6.5 L6.9,0.9 Q7.5,0.4 8.1,0.9 L8.6,1.4 Q9.1,2.0 8.6,2.6 L2.7,8.3 Q2.1,8.8 1.5,8.3 L1.0,7.8 Q0.5,7.1 1.0,6.5 Z" fill="none" stroke="#c6c6c6" stroke-width="0.8"/></svg>
<svg style="left:722.7px;top:339.67px" width="10" height="10" viewBox="0 0 10 10"><path d="M1.0,6.5 L6.9,0.9 Q7.5,0.4 8.1,0.9 L8.6,1.4 Q9.1,2.0 8.6,2.6 L2.7,8.3 Q2.1,8.8 1.5,8.3 L1.0,7.8 Q0.5,7.1 1.0,6.5 Z" fill="none" stroke="#c6c6c6" stroke-width="0.8"/></svg>
<svg style="left:783.25px;top:339.67px" width="10" height="10" viewBox="0 0 10 10"><path d="M1.0,6.5 L6.9,0.9 Q7.5,0.4 8.1,0.9 L8.6,1.4 Q9.1,2.0 8.6,2.6 L2.7,8.3 Q2.1,8.8 1.5,8.3 L1.0,7.8 Q0.5,7.1 1.0,6.5 Z" fill="none" stroke="#c6c6c6" stroke-width="0.8"/></svg>
<svg style="left:844.8px;top:339.67px" width="10" height="10" viewBox="0 0 10 10"><path d="M1.0,6.5 L6.9,0.9 Q7.5,0.4 8.1,0.9 L8.6,1.4 Q9.1,2.0 8.6,2.6 L2.7,8.3 Q2.1,8.8 1.5,8.3 L1.0,7.8 Q0.5,7.1 1.0,6.5 Z" fill="none" stroke="#c6c6c6" stroke-width="0.8"/></svg>
<div style="left:5.7px;top:21.87px;width:0.8px;height:121.09px;background:#d0d0d0;"></div>
<div style="left:5.7px;top:163.8px;width:0.8px;height:105.32px;background:#d0d0d0;"></div>
<div style="left:5.7px;top:289.96px;width:0.8px;height:69.74px;background:#d0d0d0;"></div>
<div style="left:5.7px;top:-11.67px;width:0.8px;height:12.7px;background:#d0d0d0;"></div>
<div style="left:89px;top:0px;width:1px;height:379.7px;background:#efefef;"></div>
<div style="left:150.2px;top:0px;width:1px;height:379.7px;background:#efefef;"></div>
<div style="left:193.1px;top:0px;width:1px;height:379.7px;background:#efefef;"></div>
<div style="left:296.35px;top:0px;width:1px;height:379.7px;background:#efefef;"></div>
<div style="left:356.9px;top:0px;width:1px;height:379.7px;background:#efefef;"></div>
<div style="left:417.45px;top:0px;width:1px;height:379.7px;background:#efefef;"></div>
<div style="left:478px;top:0px;width:1px;height:379.7px;background:#efefef;"></div>
<div style="left:538.55px;top:0px;width:1px;height:379.7px;background:#efefef;"></div>
<div style="left:599.1px;top:0px;width:1px;height:379.7px;background:#efefef;"></div>
<div style="left:659.65px;top:0px;width:1px;height:379.7px;background:#efefef;"></div>
<div style="left:720.2px;top:0px;width:1px;height:379.7px;background:#efefef;"></div>
<div style="left:780.75px;top:0px;width:1px;height:379.7px;background:#efefef;"></div>
<div style="left:902.8px;top:0px;width:1px;height:379.7px;background:#efefef;"></div>
</div>
<div style="left:17.7px;top:228.5px;width:903.5px;height:15.9px;background:#f8f8f8;"></div>
<div style="left:17.7px;top:243.9px;width:903.5px;height:1px;background:#ebebeb;"></div>
<div style="left:111px;top:231.83px;font-size:7.6px;line-height:10.64px;color:#1f1f1f;font-weight:bold;white-space:nowrap;">Commitment</div>
<div style="left:106.4px;top:228.5px;width:2px;height:15.9px;background:#66f2d1;"></div>
<div style="right:751.52px;top:231.19px;font-size:8.3px;line-height:11.62px;color:#333;font-weight:normal;white-space:nowrap;text-align:right;letter-spacing:-0.08px;-webkit-text-stroke:0.35px #333;">851.00</div>
<div style="right:709.92px;top:231.19px;font-size:8.3px;line-height:11.62px;color:#333;font-weight:normal;white-space:nowrap;text-align:right;letter-spacing:-0.08px;-webkit-text-stroke:0.35px #333;">851.00</div>
<div style="right:648.37px;top:231.19px;font-size:8.3px;line-height:11.62px;color:#333;font-weight:normal;white-space:nowrap;text-align:right;letter-spacing:-0.08px;-webkit-text-stroke:0.35px #333;">100.00</div>
<div style="right:587.82px;top:231.19px;font-size:8.3px;line-height:11.62px;color:#333;font-weight:normal;white-space:nowrap;text-align:right;letter-spacing:-0.08px;-webkit-text-stroke:0.35px #333;">23.60</div>
<div style="right:527.27px;top:231.19px;font-size:8.3px;line-height:11.62px;color:#333;font-weight:normal;white-space:nowrap;text-align:right;letter-spacing:-0.08px;-webkit-text-stroke:0.35px #333;">51.05</div>
<div style="right:466.72px;top:231.19px;font-size:8.3px;line-height:11.62px;color:#333;font-weight:normal;white-space:nowrap;text-align:right;letter-spacing:-0.08px;-webkit-text-stroke:0.35px #333;">129.79</div>
<div style="right:406.17px;top:231.19px;font-size:8.3px;line-height:11.62px;color:#333;font-weight:normal;white-space:nowrap;text-align:right;letter-spacing:-0.08px;-webkit-text-stroke:0.35px #333;">136.72</div>
<div style="right:345.62px;top:231.19px;font-size:8.3px;line-height:11.62px;color:#333;font-weight:normal;white-space:nowrap;text-align:right;letter-spacing:-0.08px;-webkit-text-stroke:0.35px #333;">123.85</div>
<div style="right:285.07px;top:231.19px;font-size:8.3px;line-height:11.62px;color:#333;font-weight:normal;white-space:nowrap;text-align:right;letter-spacing:-0.08px;-webkit-text-stroke:0.35px #333;">42.00</div>
<div style="right:224.52px;top:231.19px;font-size:8.3px;line-height:11.62px;color:#333;font-weight:normal;white-space:nowrap;text-align:right;letter-spacing:-0.08px;-webkit-text-stroke:0.35px #333;">100.00</div>
<div style="right:163.97px;top:231.19px;font-size:8.3px;line-height:11.62px;color:#333;font-weight:normal;white-space:nowrap;text-align:right;letter-spacing:-0.08px;-webkit-text-stroke:0.35px #333;">20.00</div>
<div style="right:102.42px;top:231.19px;font-size:8.3px;line-height:11.62px;color:#333;font-weight:normal;white-space:nowrap;text-align:right;letter-spacing:-0.08px;-webkit-text-stroke:0.35px #333;">58.67</div>
<div style="right:41.92px;top:231.19px;font-size:8.3px;line-height:11.62px;color:#333;font-weight:normal;white-space:nowrap;text-align:right;letter-spacing:-0.08px;-webkit-text-stroke:0.35px #333;">65.33</div>
<div style="left:17.7px;top:244.4px;width:903.5px;height:15.9px;background:#f8f8f8;"></div>
<div style="left:17.7px;top:243.9px;width:903.5px;height:1px;background:#ebebeb;"></div>
<div style="left:17.7px;top:259.8px;width:903.5px;height:1px;background:#ebebeb;"></div>
<div style="left:111px;top:247.73px;font-size:7.6px;line-height:10.64px;color:#1f1f1f;font-weight:bold;white-space:nowrap;">Request</div>
<div style="left:106.4px;top:244.4px;width:2px;height:15.9px;background:#4ade84;"></div>
<div style="right:751.52px;top:247.09px;font-size:8.3px;line-height:11.62px;color:#333;font-weight:normal;white-space:nowrap;text-align:right;letter-spacing:-0.08px;-webkit-text-stroke:0.35px #333;">1,268.00</div>
<div style="right:709.92px;top:247.09px;font-size:8.3px;line-height:11.62px;color:#333;font-weight:normal;white-space:nowrap;text-align:right;letter-spacing:-0.08px;-webkit-text-stroke:0.35px #333;">1,268.00</div>
<div style="right:648.37px;top:247.09px;font-size:8.3px;line-height:11.62px;color:#333;font-weight:normal;white-space:nowrap;text-align:right;letter-spacing:-0.08px;-webkit-text-stroke:0.35px #333;">142.50</div>
<div style="right:587.82px;top:247.09px;font-size:8.3px;line-height:11.62px;color:#333;font-weight:normal;white-space:nowrap;text-align:right;letter-spacing:-0.08px;-webkit-text-stroke:0.35px #333;">283.50</div>
<div style="right:527.27px;top:247.09px;font-size:8.3px;line-height:11.62px;color:#333;font-weight:normal;white-space:nowrap;text-align:right;letter-spacing:-0.08px;-webkit-text-stroke:0.35px #333;">33.77</div>
<div style="right:466.72px;top:247.09px;font-size:8.3px;line-height:11.62px;color:#333;font-weight:normal;white-space:nowrap;text-align:right;letter-spacing:-0.08px;-webkit-text-stroke:0.35px #333;">133.55</div>
<div style="right:406.17px;top:247.09px;font-size:8.3px;line-height:11.62px;color:#333;font-weight:normal;white-space:nowrap;text-align:right;letter-spacing:-0.08px;-webkit-text-stroke:0.35px #333;">147.00</div>
<div style="right:345.62px;top:247.09px;font-size:8.3px;line-height:11.62px;color:#333;font-weight:normal;white-space:nowrap;text-align:right;letter-spacing:-0.08px;-webkit-text-stroke:0.35px #333;">135.88</div>
<div style="right:285.07px;top:247.09px;font-size:8.3px;line-height:11.62px;color:#333;font-weight:normal;white-space:nowrap;text-align:right;letter-spacing:-0.08px;-webkit-text-stroke:0.35px #333;">74.24</div>
<div style="right:224.52px;top:247.09px;font-size:8.3px;line-height:11.62px;color:#333;font-weight:normal;white-space:nowrap;text-align:right;letter-spacing:-0.08px;-webkit-text-stroke:0.35px #333;">145.78</div>
<div style="right:163.97px;top:247.09px;font-size:8.3px;line-height:11.62px;color:#333;font-weight:normal;white-space:nowrap;text-align:right;letter-spacing:-0.08px;-webkit-text-stroke:0.35px #333;">27.78</div>
<div style="right:102.42px;top:247.09px;font-size:8.3px;line-height:11.62px;color:#333;font-weight:normal;white-space:nowrap;text-align:right;letter-spacing:-0.08px;-webkit-text-stroke:0.35px #333;">65.94</div>
<div style="right:41.92px;top:247.09px;font-size:8.3px;line-height:11.62px;color:#333;font-weight:normal;white-space:nowrap;text-align:right;letter-spacing:-0.08px;-webkit-text-stroke:0.35px #333;">78.06</div>
<div style="left:28.9px;top:231.83px;font-size:7.6px;line-height:10.64px;color:#1f1f1f;font-weight:bold;white-space:nowrap;">Sum</div>
<div style="left:98.3px;top:235.8px;width:5.6px;height:1.2px;background:#2a2a2a;"></div>
<div style="left:167.9px;top:228.5px;width:1px;height:31.8px;background:#efefef;"></div>
<div style="left:210.8px;top:228.5px;width:1px;height:31.8px;background:#efefef;"></div>
<div style="left:314.05px;top:228.5px;width:1px;height:31.8px;background:#efefef;"></div>
<div style="left:374.6px;top:228.5px;width:1px;height:31.8px;background:#efefef;"></div>
<div style="left:435.15px;top:228.5px;width:1px;height:31.8px;background:#efefef;"></div>
<div style="left:495.7px;top:228.5px;width:1px;height:31.8px;background:#efefef;"></div>
<div style="left:556.25px;top:228.5px;width:1px;height:31.8px;background:#efefef;"></div>
<div style="left:616.8px;top:228.5px;width:1px;height:31.8px;background:#efefef;"></div>
<div style="left:677.35px;top:228.5px;width:1px;height:31.8px;background:#efefef;"></div>
<div style="left:737.9px;top:228.5px;width:1px;height:31.8px;background:#efefef;"></div>
<div style="left:798.45px;top:228.5px;width:1px;height:31.8px;background:#efefef;"></div>
<div style="left:920.5px;top:228.5px;width:1px;height:31.8px;background:#efefef;"></div>
<div style="left:252.4px;top:82px;width:1.8px;height:518.2px;background:#747474;"></div>
<div style="left:859.1px;top:82px;width:1.6px;height:23.5px;background:#747474;"></div>
<div style="left:859.1px;top:228.5px;width:1.6px;height:371.7px;background:#747474;"></div>
<div style="left:935.4px;top:252.6px;width:3px;height:55.2px;background:#c4c4c4;border-radius:1.5px;"></div>
</body></html>
